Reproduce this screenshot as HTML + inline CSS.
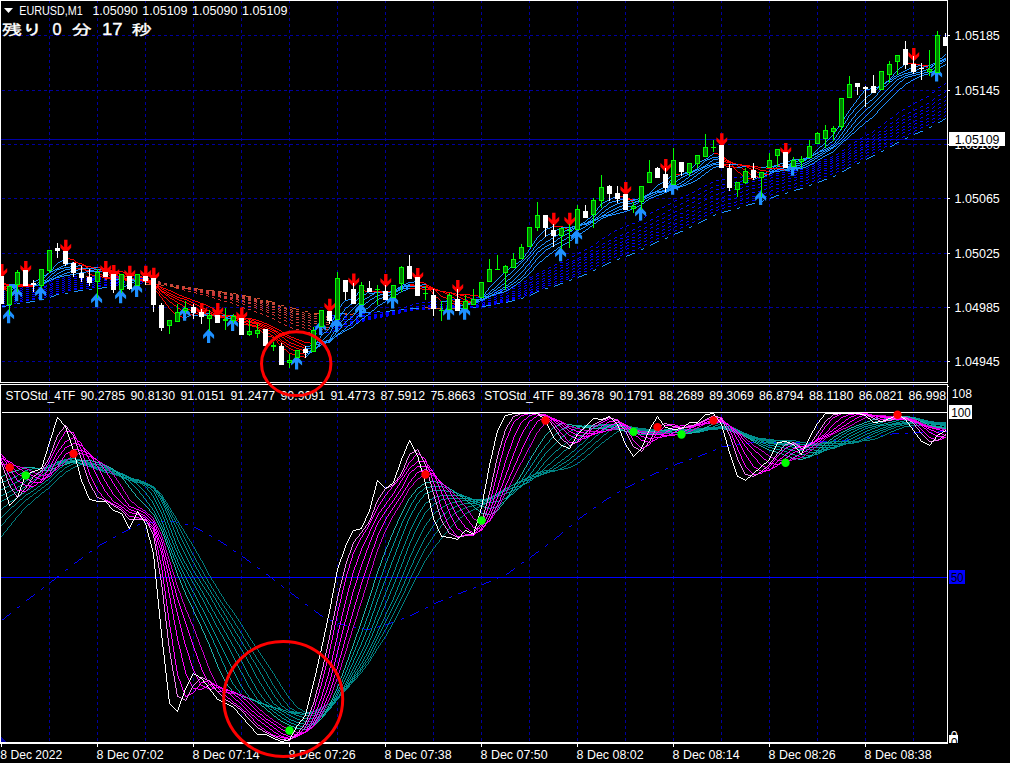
<!DOCTYPE html>
<html lang="ja"><head><meta charset="utf-8"><title>EURUSD,M1</title>
<style>html,body{margin:0;padding:0;background:#000;overflow:hidden}svg{display:block}</style>
</head><body>
<svg width="1012" height="763" viewBox="0 0 1012 763" shape-rendering="crispEdges">
<defs>
<clipPath id="cpMain"><rect x="1" y="1" width="946" height="381"/></clipPath>
<clipPath id="cpInd"><rect x="1" y="385" width="946" height="357"/></clipPath>
<clipPath id="cpHdr"><rect x="1" y="385" width="946" height="27"/></clipPath>
<clipPath id="cpStripes"><rect x="2" y="1" width="3" height="381"/><rect x="8" y="1" width="3" height="381"/><rect x="14" y="1" width="3" height="381"/><rect x="20" y="1" width="3" height="381"/><rect x="26" y="1" width="3" height="381"/><rect x="32" y="1" width="3" height="381"/><rect x="38" y="1" width="3" height="381"/><rect x="44" y="1" width="3" height="381"/><rect x="50" y="1" width="3" height="381"/><rect x="56" y="1" width="3" height="381"/><rect x="62" y="1" width="3" height="381"/><rect x="68" y="1" width="3" height="381"/><rect x="74" y="1" width="3" height="381"/><rect x="80" y="1" width="3" height="381"/><rect x="86" y="1" width="3" height="381"/><rect x="92" y="1" width="3" height="381"/><rect x="98" y="1" width="3" height="381"/><rect x="104" y="1" width="3" height="381"/><rect x="110" y="1" width="3" height="381"/><rect x="116" y="1" width="3" height="381"/><rect x="122" y="1" width="3" height="381"/><rect x="128" y="1" width="3" height="381"/><rect x="134" y="1" width="3" height="381"/><rect x="140" y="1" width="3" height="381"/><rect x="146" y="1" width="3" height="381"/><rect x="152" y="1" width="3" height="381"/><rect x="158" y="1" width="3" height="381"/><rect x="164" y="1" width="3" height="381"/><rect x="170" y="1" width="3" height="381"/><rect x="176" y="1" width="3" height="381"/><rect x="182" y="1" width="3" height="381"/><rect x="188" y="1" width="3" height="381"/><rect x="194" y="1" width="3" height="381"/><rect x="200" y="1" width="3" height="381"/><rect x="206" y="1" width="3" height="381"/><rect x="212" y="1" width="3" height="381"/><rect x="218" y="1" width="3" height="381"/><rect x="224" y="1" width="3" height="381"/><rect x="230" y="1" width="3" height="381"/><rect x="236" y="1" width="3" height="381"/><rect x="242" y="1" width="3" height="381"/><rect x="248" y="1" width="3" height="381"/><rect x="254" y="1" width="3" height="381"/><rect x="260" y="1" width="3" height="381"/><rect x="266" y="1" width="3" height="381"/><rect x="272" y="1" width="3" height="381"/><rect x="278" y="1" width="3" height="381"/><rect x="284" y="1" width="3" height="381"/><rect x="290" y="1" width="3" height="381"/><rect x="296" y="1" width="3" height="381"/><rect x="302" y="1" width="3" height="381"/><rect x="308" y="1" width="3" height="381"/><rect x="314" y="1" width="3" height="381"/><rect x="320" y="1" width="3" height="381"/><rect x="326" y="1" width="3" height="381"/><rect x="332" y="1" width="3" height="381"/><rect x="338" y="1" width="3" height="381"/><rect x="344" y="1" width="3" height="381"/><rect x="350" y="1" width="3" height="381"/><rect x="356" y="1" width="3" height="381"/><rect x="362" y="1" width="3" height="381"/><rect x="368" y="1" width="3" height="381"/><rect x="374" y="1" width="3" height="381"/><rect x="380" y="1" width="3" height="381"/><rect x="386" y="1" width="3" height="381"/><rect x="392" y="1" width="3" height="381"/><rect x="398" y="1" width="3" height="381"/><rect x="404" y="1" width="3" height="381"/><rect x="410" y="1" width="3" height="381"/><rect x="416" y="1" width="3" height="381"/><rect x="422" y="1" width="3" height="381"/><rect x="428" y="1" width="3" height="381"/><rect x="434" y="1" width="3" height="381"/><rect x="440" y="1" width="3" height="381"/><rect x="446" y="1" width="3" height="381"/><rect x="452" y="1" width="3" height="381"/><rect x="458" y="1" width="3" height="381"/><rect x="464" y="1" width="3" height="381"/><rect x="470" y="1" width="3" height="381"/><rect x="476" y="1" width="3" height="381"/><rect x="482" y="1" width="3" height="381"/><rect x="488" y="1" width="3" height="381"/><rect x="494" y="1" width="3" height="381"/><rect x="500" y="1" width="3" height="381"/><rect x="506" y="1" width="3" height="381"/><rect x="512" y="1" width="3" height="381"/><rect x="518" y="1" width="3" height="381"/><rect x="524" y="1" width="3" height="381"/><rect x="530" y="1" width="3" height="381"/><rect x="536" y="1" width="3" height="381"/><rect x="542" y="1" width="3" height="381"/><rect x="548" y="1" width="3" height="381"/><rect x="554" y="1" width="3" height="381"/><rect x="560" y="1" width="3" height="381"/><rect x="566" y="1" width="3" height="381"/><rect x="572" y="1" width="3" height="381"/><rect x="578" y="1" width="3" height="381"/><rect x="584" y="1" width="3" height="381"/><rect x="590" y="1" width="3" height="381"/><rect x="596" y="1" width="3" height="381"/><rect x="602" y="1" width="3" height="381"/><rect x="608" y="1" width="3" height="381"/><rect x="614" y="1" width="3" height="381"/><rect x="620" y="1" width="3" height="381"/><rect x="626" y="1" width="3" height="381"/><rect x="632" y="1" width="3" height="381"/><rect x="638" y="1" width="3" height="381"/><rect x="644" y="1" width="3" height="381"/><rect x="650" y="1" width="3" height="381"/><rect x="656" y="1" width="3" height="381"/><rect x="662" y="1" width="3" height="381"/><rect x="668" y="1" width="3" height="381"/><rect x="674" y="1" width="3" height="381"/><rect x="680" y="1" width="3" height="381"/><rect x="686" y="1" width="3" height="381"/><rect x="692" y="1" width="3" height="381"/><rect x="698" y="1" width="3" height="381"/><rect x="704" y="1" width="3" height="381"/><rect x="710" y="1" width="3" height="381"/><rect x="716" y="1" width="3" height="381"/><rect x="722" y="1" width="3" height="381"/><rect x="728" y="1" width="3" height="381"/><rect x="734" y="1" width="3" height="381"/><rect x="740" y="1" width="3" height="381"/><rect x="746" y="1" width="3" height="381"/><rect x="752" y="1" width="3" height="381"/><rect x="758" y="1" width="3" height="381"/><rect x="764" y="1" width="3" height="381"/><rect x="770" y="1" width="3" height="381"/><rect x="776" y="1" width="3" height="381"/><rect x="782" y="1" width="3" height="381"/><rect x="788" y="1" width="3" height="381"/><rect x="794" y="1" width="3" height="381"/><rect x="800" y="1" width="3" height="381"/><rect x="806" y="1" width="3" height="381"/><rect x="812" y="1" width="3" height="381"/><rect x="818" y="1" width="3" height="381"/><rect x="824" y="1" width="3" height="381"/><rect x="830" y="1" width="3" height="381"/><rect x="836" y="1" width="3" height="381"/><rect x="842" y="1" width="3" height="381"/><rect x="848" y="1" width="3" height="381"/><rect x="854" y="1" width="3" height="381"/><rect x="860" y="1" width="3" height="381"/><rect x="866" y="1" width="3" height="381"/><rect x="872" y="1" width="3" height="381"/><rect x="878" y="1" width="3" height="381"/><rect x="884" y="1" width="3" height="381"/><rect x="890" y="1" width="3" height="381"/><rect x="896" y="1" width="3" height="381"/><rect x="902" y="1" width="3" height="381"/><rect x="908" y="1" width="3" height="381"/><rect x="914" y="1" width="3" height="381"/><rect x="920" y="1" width="3" height="381"/><rect x="926" y="1" width="3" height="381"/><rect x="932" y="1" width="3" height="381"/><rect x="938" y="1" width="3" height="381"/><rect x="944" y="1" width="3" height="381"/></clipPath>
<clipPath id="cpDashDot"><rect x="2" y="1" width="9" height="381"/><rect x="17" y="1" width="3" height="381"/><rect x="26" y="1" width="9" height="381"/><rect x="41" y="1" width="3" height="381"/><rect x="50" y="1" width="9" height="381"/><rect x="65" y="1" width="3" height="381"/><rect x="74" y="1" width="9" height="381"/><rect x="89" y="1" width="3" height="381"/><rect x="98" y="1" width="9" height="381"/><rect x="113" y="1" width="3" height="381"/><rect x="122" y="1" width="9" height="381"/><rect x="137" y="1" width="3" height="381"/><rect x="146" y="1" width="9" height="381"/><rect x="161" y="1" width="3" height="381"/><rect x="170" y="1" width="9" height="381"/><rect x="185" y="1" width="3" height="381"/><rect x="194" y="1" width="9" height="381"/><rect x="209" y="1" width="3" height="381"/><rect x="218" y="1" width="9" height="381"/><rect x="233" y="1" width="3" height="381"/><rect x="242" y="1" width="9" height="381"/><rect x="257" y="1" width="3" height="381"/><rect x="266" y="1" width="9" height="381"/><rect x="281" y="1" width="3" height="381"/><rect x="290" y="1" width="9" height="381"/><rect x="305" y="1" width="3" height="381"/><rect x="314" y="1" width="9" height="381"/><rect x="329" y="1" width="3" height="381"/><rect x="338" y="1" width="9" height="381"/><rect x="353" y="1" width="3" height="381"/><rect x="362" y="1" width="9" height="381"/><rect x="377" y="1" width="3" height="381"/><rect x="386" y="1" width="9" height="381"/><rect x="401" y="1" width="3" height="381"/><rect x="410" y="1" width="9" height="381"/><rect x="425" y="1" width="3" height="381"/><rect x="434" y="1" width="9" height="381"/><rect x="449" y="1" width="3" height="381"/><rect x="458" y="1" width="9" height="381"/><rect x="473" y="1" width="3" height="381"/><rect x="482" y="1" width="9" height="381"/><rect x="497" y="1" width="3" height="381"/><rect x="506" y="1" width="9" height="381"/><rect x="521" y="1" width="3" height="381"/><rect x="530" y="1" width="9" height="381"/><rect x="545" y="1" width="3" height="381"/><rect x="554" y="1" width="9" height="381"/><rect x="569" y="1" width="3" height="381"/><rect x="578" y="1" width="9" height="381"/><rect x="593" y="1" width="3" height="381"/><rect x="602" y="1" width="9" height="381"/><rect x="617" y="1" width="3" height="381"/><rect x="626" y="1" width="9" height="381"/><rect x="641" y="1" width="3" height="381"/><rect x="650" y="1" width="9" height="381"/><rect x="665" y="1" width="3" height="381"/><rect x="674" y="1" width="9" height="381"/><rect x="689" y="1" width="3" height="381"/><rect x="698" y="1" width="9" height="381"/><rect x="713" y="1" width="3" height="381"/><rect x="722" y="1" width="9" height="381"/><rect x="737" y="1" width="3" height="381"/><rect x="746" y="1" width="9" height="381"/><rect x="761" y="1" width="3" height="381"/><rect x="770" y="1" width="9" height="381"/><rect x="785" y="1" width="3" height="381"/><rect x="794" y="1" width="9" height="381"/><rect x="809" y="1" width="3" height="381"/><rect x="818" y="1" width="9" height="381"/><rect x="833" y="1" width="3" height="381"/><rect x="842" y="1" width="9" height="381"/><rect x="857" y="1" width="3" height="381"/><rect x="866" y="1" width="9" height="381"/><rect x="881" y="1" width="3" height="381"/><rect x="890" y="1" width="9" height="381"/><rect x="905" y="1" width="3" height="381"/><rect x="914" y="1" width="9" height="381"/><rect x="929" y="1" width="3" height="381"/><rect x="938" y="1" width="9" height="381"/><rect x="953" y="1" width="3" height="381"/></clipPath>
<clipPath id="cpDashDot2"><rect x="2" y="385" width="9" height="357"/><rect x="17" y="385" width="3" height="357"/><rect x="26" y="385" width="9" height="357"/><rect x="41" y="385" width="3" height="357"/><rect x="50" y="385" width="9" height="357"/><rect x="65" y="385" width="3" height="357"/><rect x="74" y="385" width="9" height="357"/><rect x="89" y="385" width="3" height="357"/><rect x="98" y="385" width="9" height="357"/><rect x="113" y="385" width="3" height="357"/><rect x="122" y="385" width="9" height="357"/><rect x="137" y="385" width="3" height="357"/><rect x="146" y="385" width="9" height="357"/><rect x="161" y="385" width="3" height="357"/><rect x="170" y="385" width="9" height="357"/><rect x="185" y="385" width="3" height="357"/><rect x="194" y="385" width="9" height="357"/><rect x="209" y="385" width="3" height="357"/><rect x="218" y="385" width="9" height="357"/><rect x="233" y="385" width="3" height="357"/><rect x="242" y="385" width="9" height="357"/><rect x="257" y="385" width="3" height="357"/><rect x="266" y="385" width="9" height="357"/><rect x="281" y="385" width="3" height="357"/><rect x="290" y="385" width="9" height="357"/><rect x="305" y="385" width="3" height="357"/><rect x="314" y="385" width="9" height="357"/><rect x="329" y="385" width="3" height="357"/><rect x="338" y="385" width="9" height="357"/><rect x="353" y="385" width="3" height="357"/><rect x="362" y="385" width="9" height="357"/><rect x="377" y="385" width="3" height="357"/><rect x="386" y="385" width="9" height="357"/><rect x="401" y="385" width="3" height="357"/><rect x="410" y="385" width="9" height="357"/><rect x="425" y="385" width="3" height="357"/><rect x="434" y="385" width="9" height="357"/><rect x="449" y="385" width="3" height="357"/><rect x="458" y="385" width="9" height="357"/><rect x="473" y="385" width="3" height="357"/><rect x="482" y="385" width="9" height="357"/><rect x="497" y="385" width="3" height="357"/><rect x="506" y="385" width="9" height="357"/><rect x="521" y="385" width="3" height="357"/><rect x="530" y="385" width="9" height="357"/><rect x="545" y="385" width="3" height="357"/><rect x="554" y="385" width="9" height="357"/><rect x="569" y="385" width="3" height="357"/><rect x="578" y="385" width="9" height="357"/><rect x="593" y="385" width="3" height="357"/><rect x="602" y="385" width="9" height="357"/><rect x="617" y="385" width="3" height="357"/><rect x="626" y="385" width="9" height="357"/><rect x="641" y="385" width="3" height="357"/><rect x="650" y="385" width="9" height="357"/><rect x="665" y="385" width="3" height="357"/><rect x="674" y="385" width="9" height="357"/><rect x="689" y="385" width="3" height="357"/><rect x="698" y="385" width="9" height="357"/><rect x="713" y="385" width="3" height="357"/><rect x="722" y="385" width="9" height="357"/><rect x="737" y="385" width="3" height="357"/><rect x="746" y="385" width="9" height="357"/><rect x="761" y="385" width="3" height="357"/><rect x="770" y="385" width="9" height="357"/><rect x="785" y="385" width="3" height="357"/><rect x="794" y="385" width="9" height="357"/><rect x="809" y="385" width="3" height="357"/><rect x="818" y="385" width="9" height="357"/><rect x="833" y="385" width="3" height="357"/><rect x="842" y="385" width="9" height="357"/><rect x="857" y="385" width="3" height="357"/><rect x="866" y="385" width="9" height="357"/><rect x="881" y="385" width="3" height="357"/><rect x="890" y="385" width="9" height="357"/><rect x="905" y="385" width="3" height="357"/><rect x="914" y="385" width="9" height="357"/><rect x="929" y="385" width="3" height="357"/><rect x="938" y="385" width="9" height="357"/><rect x="953" y="385" width="3" height="357"/></clipPath>
<clipPath id="cpZero"><rect x="949" y="735" width="9" height="8"/></clipPath>
</defs>
<rect width="1012" height="763" fill="#000"/>
<g stroke="#0000a0" stroke-width="1" stroke-dasharray="3 3" fill="none"><line x1="2" y1="35.5" x2="947" y2="35.5"/><line x1="2" y1="90.5" x2="947" y2="90.5"/><line x1="2" y1="144.5" x2="947" y2="144.5"/><line x1="2" y1="198.5" x2="947" y2="198.5"/><line x1="2" y1="253.5" x2="947" y2="253.5"/><line x1="2" y1="307.5" x2="947" y2="307.5"/><line x1="2" y1="361.5" x2="947" y2="361.5"/><line x1="49.5" y1="0" x2="49.5" y2="382"/><line x1="49.5" y1="384" x2="49.5" y2="742"/><line x1="97.5" y1="0" x2="97.5" y2="382"/><line x1="97.5" y1="384" x2="97.5" y2="742"/><line x1="145.5" y1="0" x2="145.5" y2="382"/><line x1="145.5" y1="384" x2="145.5" y2="742"/><line x1="193.5" y1="0" x2="193.5" y2="382"/><line x1="193.5" y1="384" x2="193.5" y2="742"/><line x1="241.5" y1="0" x2="241.5" y2="382"/><line x1="241.5" y1="384" x2="241.5" y2="742"/><line x1="289.5" y1="0" x2="289.5" y2="382"/><line x1="289.5" y1="384" x2="289.5" y2="742"/><line x1="337.5" y1="0" x2="337.5" y2="382"/><line x1="337.5" y1="384" x2="337.5" y2="742"/><line x1="385.5" y1="0" x2="385.5" y2="382"/><line x1="385.5" y1="384" x2="385.5" y2="742"/><line x1="433.5" y1="0" x2="433.5" y2="382"/><line x1="433.5" y1="384" x2="433.5" y2="742"/><line x1="481.5" y1="0" x2="481.5" y2="382"/><line x1="481.5" y1="384" x2="481.5" y2="742"/><line x1="529.5" y1="0" x2="529.5" y2="382"/><line x1="529.5" y1="384" x2="529.5" y2="742"/><line x1="577.5" y1="0" x2="577.5" y2="382"/><line x1="577.5" y1="384" x2="577.5" y2="742"/><line x1="625.5" y1="0" x2="625.5" y2="382"/><line x1="625.5" y1="384" x2="625.5" y2="742"/><line x1="673.5" y1="0" x2="673.5" y2="382"/><line x1="673.5" y1="384" x2="673.5" y2="742"/><line x1="721.5" y1="0" x2="721.5" y2="382"/><line x1="721.5" y1="384" x2="721.5" y2="742"/><line x1="769.5" y1="0" x2="769.5" y2="382"/><line x1="769.5" y1="384" x2="769.5" y2="742"/><line x1="817.5" y1="0" x2="817.5" y2="382"/><line x1="817.5" y1="384" x2="817.5" y2="742"/><line x1="865.5" y1="0" x2="865.5" y2="382"/><line x1="865.5" y1="384" x2="865.5" y2="742"/><line x1="913.5" y1="0" x2="913.5" y2="382"/><line x1="913.5" y1="384" x2="913.5" y2="742"/></g>
<rect x="1" y="139" width="946" height="1" fill="#0000a8"/>
<g fill="none" stroke-width="1" clip-path="url(#cpStripes)"><path d="M1 291.5h5M6 290.5h3M9 290.5h3M12 289.5h4M16 288.5h1M17 288.5h5M22 287.5h3M25 287.5h5M30 286.5h3M33 286.5h3M36 285.5h4M40 284.5h1M41 284.5h2M43 283.5h3M46 282.5h2M48 281.5h1M49 281.5h3M52 280.5h4M56 279.5h1M57 279.5h3M60 278.5h4M64 277.5h1M65 277.5h5M70 276.5h3M73 276.5h9M89 276.5h8M97 276.5h5M102 275.5h4M113 276.5h9M129 277.5h5M134 276.5h4M313 333.5h5M318 332.5h3M321 332.5h8M329 332.5h2M331 331.5h2M333 330.5h2M335 329.5h2M337 328.5h3M340 327.5h4M344 326.5h1M345 326.5h3M348 325.5h4M352 324.5h1M353 324.5h2M355 323.5h3M358 322.5h2M360 321.5h1M361 321.5h3M364 320.5h4M368 319.5h1M369 319.5h2M371 318.5h3M374 317.5h2M376 316.5h1M377 316.5h5M382 315.5h3M385 315.5h2M387 314.5h3M390 313.5h2M392 312.5h1M393 312.5h2M395 311.5h2M397 310.5h2M399 309.5h2M401 308.5h2M403 307.5h3M406 306.5h2M408 305.5h1M409 305.5h3M412 304.5h4M416 303.5h1M417 303.5h5M422 302.5h3M425 302.5h5M430 301.5h3M433 301.5h8M441 301.5h3M444 300.5h4M448 299.5h1M449 299.5h8M457 299.5h8M465 299.5h5M470 298.5h3M473 298.5h3M476 297.5h4M480 296.5h1M481 296.5h2M483 295.5h3M486 294.5h2M488 293.5h1M489 293.5h3M492 292.5h4M496 291.5h1M497 291.5h3M500 290.5h4M504 289.5h1M505 289.5h2M507 288.5h3M510 287.5h2M512 286.5h1M513 286.5h2M515 285.5h3M518 284.5h2M520 283.5h1M521 283.5h1M522 282.5h2M524 281.5h2M526 280.5h1M527 279.5h2M529 278.5h1M530 277.5h2M532 276.5h2M534 275.5h1M535 274.5h2M537 273.5h2M539 272.5h2M541 271.5h2M543 270.5h2M545 269.5h2M547 268.5h2M549 267.5h2M551 266.5h2M553 265.5h2M555 264.5h3M558 263.5h2M560 262.5h1M561 262.5h2M563 261.5h2M565 260.5h2M567 259.5h2M569 258.5h1M570 257.5h2M572 256.5h2M574 255.5h1M575 254.5h2M577 253.5h2M579 252.5h2M581 251.5h2M583 250.5h2M585 249.5h2M587 248.5h2M589 247.5h2M591 246.5h2M593 245.5h1M594 244.5h2M596 243.5h1M597 242.5h1M598 241.5h2M600 240.5h1M601 239.5h1M602 238.5h2M604 237.5h2M606 236.5h1M607 235.5h2M609 234.5h1M610 233.5h2M612 232.5h2M614 231.5h1M615 230.5h2M617 229.5h2M619 228.5h3M622 227.5h2M624 226.5h1M625 226.5h2M627 225.5h3M630 224.5h2M632 223.5h1M633 223.5h2M635 222.5h2M637 221.5h2M639 220.5h2M641 219.5h1M642 218.5h2M644 217.5h1M645 216.5h1M646 215.5h2M648 214.5h1M649 213.5h2M651 212.5h2M653 211.5h2M655 210.5h2M657 209.5h2M659 208.5h3M662 207.5h2M664 206.5h1M665 206.5h1M666 205.5h2M668 204.5h2M670 203.5h1M671 202.5h2M673 201.5h2M675 200.5h2M677 199.5h2M679 198.5h2M681 197.5h2M683 196.5h3M686 195.5h2M688 194.5h1M689 194.5h1M690 193.5h2M692 192.5h2M694 191.5h1M695 190.5h2M697 189.5h2M699 188.5h2M701 187.5h2M703 186.5h2M705 185.5h2M707 184.5h2M709 183.5h2M711 182.5h2M713 181.5h3M716 180.5h4M720 179.5h1M721 179.5h5M726 178.5h3M729 178.5h5M734 177.5h3M737 177.5h5M742 176.5h3M745 176.5h5M750 175.5h3M753 175.5h5M758 174.5h3M761 174.5h3M764 173.5h4M768 172.5h1M769 172.5h3M772 171.5h4M776 170.5h1M777 170.5h5M782 169.5h3M785 169.5h5M790 168.5h3M793 168.5h5M798 167.5h3M801 167.5h3M804 166.5h4M808 165.5h1M809 165.5h2M811 164.5h3M814 163.5h2M816 162.5h1M817 162.5h2M819 161.5h3M822 160.5h2M824 159.5h1M825 159.5h2M827 158.5h3M830 157.5h2M832 156.5h1M833 156.5h1M834 155.5h2M836 154.5h2M838 153.5h1M839 152.5h2M841 151.5h1M842 150.5h2M844 149.5h1M845 148.5h1M846 147.5h2M848 146.5h1M849 145.5h1M850 144.5h2M852 143.5h2M854 142.5h1M855 141.5h2M857 140.5h1M858 139.5h2M860 138.5h2M862 137.5h1M863 136.5h2M865 135.5h2M867 134.5h2M869 133.5h2M871 132.5h2M873 131.5h1M874 130.5h2M876 129.5h1M877 128.5h1M878 127.5h2M880 126.5h1M881 125.5h1M882 124.5h2M884 123.5h1M885 122.5h1M886 121.5h2M888 120.5h1M889 119.5h1M890 118.5h2M892 117.5h1M893 116.5h1M894 115.5h2M896 114.5h1M897 113.5h1M898 112.5h2M900 111.5h2M902 110.5h1M903 109.5h2M905 108.5h1M906 107.5h2M908 106.5h2M910 105.5h1M911 104.5h2M913 103.5h2M915 102.5h2M917 101.5h2M919 100.5h2M921 99.5h2M923 98.5h2M925 97.5h2M927 96.5h2M929 95.5h1M930 94.5h1M931 93.5h1M932 92.5h2M934 91.5h1M935 90.5h1M936 89.5h1M937 88.5h1M938 87.5h2M940 86.5h2M942 85.5h1M943 84.5h2M945 83.5h1" stroke="#0000ff"/><path d="M81 276.5h9M105 275.5h5M110 276.5h4M121 276.5h5M126 277.5h4M137 276.5h5M142 277.5h3M145 277.5h3M148 278.5h4M152 279.5h1M153 279.5h2M155 280.5h3M158 281.5h2M160 282.5h1M161 282.5h2M163 283.5h3M166 284.5h2M168 285.5h1M169 285.5h2M171 286.5h3M174 287.5h2M176 288.5h1M177 288.5h3M180 289.5h4M184 290.5h1M185 290.5h3M188 291.5h4M192 292.5h1M193 292.5h3M196 293.5h4M200 294.5h1M201 294.5h3M204 295.5h4M208 296.5h1M209 296.5h2M211 297.5h3M214 298.5h2M216 299.5h1M217 299.5h3M220 300.5h4M224 301.5h1M225 301.5h3M228 302.5h4M232 303.5h1M233 303.5h2M235 304.5h2M237 305.5h2M239 306.5h2M241 307.5h3M244 308.5h4M248 309.5h1M249 309.5h2M251 310.5h3M254 311.5h2M256 312.5h1M257 312.5h2M259 313.5h3M262 314.5h2M264 315.5h1M265 315.5h2M267 316.5h3M270 317.5h2M272 318.5h1M273 318.5h1M274 319.5h2M276 320.5h2M278 321.5h1M279 322.5h2M281 323.5h2M283 324.5h2M285 325.5h2M287 326.5h2M289 327.5h3M292 328.5h4M296 329.5h1M297 329.5h2M299 330.5h3M302 331.5h2M304 332.5h1M305 332.5h5M310 333.5h4" stroke="#d83030"/><path d="M1 294.5h3M4 293.5h4M8 292.5h1M9 292.5h3M12 291.5h4M16 290.5h1M17 290.5h5M22 289.5h3M25 289.5h5M30 288.5h3M33 288.5h5M38 287.5h3M41 287.5h2M43 286.5h3M46 285.5h2M48 284.5h1M49 284.5h2M51 283.5h3M54 282.5h2M56 281.5h1M57 281.5h3M60 280.5h4M64 279.5h1M65 279.5h5M70 278.5h3M73 278.5h8M81 278.5h8M89 278.5h5M94 277.5h3M97 277.5h9M113 277.5h9M129 277.5h9M313 329.5h9M329 329.5h2M331 328.5h3M334 327.5h2M336 326.5h1M337 326.5h3M340 325.5h4M344 324.5h1M345 324.5h5M350 323.5h3M353 323.5h3M356 322.5h4M360 321.5h1M361 321.5h3M364 320.5h4M368 319.5h1M369 319.5h3M372 318.5h4M376 317.5h1M377 317.5h5M382 316.5h3M385 316.5h3M388 315.5h4M392 314.5h1M393 314.5h2M395 313.5h2M397 312.5h2M399 311.5h2M401 310.5h3M404 309.5h4M408 308.5h1M409 308.5h3M412 307.5h4M416 306.5h1M417 306.5h5M422 305.5h3M425 305.5h5M430 304.5h3M433 304.5h8M441 304.5h5M446 303.5h3M449 303.5h8M457 303.5h5M462 302.5h3M465 302.5h5M470 301.5h3M473 301.5h3M476 300.5h4M480 299.5h1M481 299.5h2M483 298.5h3M486 297.5h2M488 296.5h1M489 296.5h3M492 295.5h4M496 294.5h1M497 294.5h2M499 293.5h3M502 292.5h2M504 291.5h1M505 291.5h2M507 290.5h3M510 289.5h2M512 288.5h1M513 288.5h2M515 287.5h3M518 286.5h2M520 285.5h1M521 285.5h1M522 284.5h2M524 283.5h2M526 282.5h1M527 281.5h2M529 280.5h1M530 279.5h2M532 278.5h2M534 277.5h1M535 276.5h2M537 275.5h2M539 274.5h3M542 273.5h2M544 272.5h1M545 272.5h2M547 271.5h2M549 270.5h2M551 269.5h2M553 268.5h2M555 267.5h3M558 266.5h2M560 265.5h1M561 265.5h2M563 264.5h3M566 263.5h2M568 262.5h1M569 262.5h2M571 261.5h2M573 260.5h2M575 259.5h2M577 258.5h2M579 257.5h2M581 256.5h2M583 255.5h2M585 254.5h1M586 253.5h2M588 252.5h2M590 251.5h1M591 250.5h2M593 249.5h1M594 248.5h2M596 247.5h2M598 246.5h1M599 245.5h2M601 244.5h2M603 243.5h2M605 242.5h2M607 241.5h2M609 240.5h2M611 239.5h2M613 238.5h2M615 237.5h2M617 236.5h2M619 235.5h3M622 234.5h2M624 233.5h1M625 233.5h2M627 232.5h2M629 231.5h2M631 230.5h2M633 229.5h2M635 228.5h2M637 227.5h2M639 226.5h2M641 225.5h1M642 224.5h2M644 223.5h2M646 222.5h1M647 221.5h2M649 220.5h2M651 219.5h2M653 218.5h2M655 217.5h2M657 216.5h2M659 215.5h2M661 214.5h2M663 213.5h2M665 212.5h1M666 211.5h2M668 210.5h2M670 209.5h1M671 208.5h2M673 207.5h2M675 206.5h2M677 205.5h2M679 204.5h2M681 203.5h2M683 202.5h2M685 201.5h2M687 200.5h2M689 199.5h2M691 198.5h2M693 197.5h2M695 196.5h2M697 195.5h1M698 194.5h2M700 193.5h2M702 192.5h1M703 191.5h2M705 190.5h2M707 189.5h2M709 188.5h2M711 187.5h2M713 186.5h3M716 185.5h4M720 184.5h1M721 184.5h5M726 183.5h3M729 183.5h3M732 182.5h4M736 181.5h1M737 181.5h5M742 180.5h3M745 180.5h5M750 179.5h3M753 179.5h3M756 178.5h4M760 177.5h1M761 177.5h3M764 176.5h4M768 175.5h1M769 175.5h3M772 174.5h4M776 173.5h1M777 173.5h5M782 172.5h3M785 172.5h3M788 171.5h4M792 170.5h1M793 170.5h5M798 169.5h3M801 169.5h3M804 168.5h4M808 167.5h1M809 167.5h2M811 166.5h3M814 165.5h2M816 164.5h1M817 164.5h2M819 163.5h3M822 162.5h2M824 161.5h1M825 161.5h2M827 160.5h3M830 159.5h2M832 158.5h1M833 158.5h2M835 157.5h2M837 156.5h2M839 155.5h2M841 154.5h1M842 153.5h2M844 152.5h1M845 151.5h1M846 150.5h2M848 149.5h1M849 148.5h1M850 147.5h2M852 146.5h2M854 145.5h1M855 144.5h2M857 143.5h2M859 142.5h2M861 141.5h2M863 140.5h2M865 139.5h2M867 138.5h2M869 137.5h2M871 136.5h2M873 135.5h1M874 134.5h2M876 133.5h2M878 132.5h1M879 131.5h2M881 130.5h1M882 129.5h2M884 128.5h1M885 127.5h1M886 126.5h2M888 125.5h1M889 124.5h1M890 123.5h2M892 122.5h2M894 121.5h1M895 120.5h2M897 119.5h1M898 118.5h2M900 117.5h2M902 116.5h1M903 115.5h2M905 114.5h2M907 113.5h2M909 112.5h2M911 111.5h2M913 110.5h2M915 109.5h2M917 108.5h2M919 107.5h2M921 106.5h2M923 105.5h2M925 104.5h2M927 103.5h2M929 102.5h1M930 101.5h2M932 100.5h1M933 99.5h1M934 98.5h2M936 97.5h1M937 96.5h1M938 95.5h2M940 94.5h2M942 93.5h1M943 92.5h2M945 91.5h1" stroke="#0000ff"/><path d="M105 277.5h9M121 277.5h9M137 277.5h8M145 277.5h3M148 278.5h4M152 279.5h1M153 279.5h2M155 280.5h3M158 281.5h2M160 282.5h1M161 282.5h2M163 283.5h3M166 284.5h2M168 285.5h1M169 285.5h3M172 286.5h4M176 287.5h1M177 287.5h5M182 288.5h3M185 288.5h3M188 289.5h4M192 290.5h1M193 290.5h3M196 291.5h4M200 292.5h1M201 292.5h3M204 293.5h4M208 294.5h1M209 294.5h3M212 295.5h4M216 296.5h1M217 296.5h3M220 297.5h4M224 298.5h1M225 298.5h3M228 299.5h4M232 300.5h1M233 300.5h2M235 301.5h3M238 302.5h2M240 303.5h1M241 303.5h2M243 304.5h3M246 305.5h2M248 306.5h1M249 306.5h3M252 307.5h4M256 308.5h1M257 308.5h2M259 309.5h3M262 310.5h2M264 311.5h1M265 311.5h2M267 312.5h3M270 313.5h2M272 314.5h1M273 314.5h1M274 315.5h2M276 316.5h2M278 317.5h1M279 318.5h2M281 319.5h2M283 320.5h3M286 321.5h2M288 322.5h1M289 322.5h2M291 323.5h3M294 324.5h2M296 325.5h1M297 325.5h2M299 326.5h3M302 327.5h2M304 328.5h1M305 328.5h5M310 329.5h4M321 329.5h9" stroke="#d43434"/><path d="M1 296.5h3M4 295.5h4M8 294.5h1M9 294.5h3M12 293.5h4M16 292.5h1M17 292.5h5M22 291.5h3M25 291.5h5M30 290.5h3M33 290.5h3M36 289.5h4M40 288.5h1M41 288.5h2M43 287.5h3M46 286.5h2M48 285.5h1M49 285.5h3M52 284.5h4M56 283.5h1M57 283.5h3M60 282.5h4M64 281.5h1M65 281.5h5M70 280.5h3M73 280.5h5M78 279.5h3M81 279.5h8M89 279.5h5M94 278.5h3M97 278.5h9M113 278.5h5M118 277.5h4M129 278.5h5M134 277.5h4M313 326.5h9M329 327.5h2M331 326.5h3M334 325.5h2M336 324.5h1M337 324.5h5M342 323.5h3M345 323.5h5M350 322.5h3M353 322.5h3M356 321.5h4M360 320.5h1M361 320.5h5M366 319.5h3M369 319.5h3M372 318.5h4M376 317.5h1M377 317.5h5M382 316.5h3M385 316.5h3M388 315.5h4M392 314.5h1M393 314.5h2M395 313.5h3M398 312.5h2M400 311.5h1M401 311.5h3M404 310.5h4M408 309.5h1M409 309.5h5M414 308.5h3M417 308.5h3M420 307.5h4M424 306.5h1M425 306.5h8M433 306.5h8M441 306.5h5M446 305.5h3M449 305.5h5M454 304.5h3M457 304.5h8M465 304.5h5M470 303.5h3M473 303.5h3M476 302.5h4M480 301.5h1M481 301.5h2M483 300.5h3M486 299.5h2M488 298.5h1M489 298.5h3M492 297.5h4M496 296.5h1M497 296.5h2M499 295.5h3M502 294.5h2M504 293.5h1M505 293.5h3M508 292.5h4M512 291.5h1M513 291.5h2M515 290.5h2M517 289.5h2M519 288.5h2M521 287.5h2M523 286.5h2M525 285.5h2M527 284.5h2M529 283.5h1M530 282.5h2M532 281.5h2M534 280.5h1M535 279.5h2M537 278.5h2M539 277.5h2M541 276.5h2M543 275.5h2M545 274.5h2M547 273.5h3M550 272.5h2M552 271.5h1M553 271.5h2M555 270.5h2M557 269.5h2M559 268.5h2M561 267.5h2M563 266.5h3M566 265.5h2M568 264.5h1M569 264.5h2M571 263.5h2M573 262.5h2M575 261.5h2M577 260.5h2M579 259.5h3M582 258.5h2M584 257.5h1M585 257.5h2M587 256.5h2M589 255.5h2M591 254.5h2M593 253.5h1M594 252.5h2M596 251.5h2M598 250.5h1M599 249.5h2M601 248.5h1M602 247.5h2M604 246.5h2M606 245.5h1M607 244.5h2M609 243.5h2M611 242.5h2M613 241.5h2M615 240.5h2M617 239.5h3M620 238.5h4M624 237.5h1M625 237.5h2M627 236.5h2M629 235.5h2M631 234.5h2M633 233.5h2M635 232.5h2M637 231.5h2M639 230.5h2M641 229.5h2M643 228.5h2M645 227.5h2M647 226.5h2M649 225.5h1M650 224.5h2M652 223.5h2M654 222.5h1M655 221.5h2M657 220.5h2M659 219.5h3M662 218.5h2M664 217.5h1M665 217.5h1M666 216.5h2M668 215.5h2M670 214.5h1M671 213.5h2M673 212.5h2M675 211.5h2M677 210.5h2M679 209.5h2M681 208.5h2M683 207.5h2M685 206.5h2M687 205.5h2M689 204.5h1M690 203.5h2M692 202.5h2M694 201.5h1M695 200.5h2M697 199.5h2M699 198.5h2M701 197.5h2M703 196.5h2M705 195.5h1M706 194.5h2M708 193.5h2M710 192.5h1M711 191.5h2M713 190.5h3M716 189.5h4M720 188.5h1M721 188.5h3M724 187.5h4M728 186.5h1M729 186.5h5M734 185.5h3M737 185.5h3M740 184.5h4M744 183.5h1M745 183.5h3M748 182.5h4M752 181.5h1M753 181.5h5M758 180.5h3M761 180.5h3M764 179.5h4M768 178.5h1M769 178.5h2M771 177.5h3M774 176.5h2M776 175.5h1M777 175.5h5M782 174.5h3M785 174.5h3M788 173.5h4M792 172.5h1M793 172.5h5M798 171.5h3M801 171.5h3M804 170.5h4M808 169.5h1M809 169.5h2M811 168.5h3M814 167.5h2M816 166.5h1M817 166.5h2M819 165.5h3M822 164.5h2M824 163.5h1M825 163.5h2M827 162.5h3M830 161.5h2M832 160.5h1M833 160.5h2M835 159.5h2M837 158.5h2M839 157.5h2M841 156.5h1M842 155.5h2M844 154.5h2M846 153.5h1M847 152.5h2M849 151.5h1M850 150.5h2M852 149.5h2M854 148.5h1M855 147.5h2M857 146.5h2M859 145.5h2M861 144.5h2M863 143.5h2M865 142.5h2M867 141.5h2M869 140.5h2M871 139.5h2M873 138.5h1M874 137.5h2M876 136.5h2M878 135.5h1M879 134.5h2M881 133.5h1M882 132.5h2M884 131.5h2M886 130.5h1M887 129.5h2M889 128.5h1M890 127.5h2M892 126.5h1M893 125.5h1M894 124.5h2M896 123.5h1M897 122.5h2M899 121.5h2M901 120.5h2M903 119.5h2M905 118.5h2M907 117.5h2M909 116.5h2M911 115.5h2M913 114.5h2M915 113.5h2M917 112.5h2M919 111.5h2M921 110.5h2M923 109.5h2M925 108.5h2M927 107.5h2M929 106.5h1M930 105.5h2M932 104.5h1M933 103.5h1M934 102.5h2M936 101.5h1M937 100.5h2M939 99.5h2M941 98.5h2M943 97.5h2M945 96.5h1" stroke="#0000ff"/><path d="M105 278.5h9M121 277.5h5M126 278.5h4M137 277.5h8M145 277.5h3M148 278.5h4M152 279.5h1M153 279.5h2M155 280.5h3M158 281.5h2M160 282.5h1M161 282.5h3M164 283.5h4M168 284.5h1M169 284.5h3M172 285.5h4M176 286.5h1M177 286.5h5M182 287.5h3M185 287.5h3M188 288.5h4M192 289.5h1M193 289.5h3M196 290.5h4M200 291.5h1M201 291.5h3M204 292.5h4M208 293.5h1M209 293.5h3M212 294.5h4M216 295.5h1M217 295.5h3M220 296.5h4M224 297.5h1M225 297.5h5M230 298.5h3M233 298.5h2M235 299.5h3M238 300.5h2M240 301.5h1M241 301.5h3M244 302.5h4M248 303.5h1M249 303.5h2M251 304.5h3M254 305.5h2M256 306.5h1M257 306.5h2M259 307.5h3M262 308.5h2M264 309.5h1M265 309.5h2M267 310.5h3M270 311.5h2M272 312.5h1M273 312.5h2M275 313.5h2M277 314.5h2M279 315.5h2M281 316.5h2M283 317.5h3M286 318.5h2M288 319.5h1M289 319.5h2M291 320.5h3M294 321.5h2M296 322.5h1M297 322.5h2M299 323.5h3M302 324.5h2M304 325.5h1M305 325.5h5M310 326.5h4M321 326.5h5M326 327.5h4" stroke="#d03838"/><path d="M1 298.5h3M4 297.5h4M8 296.5h1M9 296.5h3M12 295.5h4M16 294.5h1M17 294.5h5M22 293.5h3M25 293.5h5M30 292.5h3M33 292.5h3M36 291.5h4M40 290.5h1M41 290.5h2M43 289.5h3M46 288.5h2M48 287.5h1M49 287.5h3M52 286.5h4M56 285.5h1M57 285.5h3M60 284.5h4M64 283.5h1M65 283.5h5M70 282.5h3M73 282.5h5M78 281.5h3M81 281.5h5M86 280.5h3M89 280.5h5M94 279.5h3M97 279.5h9M113 279.5h5M118 278.5h4M129 279.5h5M134 278.5h3M137 278.5h9M329 324.5h3M332 323.5h4M336 322.5h1M337 322.5h5M342 321.5h3M345 321.5h8M353 321.5h3M356 320.5h4M360 319.5h1M361 319.5h5M366 318.5h3M369 318.5h5M374 317.5h3M377 317.5h5M382 316.5h3M385 316.5h3M388 315.5h4M392 314.5h1M393 314.5h3M396 313.5h4M400 312.5h1M401 312.5h3M404 311.5h4M408 310.5h1M409 310.5h5M414 309.5h3M417 309.5h5M422 308.5h3M425 308.5h5M430 307.5h3M433 307.5h8M441 307.5h5M446 306.5h3M449 306.5h8M457 306.5h5M462 305.5h3M465 305.5h5M470 304.5h3M473 304.5h5M478 303.5h3M481 303.5h2M483 302.5h3M486 301.5h2M488 300.5h1M489 300.5h3M492 299.5h4M496 298.5h1M497 298.5h3M500 297.5h4M504 296.5h1M505 296.5h2M507 295.5h3M510 294.5h2M512 293.5h1M513 293.5h2M515 292.5h3M518 291.5h2M520 290.5h1M521 290.5h1M522 289.5h2M524 288.5h2M526 287.5h1M527 286.5h2M529 285.5h2M531 284.5h2M533 283.5h2M535 282.5h2M537 281.5h2M539 280.5h2M541 279.5h2M543 278.5h2M545 277.5h2M547 276.5h3M550 275.5h2M552 274.5h1M553 274.5h2M555 273.5h2M557 272.5h2M559 271.5h2M561 270.5h2M563 269.5h3M566 268.5h2M568 267.5h1M569 267.5h2M571 266.5h2M573 265.5h2M575 264.5h2M577 263.5h2M579 262.5h2M581 261.5h2M583 260.5h2M585 259.5h2M587 258.5h2M589 257.5h2M591 256.5h2M593 255.5h2M595 254.5h2M597 253.5h2M599 252.5h2M601 251.5h2M603 250.5h2M605 249.5h2M607 248.5h2M609 247.5h2M611 246.5h2M613 245.5h2M615 244.5h2M617 243.5h2M619 242.5h3M622 241.5h2M624 240.5h1M625 240.5h2M627 239.5h3M630 238.5h2M632 237.5h1M633 237.5h2M635 236.5h2M637 235.5h2M639 234.5h2M641 233.5h1M642 232.5h2M644 231.5h2M646 230.5h1M647 229.5h2M649 228.5h2M651 227.5h2M653 226.5h2M655 225.5h2M657 224.5h2M659 223.5h3M662 222.5h2M664 221.5h1M665 221.5h1M666 220.5h2M668 219.5h2M670 218.5h1M671 217.5h2M673 216.5h2M675 215.5h3M678 214.5h2M680 213.5h1M681 213.5h2M683 212.5h2M685 211.5h2M687 210.5h2M689 209.5h1M690 208.5h2M692 207.5h2M694 206.5h1M695 205.5h2M697 204.5h1M698 203.5h2M700 202.5h2M702 201.5h1M703 200.5h2M705 199.5h2M707 198.5h2M709 197.5h2M711 196.5h2M713 195.5h2M715 194.5h3M718 193.5h2M720 192.5h1M721 192.5h3M724 191.5h4M728 190.5h1M729 190.5h5M734 189.5h3M737 189.5h2M739 188.5h3M742 187.5h2M744 186.5h1M745 186.5h5M750 185.5h3M753 185.5h3M756 184.5h4M760 183.5h1M761 183.5h3M764 182.5h4M768 181.5h1M769 181.5h2M771 180.5h3M774 179.5h2M776 178.5h1M777 178.5h3M780 177.5h4M784 176.5h1M785 176.5h5M790 175.5h3M793 175.5h3M796 174.5h4M800 173.5h1M801 173.5h3M804 172.5h4M808 171.5h1M809 171.5h2M811 170.5h3M814 169.5h2M816 168.5h1M817 168.5h2M819 167.5h3M822 166.5h2M824 165.5h1M825 165.5h2M827 164.5h3M830 163.5h2M832 162.5h1M833 162.5h2M835 161.5h2M837 160.5h2M839 159.5h2M841 158.5h1M842 157.5h2M844 156.5h2M846 155.5h1M847 154.5h2M849 153.5h2M851 152.5h2M853 151.5h2M855 150.5h2M857 149.5h2M859 148.5h2M861 147.5h2M863 146.5h2M865 145.5h2M867 144.5h2M869 143.5h2M871 142.5h2M873 141.5h1M874 140.5h2M876 139.5h2M878 138.5h1M879 137.5h2M881 136.5h1M882 135.5h2M884 134.5h2M886 133.5h1M887 132.5h2M889 131.5h1M890 130.5h2M892 129.5h2M894 128.5h1M895 127.5h2M897 126.5h1M898 125.5h2M900 124.5h2M902 123.5h1M903 122.5h2M905 121.5h2M907 120.5h2M909 119.5h2M911 118.5h2M913 117.5h2M915 116.5h2M917 115.5h2M919 114.5h2M921 113.5h2M923 112.5h3M926 111.5h2M928 110.5h1M929 110.5h1M930 109.5h2M932 108.5h1M933 107.5h1M934 106.5h2M936 105.5h1M937 104.5h2M939 103.5h2M941 102.5h2M943 101.5h2M945 100.5h1" stroke="#0000ff"/><path d="M105 279.5h9M121 278.5h5M126 279.5h4M145 278.5h5M150 279.5h3M153 279.5h2M155 280.5h3M158 281.5h2M160 282.5h1M161 282.5h3M164 283.5h4M168 284.5h1M169 284.5h5M174 285.5h3M177 285.5h3M180 286.5h4M184 287.5h1M185 287.5h5M190 288.5h3M193 288.5h3M196 289.5h4M200 290.5h1M201 290.5h3M204 291.5h4M208 292.5h1M209 292.5h3M212 293.5h4M216 294.5h1M217 294.5h3M220 295.5h4M224 296.5h1M225 296.5h5M230 297.5h3M233 297.5h2M235 298.5h3M238 299.5h2M240 300.5h1M241 300.5h3M244 301.5h4M248 302.5h1M249 302.5h3M252 303.5h4M256 304.5h1M257 304.5h2M259 305.5h3M262 306.5h2M264 307.5h1M265 307.5h3M268 308.5h4M272 309.5h1M273 309.5h2M275 310.5h2M277 311.5h2M279 312.5h2M281 313.5h2M283 314.5h3M286 315.5h2M288 316.5h1M289 316.5h2M291 317.5h3M294 318.5h2M296 319.5h1M297 319.5h2M299 320.5h3M302 321.5h2M304 322.5h1M305 322.5h5M310 323.5h3M313 323.5h8M321 323.5h5M326 324.5h4" stroke="#cc3c3c"/><path d="M1 300.5h3M4 299.5h4M8 298.5h1M9 298.5h3M12 297.5h4M16 296.5h1M17 296.5h5M22 295.5h3M25 295.5h5M30 294.5h3M33 294.5h3M36 293.5h4M40 292.5h1M41 292.5h2M43 291.5h3M46 290.5h2M48 289.5h1M49 289.5h3M52 288.5h4M56 287.5h1M57 287.5h3M60 286.5h4M64 285.5h1M65 285.5h5M70 284.5h3M73 284.5h5M78 283.5h3M81 283.5h5M86 282.5h3M89 282.5h5M94 281.5h3M97 281.5h5M102 280.5h3M105 280.5h8M113 280.5h5M118 279.5h4M129 280.5h5M134 279.5h3M137 279.5h9M329 322.5h3M332 321.5h4M336 320.5h1M337 320.5h5M342 319.5h3M345 319.5h8M353 319.5h5M358 318.5h3M361 318.5h5M366 317.5h3M369 317.5h5M374 316.5h3M377 316.5h5M382 315.5h3M385 315.5h5M390 314.5h3M393 314.5h3M396 313.5h4M400 312.5h1M401 312.5h3M404 311.5h4M408 310.5h1M409 310.5h5M414 309.5h3M417 309.5h5M422 308.5h3M425 308.5h8M433 308.5h8M441 308.5h5M446 307.5h3M449 307.5h8M457 307.5h5M462 306.5h3M465 306.5h8M473 306.5h3M476 305.5h4M480 304.5h1M481 304.5h3M484 303.5h4M488 302.5h1M489 302.5h3M492 301.5h4M496 300.5h1M497 300.5h2M499 299.5h3M502 298.5h2M504 297.5h1M505 297.5h3M508 296.5h4M512 295.5h1M513 295.5h2M515 294.5h3M518 293.5h2M520 292.5h1M521 292.5h2M523 291.5h2M525 290.5h2M527 289.5h2M529 288.5h1M530 287.5h2M532 286.5h2M534 285.5h1M535 284.5h2M537 283.5h2M539 282.5h3M542 281.5h2M544 280.5h1M545 280.5h2M547 279.5h3M550 278.5h2M552 277.5h1M553 277.5h2M555 276.5h2M557 275.5h2M559 274.5h2M561 273.5h2M563 272.5h3M566 271.5h2M568 270.5h1M569 270.5h2M571 269.5h2M573 268.5h2M575 267.5h2M577 266.5h2M579 265.5h2M581 264.5h2M583 263.5h2M585 262.5h2M587 261.5h2M589 260.5h2M591 259.5h2M593 258.5h2M595 257.5h2M597 256.5h2M599 255.5h2M601 254.5h2M603 253.5h2M605 252.5h2M607 251.5h2M609 250.5h2M611 249.5h2M613 248.5h2M615 247.5h2M617 246.5h2M619 245.5h3M622 244.5h2M624 243.5h1M625 243.5h2M627 242.5h3M630 241.5h2M632 240.5h1M633 240.5h2M635 239.5h2M637 238.5h2M639 237.5h2M641 236.5h2M643 235.5h2M645 234.5h2M647 233.5h2M649 232.5h2M651 231.5h2M653 230.5h2M655 229.5h2M657 228.5h2M659 227.5h3M662 226.5h2M664 225.5h1M665 225.5h1M666 224.5h2M668 223.5h2M670 222.5h1M671 221.5h2M673 220.5h2M675 219.5h3M678 218.5h2M680 217.5h1M681 217.5h2M683 216.5h2M685 215.5h2M687 214.5h2M689 213.5h1M690 212.5h2M692 211.5h2M694 210.5h1M695 209.5h2M697 208.5h2M699 207.5h2M701 206.5h2M703 205.5h2M705 204.5h2M707 203.5h2M709 202.5h2M711 201.5h2M713 200.5h2M715 199.5h3M718 198.5h2M720 197.5h1M721 197.5h3M724 196.5h4M728 195.5h1M729 195.5h3M732 194.5h4M736 193.5h1M737 193.5h2M739 192.5h3M742 191.5h2M744 190.5h1M745 190.5h3M748 189.5h4M752 188.5h1M753 188.5h3M756 187.5h4M760 186.5h1M761 186.5h3M764 185.5h4M768 184.5h1M769 184.5h2M771 183.5h3M774 182.5h2M776 181.5h1M777 181.5h3M780 180.5h4M784 179.5h1M785 179.5h3M788 178.5h4M792 177.5h1M793 177.5h5M798 176.5h3M801 176.5h2M803 175.5h3M806 174.5h2M808 173.5h1M809 173.5h2M811 172.5h3M814 171.5h2M816 170.5h1M817 170.5h3M820 169.5h4M824 168.5h1M825 168.5h2M827 167.5h3M830 166.5h2M832 165.5h1M833 165.5h2M835 164.5h2M837 163.5h2M839 162.5h2M841 161.5h1M842 160.5h2M844 159.5h2M846 158.5h1M847 157.5h2M849 156.5h1M850 155.5h2M852 154.5h2M854 153.5h1M855 152.5h2M857 151.5h2M859 150.5h2M861 149.5h2M863 148.5h2M865 147.5h2M867 146.5h3M870 145.5h2M872 144.5h1M873 144.5h1M874 143.5h2M876 142.5h2M878 141.5h1M879 140.5h2M881 139.5h1M882 138.5h2M884 137.5h2M886 136.5h1M887 135.5h2M889 134.5h1M890 133.5h2M892 132.5h2M894 131.5h1M895 130.5h2M897 129.5h2M899 128.5h2M901 127.5h2M903 126.5h2M905 125.5h2M907 124.5h2M909 123.5h2M911 122.5h2M913 121.5h2M915 120.5h2M917 119.5h2M919 118.5h2M921 117.5h2M923 116.5h2M925 115.5h2M927 114.5h2M929 113.5h1M930 112.5h2M932 111.5h2M934 110.5h1M935 109.5h2M937 108.5h2M939 107.5h2M941 106.5h2M943 105.5h2M945 104.5h1" stroke="#0000ff"/><path d="M121 279.5h5M126 280.5h4M145 279.5h5M150 280.5h3M153 280.5h3M156 281.5h4M160 282.5h1M161 282.5h3M164 283.5h4M168 284.5h1M169 284.5h5M174 285.5h3M177 285.5h5M182 286.5h3M185 286.5h3M188 287.5h4M192 288.5h1M193 288.5h5M198 289.5h3M201 289.5h3M204 290.5h4M208 291.5h1M209 291.5h3M212 292.5h4M216 293.5h1M217 293.5h5M222 294.5h3M225 294.5h3M228 295.5h4M232 296.5h1M233 296.5h3M236 297.5h4M240 298.5h1M241 298.5h3M244 299.5h4M248 300.5h1M249 300.5h3M252 301.5h4M256 302.5h1M257 302.5h2M259 303.5h3M262 304.5h2M264 305.5h1M265 305.5h3M268 306.5h4M272 307.5h1M273 307.5h2M275 308.5h2M277 309.5h2M279 310.5h2M281 311.5h2M283 312.5h3M286 313.5h2M288 314.5h1M289 314.5h2M291 315.5h3M294 316.5h2M296 317.5h1M297 317.5h3M300 318.5h4M304 319.5h1M305 319.5h3M308 320.5h4M312 321.5h1M313 321.5h8M321 321.5h5M326 322.5h4" stroke="#c84040"/><path d="M1 302.5h3M4 301.5h4M8 300.5h1M9 300.5h3M12 299.5h4M16 298.5h1M17 298.5h5M22 297.5h3M25 297.5h5M30 296.5h3M33 296.5h3M36 295.5h4M40 294.5h1M41 294.5h2M43 293.5h3M46 292.5h2M48 291.5h1M49 291.5h3M52 290.5h4M56 289.5h1M57 289.5h3M60 288.5h4M64 287.5h1M65 287.5h5M70 286.5h3M73 286.5h5M78 285.5h3M81 285.5h5M86 284.5h3M89 284.5h5M94 283.5h3M97 283.5h5M102 282.5h3M105 282.5h8M113 282.5h5M118 281.5h3M121 281.5h8M129 281.5h5M134 280.5h3M137 280.5h9M329 319.5h5M334 318.5h3M337 318.5h5M342 317.5h3M345 317.5h8M353 317.5h5M358 316.5h3M361 316.5h8M369 316.5h5M374 315.5h3M377 315.5h5M382 314.5h3M385 314.5h5M390 313.5h3M393 313.5h3M396 312.5h4M400 311.5h1M401 311.5h5M406 310.5h3M409 310.5h5M414 309.5h3M417 309.5h8M425 309.5h5M430 308.5h3M433 308.5h8M441 308.5h8M449 308.5h8M457 308.5h5M462 307.5h3M465 307.5h8M473 307.5h3M476 306.5h4M480 305.5h1M481 305.5h3M484 304.5h4M488 303.5h1M489 303.5h3M492 302.5h4M496 301.5h1M497 301.5h3M500 300.5h4M504 299.5h1M505 299.5h3M508 298.5h4M512 297.5h1M513 297.5h2M515 296.5h3M518 295.5h2M520 294.5h1M521 294.5h2M523 293.5h2M525 292.5h2M527 291.5h2M529 290.5h2M531 289.5h2M533 288.5h2M535 287.5h2M537 286.5h2M539 285.5h2M541 284.5h2M543 283.5h2M545 282.5h2M547 281.5h3M550 280.5h2M552 279.5h1M553 279.5h2M555 278.5h3M558 277.5h2M560 276.5h1M561 276.5h2M563 275.5h3M566 274.5h2M568 273.5h1M569 273.5h2M571 272.5h2M573 271.5h2M575 270.5h2M577 269.5h2M579 268.5h2M581 267.5h2M583 266.5h2M585 265.5h2M587 264.5h2M589 263.5h2M591 262.5h2M593 261.5h2M595 260.5h2M597 259.5h2M599 258.5h2M601 257.5h2M603 256.5h2M605 255.5h2M607 254.5h2M609 253.5h2M611 252.5h2M613 251.5h2M615 250.5h2M617 249.5h2M619 248.5h3M622 247.5h2M624 246.5h1M625 246.5h2M627 245.5h3M630 244.5h2M632 243.5h1M633 243.5h2M635 242.5h3M638 241.5h2M640 240.5h1M641 240.5h1M642 239.5h2M644 238.5h2M646 237.5h1M647 236.5h2M649 235.5h2M651 234.5h3M654 233.5h2M656 232.5h1M657 232.5h2M659 231.5h2M661 230.5h2M663 229.5h2M665 228.5h2M667 227.5h2M669 226.5h2M671 225.5h2M673 224.5h2M675 223.5h2M677 222.5h2M679 221.5h2M681 220.5h2M683 219.5h3M686 218.5h2M688 217.5h1M689 217.5h1M690 216.5h2M692 215.5h2M694 214.5h1M695 213.5h2M697 212.5h2M699 211.5h2M701 210.5h2M703 209.5h2M705 208.5h2M707 207.5h2M709 206.5h2M711 205.5h2M713 204.5h2M715 203.5h3M718 202.5h2M720 201.5h1M721 201.5h3M724 200.5h4M728 199.5h1M729 199.5h3M732 198.5h4M736 197.5h1M737 197.5h2M739 196.5h3M742 195.5h2M744 194.5h1M745 194.5h3M748 193.5h4M752 192.5h1M753 192.5h3M756 191.5h4M760 190.5h1M761 190.5h2M763 189.5h3M766 188.5h2M768 187.5h1M769 187.5h2M771 186.5h3M774 185.5h2M776 184.5h1M777 184.5h3M780 183.5h4M784 182.5h1M785 182.5h3M788 181.5h4M792 180.5h1M793 180.5h3M796 179.5h4M800 178.5h1M801 178.5h3M804 177.5h4M808 176.5h1M809 176.5h2M811 175.5h3M814 174.5h2M816 173.5h1M817 173.5h2M819 172.5h3M822 171.5h2M824 170.5h1M825 170.5h2M827 169.5h3M830 168.5h2M832 167.5h1M833 167.5h2M835 166.5h2M837 165.5h2M839 164.5h2M841 163.5h1M842 162.5h2M844 161.5h2M846 160.5h1M847 159.5h2M849 158.5h2M851 157.5h2M853 156.5h2M855 155.5h2M857 154.5h2M859 153.5h2M861 152.5h2M863 151.5h2M865 150.5h2M867 149.5h3M870 148.5h2M872 147.5h1M873 147.5h1M874 146.5h2M876 145.5h2M878 144.5h1M879 143.5h2M881 142.5h1M882 141.5h2M884 140.5h2M886 139.5h1M887 138.5h2M889 137.5h1M890 136.5h2M892 135.5h2M894 134.5h1M895 133.5h2M897 132.5h2M899 131.5h2M901 130.5h2M903 129.5h2M905 128.5h2M907 127.5h2M909 126.5h2M911 125.5h2M913 124.5h2M915 123.5h3M918 122.5h2M920 121.5h1M921 121.5h2M923 120.5h2M925 119.5h2M927 118.5h2M929 117.5h1M930 116.5h2M932 115.5h2M934 114.5h1M935 113.5h2M937 112.5h2M939 111.5h2M941 110.5h2M943 109.5h2M945 108.5h1" stroke="#0000ff"/><path d="M145 280.5h5M150 281.5h3M153 281.5h5M158 282.5h3M161 282.5h3M164 283.5h4M168 284.5h1M169 284.5h5M174 285.5h3M177 285.5h5M182 286.5h3M185 286.5h3M188 287.5h4M192 288.5h1M193 288.5h5M198 289.5h3M201 289.5h5M206 290.5h3M209 290.5h3M212 291.5h4M216 292.5h1M217 292.5h3M220 293.5h4M224 294.5h1M225 294.5h5M230 295.5h3M233 295.5h3M236 296.5h4M240 297.5h1M241 297.5h3M244 298.5h4M248 299.5h1M249 299.5h3M252 300.5h4M256 301.5h1M257 301.5h3M260 302.5h4M264 303.5h1M265 303.5h2M267 304.5h3M270 305.5h2M272 306.5h1M273 306.5h2M275 307.5h3M278 308.5h2M280 309.5h1M281 309.5h2M283 310.5h3M286 311.5h2M288 312.5h1M289 312.5h3M292 313.5h4M296 314.5h1M297 314.5h2M299 315.5h3M302 316.5h2M304 317.5h1M305 317.5h5M310 318.5h3M313 318.5h8M321 318.5h5M326 319.5h4" stroke="#c44040"/><path d="M1 303.5h5M6 302.5h3M9 302.5h3M12 301.5h4M16 300.5h1M17 300.5h5M22 299.5h3M25 299.5h5M30 298.5h3M33 298.5h3M36 297.5h4M40 296.5h1M41 296.5h2M43 295.5h3M46 294.5h2M48 293.5h1M49 293.5h3M52 292.5h4M56 291.5h1M57 291.5h3M60 290.5h4M64 289.5h1M65 289.5h5M70 288.5h3M73 288.5h5M78 287.5h3M81 287.5h5M86 286.5h3M89 286.5h5M94 285.5h3M97 285.5h5M102 284.5h3M105 284.5h5M110 283.5h3M113 283.5h5M118 282.5h3M121 282.5h8M129 282.5h5M134 281.5h3M137 281.5h9M329 317.5h5M334 316.5h3M337 316.5h8M345 316.5h8M353 316.5h5M358 315.5h3M361 315.5h5M366 314.5h3M369 314.5h8M377 314.5h5M382 313.5h3M385 313.5h5M390 312.5h3M393 312.5h5M398 311.5h3M401 311.5h5M406 310.5h3M409 310.5h5M414 309.5h3M417 309.5h5M422 308.5h4M441 309.5h5M446 308.5h4M457 308.5h8M465 308.5h5M470 307.5h3M473 307.5h5M478 306.5h3M481 306.5h3M484 305.5h4M488 304.5h1M489 304.5h3M492 303.5h4M496 302.5h1M497 302.5h3M500 301.5h4M504 300.5h1M505 300.5h3M508 299.5h4M512 298.5h1M513 298.5h2M515 297.5h3M518 296.5h2M520 295.5h1M521 295.5h2M523 294.5h3M526 293.5h2M528 292.5h1M529 292.5h2M531 291.5h2M533 290.5h2M535 289.5h2M537 288.5h2M539 287.5h2M541 286.5h2M543 285.5h2M545 284.5h3M548 283.5h4M552 282.5h1M553 282.5h2M555 281.5h2M557 280.5h2M559 279.5h2M561 278.5h3M564 277.5h4M568 276.5h1M569 276.5h2M571 275.5h2M573 274.5h2M575 273.5h2M577 272.5h2M579 271.5h2M581 270.5h2M583 269.5h2M585 268.5h2M587 267.5h2M589 266.5h2M591 265.5h2M593 264.5h2M595 263.5h2M597 262.5h2M599 261.5h2M601 260.5h2M603 259.5h2M605 258.5h2M607 257.5h2M609 256.5h2M611 255.5h2M613 254.5h2M615 253.5h2M617 252.5h2M619 251.5h3M622 250.5h2M624 249.5h1M625 249.5h2M627 248.5h3M630 247.5h2M632 246.5h1M633 246.5h2M635 245.5h3M638 244.5h2M640 243.5h1M641 243.5h1M642 242.5h2M644 241.5h2M646 240.5h1M647 239.5h2M649 238.5h2M651 237.5h3M654 236.5h2M656 235.5h1M657 235.5h2M659 234.5h3M662 233.5h2M664 232.5h1M665 232.5h1M666 231.5h2M668 230.5h2M670 229.5h1M671 228.5h2M673 227.5h2M675 226.5h3M678 225.5h2M680 224.5h1M681 224.5h2M683 223.5h2M685 222.5h2M687 221.5h2M689 220.5h2M691 219.5h2M693 218.5h2M695 217.5h2M697 216.5h2M699 215.5h2M701 214.5h2M703 213.5h2M705 212.5h2M707 211.5h2M709 210.5h2M711 209.5h2M713 208.5h2M715 207.5h3M718 206.5h2M720 205.5h1M721 205.5h3M724 204.5h4M728 203.5h1M729 203.5h3M732 202.5h4M736 201.5h1M737 201.5h2M739 200.5h3M742 199.5h2M744 198.5h1M745 198.5h3M748 197.5h4M752 196.5h1M753 196.5h3M756 195.5h4M760 194.5h1M761 194.5h2M763 193.5h3M766 192.5h2M768 191.5h1M769 191.5h2M771 190.5h3M774 189.5h2M776 188.5h1M777 188.5h3M780 187.5h4M784 186.5h1M785 186.5h3M788 185.5h4M792 184.5h1M793 184.5h2M795 183.5h3M798 182.5h2M800 181.5h1M801 181.5h3M804 180.5h4M808 179.5h1M809 179.5h2M811 178.5h3M814 177.5h2M816 176.5h1M817 176.5h2M819 175.5h3M822 174.5h2M824 173.5h1M825 173.5h2M827 172.5h3M830 171.5h2M832 170.5h1M833 170.5h2M835 169.5h2M837 168.5h2M839 167.5h2M841 166.5h1M842 165.5h2M844 164.5h2M846 163.5h1M847 162.5h2M849 161.5h2M851 160.5h2M853 159.5h2M855 158.5h2M857 157.5h2M859 156.5h2M861 155.5h2M863 154.5h2M865 153.5h2M867 152.5h2M869 151.5h2M871 150.5h2M873 149.5h2M875 148.5h2M877 147.5h2M879 146.5h2M881 145.5h1M882 144.5h2M884 143.5h2M886 142.5h1M887 141.5h2M889 140.5h2M891 139.5h2M893 138.5h2M895 137.5h2M897 136.5h1M898 135.5h2M900 134.5h2M902 133.5h1M903 132.5h2M905 131.5h2M907 130.5h3M910 129.5h2M912 128.5h1M913 128.5h2M915 127.5h2M917 126.5h2M919 125.5h2M921 124.5h2M923 123.5h2M925 122.5h2M927 121.5h2M929 120.5h2M931 119.5h2M933 118.5h2M935 117.5h2M937 116.5h1M938 115.5h2M940 114.5h2M942 113.5h1M943 112.5h2M945 111.5h1" stroke="#0000ff"/><path d="M145 281.5h5M150 282.5h3M153 282.5h5M158 283.5h3M161 283.5h3M164 284.5h4M168 285.5h1M169 285.5h5M174 286.5h3M177 286.5h8M185 286.5h3M188 287.5h4M192 288.5h1M193 288.5h5M198 289.5h3M201 289.5h5M206 290.5h3M209 290.5h3M212 291.5h4M216 292.5h1M217 292.5h5M222 293.5h3M225 293.5h5M230 294.5h3M233 294.5h3M236 295.5h4M240 296.5h1M241 296.5h3M244 297.5h4M248 298.5h1M249 298.5h3M252 299.5h4M256 300.5h1M257 300.5h3M260 301.5h4M264 302.5h1M265 302.5h3M268 303.5h4M272 304.5h1M273 304.5h2M275 305.5h3M278 306.5h2M280 307.5h1M281 307.5h2M283 308.5h3M286 309.5h2M288 310.5h1M289 310.5h2M291 311.5h3M294 312.5h2M296 313.5h1M297 313.5h3M300 314.5h4M304 315.5h1M305 315.5h5M310 316.5h3M313 316.5h8M321 316.5h5M326 317.5h4M425 308.5h8M433 308.5h5M438 309.5h4M449 308.5h9" stroke="#c44438"/><path d="M1 305.5h5M6 304.5h3M9 304.5h3M12 303.5h4M16 302.5h1M17 302.5h3M20 301.5h4M24 300.5h1M25 300.5h5M30 299.5h3M33 299.5h5M38 298.5h3M41 298.5h2M43 297.5h3M46 296.5h2M48 295.5h1M49 295.5h3M52 294.5h4M56 293.5h1M57 293.5h3M60 292.5h4M64 291.5h1M65 291.5h3M68 290.5h4M72 289.5h1M73 289.5h5M78 288.5h3M81 288.5h8M89 288.5h3M92 287.5h4M96 286.5h1M97 286.5h5M102 285.5h3M105 285.5h8M113 285.5h5M118 284.5h3M121 284.5h8M129 284.5h5M134 283.5h3M137 283.5h5M142 282.5h4M329 316.5h3M332 315.5h4M336 314.5h1M337 314.5h9M353 314.5h5M358 313.5h3M361 313.5h8M369 313.5h5M374 312.5h3M377 312.5h8M385 312.5h5M390 311.5h3M393 311.5h5M398 310.5h3M401 310.5h5M406 309.5h3M409 309.5h5M414 308.5h3M417 308.5h9M441 308.5h9M457 308.5h8M465 308.5h5M470 307.5h3M473 307.5h5M478 306.5h3M481 306.5h5M486 305.5h3M489 305.5h3M492 304.5h4M496 303.5h1M497 303.5h3M500 302.5h4M504 301.5h1M505 301.5h3M508 300.5h4M512 299.5h1M513 299.5h3M516 298.5h4M520 297.5h1M521 297.5h2M523 296.5h2M525 295.5h2M527 294.5h2M529 293.5h2M531 292.5h3M534 291.5h2M536 290.5h1M537 290.5h2M539 289.5h2M541 288.5h2M543 287.5h2M545 286.5h3M548 285.5h4M552 284.5h1M553 284.5h2M555 283.5h3M558 282.5h2M560 281.5h1M561 281.5h2M563 280.5h3M566 279.5h2M568 278.5h1M569 278.5h2M571 277.5h2M573 276.5h2M575 275.5h2M577 274.5h2M579 273.5h3M582 272.5h2M584 271.5h1M585 271.5h2M587 270.5h2M589 269.5h2M591 268.5h2M593 267.5h2M595 266.5h2M597 265.5h2M599 264.5h2M601 263.5h2M603 262.5h2M605 261.5h2M607 260.5h2M609 259.5h2M611 258.5h3M614 257.5h2M616 256.5h1M617 256.5h2M619 255.5h3M622 254.5h2M624 253.5h1M625 253.5h2M627 252.5h3M630 251.5h2M632 250.5h1M633 250.5h2M635 249.5h2M637 248.5h2M639 247.5h2M641 246.5h2M643 245.5h2M645 244.5h2M647 243.5h2M649 242.5h2M651 241.5h2M653 240.5h2M655 239.5h2M657 238.5h2M659 237.5h3M662 236.5h2M664 235.5h1M665 235.5h2M667 234.5h2M669 233.5h2M671 232.5h2M673 231.5h2M675 230.5h2M677 229.5h2M679 228.5h2M681 227.5h2M683 226.5h2M685 225.5h2M687 224.5h2M689 223.5h2M691 222.5h3M694 221.5h2M696 220.5h1M697 220.5h1M698 219.5h2M700 218.5h2M702 217.5h1M703 216.5h2M705 215.5h2M707 214.5h2M709 213.5h2M711 212.5h2M713 211.5h2M715 210.5h3M718 209.5h2M720 208.5h1M721 208.5h3M724 207.5h4M728 206.5h1M729 206.5h3M732 205.5h4M736 204.5h1M737 204.5h3M740 203.5h4M744 202.5h1M745 202.5h3M748 201.5h4M752 200.5h1M753 200.5h2M755 199.5h3M758 198.5h2M760 197.5h1M761 197.5h3M764 196.5h4M768 195.5h1M769 195.5h2M771 194.5h2M773 193.5h2M775 192.5h2M777 191.5h3M780 190.5h4M784 189.5h1M785 189.5h3M788 188.5h4M792 187.5h1M793 187.5h3M796 186.5h4M800 185.5h1M801 185.5h2M803 184.5h3M806 183.5h2M808 182.5h1M809 182.5h2M811 181.5h3M814 180.5h2M816 179.5h1M817 179.5h2M819 178.5h3M822 177.5h2M824 176.5h1M825 176.5h2M827 175.5h3M830 174.5h2M832 173.5h1M833 173.5h2M835 172.5h2M837 171.5h2M839 170.5h2M841 169.5h1M842 168.5h2M844 167.5h2M846 166.5h1M847 165.5h2M849 164.5h2M851 163.5h2M853 162.5h2M855 161.5h2M857 160.5h2M859 159.5h2M861 158.5h2M863 157.5h2M865 156.5h2M867 155.5h2M869 154.5h2M871 153.5h2M873 152.5h2M875 151.5h2M877 150.5h2M879 149.5h2M881 148.5h2M883 147.5h2M885 146.5h2M887 145.5h2M889 144.5h1M890 143.5h2M892 142.5h2M894 141.5h1M895 140.5h2M897 139.5h2M899 138.5h2M901 137.5h2M903 136.5h2M905 135.5h2M907 134.5h2M909 133.5h2M911 132.5h2M913 131.5h2M915 130.5h2M917 129.5h2M919 128.5h2M921 127.5h2M923 126.5h3M926 125.5h2M928 124.5h1M929 124.5h1M930 123.5h2M932 122.5h2M934 121.5h1M935 120.5h2M937 119.5h2M939 118.5h2M941 117.5h2M943 116.5h2M945 115.5h1" stroke="#0000ff"/><path d="M145 282.5h5M150 283.5h3M153 283.5h5M158 284.5h3M161 284.5h5M166 285.5h3M169 285.5h5M174 286.5h3M177 286.5h5M182 287.5h3M185 287.5h5M190 288.5h3M193 288.5h5M198 289.5h3M201 289.5h5M206 290.5h3M209 290.5h5M214 291.5h3M217 291.5h5M222 292.5h3M225 292.5h3M228 293.5h4M232 294.5h1M233 294.5h5M238 295.5h3M241 295.5h3M244 296.5h4M248 297.5h1M249 297.5h3M252 298.5h4M256 299.5h1M257 299.5h3M260 300.5h4M264 301.5h1M265 301.5h3M268 302.5h4M272 303.5h1M273 303.5h2M275 304.5h3M278 305.5h2M280 306.5h1M281 306.5h2M283 307.5h3M286 308.5h2M288 309.5h1M289 309.5h3M292 310.5h4M296 311.5h1M297 311.5h3M300 312.5h4M304 313.5h1M305 313.5h5M310 314.5h3M313 314.5h5M318 315.5h3M321 315.5h5M326 316.5h4M345 314.5h9M425 308.5h8M433 308.5h9M449 308.5h9" stroke="#c84838"/></g>
<g fill="none" stroke-width="1" clip-path="url(#cpDashDot)"><path d="M1 306.5h5M6 305.5h3M9 305.5h3M12 304.5h4M16 303.5h1M17 303.5h5M22 302.5h3M25 302.5h5M30 301.5h3M33 301.5h3M36 300.5h4M40 299.5h1M41 299.5h3M44 298.5h4M48 297.5h1M49 297.5h2M51 296.5h3M54 295.5h2M56 294.5h1M57 294.5h5M62 293.5h3M65 293.5h3M68 292.5h4M72 291.5h1M73 291.5h5M78 290.5h3M81 290.5h5M86 289.5h3M89 289.5h5M94 288.5h3M97 288.5h5M102 287.5h3M105 287.5h8M113 287.5h5M118 286.5h3M121 286.5h5M126 285.5h3M129 285.5h5M134 284.5h3M137 284.5h9M329 314.5h5M334 313.5h3M337 313.5h9M353 313.5h5M358 312.5h3M361 312.5h8M369 312.5h5M374 311.5h3M377 311.5h8M385 311.5h5M390 310.5h3M393 310.5h5M398 309.5h3M401 309.5h5M406 308.5h3M409 308.5h8M417 308.5h5M422 307.5h4M441 308.5h9M457 308.5h8M465 308.5h5M470 307.5h3M473 307.5h5M478 306.5h3M481 306.5h5M486 305.5h3M489 305.5h3M492 304.5h4M496 303.5h1M497 303.5h5M502 302.5h3M505 302.5h3M508 301.5h4M512 300.5h1M513 300.5h3M516 299.5h4M520 298.5h1M521 298.5h2M523 297.5h3M526 296.5h2M528 295.5h1M529 295.5h2M531 294.5h2M533 293.5h2M535 292.5h2M537 291.5h2M539 290.5h3M542 289.5h2M544 288.5h1M545 288.5h3M548 287.5h4M552 286.5h1M553 286.5h2M555 285.5h3M558 284.5h2M560 283.5h1M561 283.5h2M563 282.5h3M566 281.5h2M568 280.5h1M569 280.5h2M571 279.5h3M574 278.5h2M576 277.5h1M577 277.5h2M579 276.5h3M582 275.5h2M584 274.5h1M585 274.5h2M587 273.5h2M589 272.5h2M591 271.5h2M593 270.5h2M595 269.5h2M597 268.5h2M599 267.5h2M601 266.5h2M603 265.5h2M605 264.5h2M607 263.5h2M609 262.5h2M611 261.5h3M614 260.5h2M616 259.5h1M617 259.5h2M619 258.5h3M622 257.5h2M624 256.5h1M625 256.5h2M627 255.5h3M630 254.5h2M632 253.5h1M633 253.5h2M635 252.5h2M637 251.5h2M639 250.5h2M641 249.5h2M643 248.5h2M645 247.5h2M647 246.5h2M649 245.5h2M651 244.5h2M653 243.5h2M655 242.5h2M657 241.5h2M659 240.5h3M662 239.5h2M664 238.5h1M665 238.5h2M667 237.5h2M669 236.5h2M671 235.5h2M673 234.5h2M675 233.5h3M678 232.5h2M680 231.5h1M681 231.5h2M683 230.5h2M685 229.5h2M687 228.5h2M689 227.5h2M691 226.5h2M693 225.5h2M695 224.5h2M697 223.5h2M699 222.5h2M701 221.5h2M703 220.5h2M705 219.5h2M707 218.5h2M709 217.5h2M711 216.5h2M713 215.5h2M715 214.5h3M718 213.5h2M720 212.5h1M721 212.5h3M724 211.5h4M728 210.5h1M729 210.5h3M732 209.5h4M736 208.5h1M737 208.5h2M739 207.5h3M742 206.5h2M744 205.5h1M745 205.5h3M748 204.5h4M752 203.5h1M753 203.5h3M756 202.5h4M760 201.5h1M761 201.5h2M763 200.5h3M766 199.5h2M768 198.5h1M769 198.5h2M771 197.5h3M774 196.5h2M776 195.5h1M777 195.5h3M780 194.5h4M784 193.5h1M785 193.5h2M787 192.5h3M790 191.5h2M792 190.5h1M793 190.5h3M796 189.5h4M800 188.5h1M801 188.5h2M803 187.5h3M806 186.5h2M808 185.5h1M809 185.5h2M811 184.5h3M814 183.5h2M816 182.5h1M817 182.5h2M819 181.5h3M822 180.5h2M824 179.5h1M825 179.5h2M827 178.5h3M830 177.5h2M832 176.5h1M833 176.5h2M835 175.5h2M837 174.5h2M839 173.5h2M841 172.5h1M842 171.5h2M844 170.5h2M846 169.5h1M847 168.5h2M849 167.5h2M851 166.5h2M853 165.5h2M855 164.5h2M857 163.5h2M859 162.5h2M861 161.5h2M863 160.5h2M865 159.5h2M867 158.5h2M869 157.5h2M871 156.5h2M873 155.5h2M875 154.5h2M877 153.5h2M879 152.5h2M881 151.5h2M883 150.5h2M885 149.5h2M887 148.5h2M889 147.5h1M890 146.5h2M892 145.5h2M894 144.5h1M895 143.5h2M897 142.5h2M899 141.5h2M901 140.5h2M903 139.5h2M905 138.5h2M907 137.5h2M909 136.5h2M911 135.5h2M913 134.5h2M915 133.5h3M918 132.5h2M920 131.5h1M921 131.5h2M923 130.5h2M925 129.5h2M927 128.5h2M929 127.5h2M931 126.5h2M933 125.5h2M935 124.5h2M937 123.5h1M938 122.5h2M940 121.5h2M942 120.5h1M943 119.5h2M945 118.5h1" stroke="#1e90ff"/><path d="M145 284.5h8M153 284.5h5M158 285.5h3M161 285.5h5M166 286.5h3M169 286.5h5M174 287.5h3M177 287.5h5M182 288.5h3M185 288.5h8M193 288.5h5M198 289.5h3M201 289.5h5M206 290.5h3M209 290.5h5M214 291.5h3M217 291.5h5M222 292.5h3M225 292.5h5M230 293.5h3M233 293.5h3M236 294.5h4M240 295.5h1M241 295.5h5M246 296.5h3M249 296.5h3M252 297.5h4M256 298.5h1M257 298.5h3M260 299.5h4M264 300.5h1M265 300.5h3M268 301.5h4M272 302.5h1M273 302.5h2M275 303.5h3M278 304.5h2M280 305.5h1M281 305.5h3M284 306.5h4M288 307.5h1M289 307.5h3M292 308.5h4M296 309.5h1M297 309.5h3M300 310.5h4M304 311.5h1M305 311.5h3M308 312.5h4M312 313.5h1M313 313.5h8M321 313.5h5M326 314.5h4M345 313.5h9M425 307.5h5M430 308.5h3M433 308.5h9M449 308.5h9" stroke="#d2502e"/></g>
<g fill="none" stroke-width="1" clip-path="url(#cpMain)"><path d="M1 289.5h5M6 290.5h4M17 286.5h9M65 258.5h5M70 259.5h3M73 259.5h1M74 260.5h1M75 261.5h1M76 262.5h2M78 263.5h1M79 264.5h1M80 265.5h1M81 266.5h1M82 267.5h1M83 268.5h1M84 269.5h1M85 270.5h1M86 271.5h1M87 272.5h1M88 273.5h1M89 274.5h3M92 275.5h4M96 276.5h1M97 276.5h5M102 277.5h3M105 277.5h2M107 278.5h3M110 279.5h2M112 280.5h2M121 278.5h2M123 279.5h2M125 280.5h2M127 281.5h2M129 282.5h1M145 279.5h1M146 280.5h1M147 281.5h1M148 282.5h1M149 283.5h1M150 284.5h1M151 285.5h1M152 286.5h1M153.5 287v1M154.5 288v1M155.5 289v2M156.5 291v1M157.5 292v1M158.5 293v1M159.5 294v2M160.5 296v1M161.5 297v1M162.5 298v2M163.5 300v1M164.5 301v1M165.5 302v2M166.5 304v1M167.5 305v1M168.5 306v2M169 308.5h1M170 309.5h1M171 310.5h1M172 311.5h1M173 312.5h1M174 313.5h1M175 314.5h1M176 315.5h1M177 316.5h5M182 317.5h4M201 312.5h5M206 313.5h3M209 313.5h2M211 314.5h3M214 315.5h2M216 316.5h1M217 316.5h3M220 317.5h4M224 318.5h2M233 318.5h1M234 319.5h2M236 320.5h2M238 321.5h1M239 322.5h2M241 323.5h3M244 324.5h4M248 325.5h1M249 325.5h3M252 326.5h4M256 327.5h1M257 327.5h1M258 328.5h1M259 329.5h1M260 330.5h1M261 331.5h1M262 332.5h1M263 333.5h1M264 334.5h1M265 335.5h3M268 336.5h4M272 337.5h1M273.5 337v1M274.5 338v1M275.5 339v1M276.5 340v1M277.5 341v2M278.5 343v1M279.5 344v1M280.5 345v1M281 346.5h1M282 347.5h1M283 348.5h1M284 349.5h2M286 350.5h1M287 351.5h1M288 352.5h1M289 353.5h3M292 354.5h4M296 355.5h1M297 355.5h3M300 356.5h4M304 357.5h2M361 289.5h2M363 290.5h2M365 291.5h2M367 292.5h2M369 293.5h1M385 291.5h9M417 281.5h3M420 282.5h4M424 283.5h1M425.5 283v1M426.5 284v2M427.5 286v1M428.5 287v1M429.5 288v2M430.5 290v1M431.5 291v1M432.5 292v2M433 294.5h1M434 295.5h1M435 296.5h1M436 297.5h2M438 298.5h1M439 299.5h1M440 300.5h1M441 301.5h1M449 301.5h1M450 302.5h2M452 303.5h2M454 304.5h1M455 305.5h2M457 306.5h1M553 226.5h8M561 226.5h2M563 227.5h2M565 228.5h2M567 229.5h2M569 230.5h1M617 195.5h3M620 196.5h4M624 197.5h1M625 197.5h1M626 198.5h2M628 199.5h2M630 200.5h1M631 201.5h2M633 202.5h1M673 174.5h9M713 153.5h5M718 154.5h3M721 154.5h1M722 155.5h1M723 156.5h1M724 157.5h1M725 158.5h1M726 159.5h1M727 160.5h1M728 161.5h1M729.5 162v1M730.5 163v1M731.5 164v1M732.5 165v1M733.5 166v2M734.5 168v1M735.5 169v1M736.5 170v1M737 171.5h1M738 172.5h2M740 173.5h1M741 174.5h1M742 175.5h2M744 176.5h1M745 177.5h3M748 178.5h4M752 179.5h2M905 63.5h8M913 63.5h3M916 64.5h4M920 65.5h1M921 65.5h2M923 66.5h3M926 67.5h2M928 68.5h2" stroke="#ff0000"/><path d="M9 290.5h2M11 289.5h2M13 288.5h2M15 287.5h2M17 286.5h1M25 286.5h2M27 285.5h2M29 284.5h2M31 283.5h2M33 282.5h1M34 281.5h2M36 280.5h2M38 279.5h1M39 278.5h2M41 277.5h1M42 276.5h2M44 275.5h2M46 274.5h1M47 273.5h2M49.5 272v1M50.5 271v1M51.5 270v1M52.5 269v1M53.5 267v2M54.5 266v1M55.5 265v1M56.5 264v1M57 263.5h1M58 262.5h2M60 261.5h2M62 260.5h1M63 259.5h2M65 258.5h1M113 280.5h3M116 279.5h4M120 278.5h2M129 282.5h5M134 281.5h3M137 281.5h3M140 280.5h4M144 279.5h2M185 317.5h2M187 316.5h2M189 315.5h2M191 314.5h2M193 313.5h5M198 312.5h4M225 318.5h9M305.5 357v1M306.5 356v1M307.5 355v1M308.5 354v1M309.5 352v2M310.5 351v1M311.5 350v1M312.5 349v1M313.5 348v1M314.5 346v2M315.5 344v2M316.5 343v1M317.5 341v2M318.5 340v1M319.5 338v2M320.5 336v2M321 335.5h1M322 334.5h1M323 333.5h1M324 332.5h2M326 331.5h1M327 330.5h1M328 329.5h1M329.5 327v2M330.5 325v2M331.5 323v2M332.5 320v3M333.5 318v2M334.5 315v3M335.5 313v2M336.5 311v2M337.5 310v1M337.5 309v1M338.5 308v1M339.5 307v1M340.5 306v1M341.5 304v2M342.5 303v1M343.5 302v1M344.5 301v1M345 300.5h3M348 299.5h4M352 298.5h1M353.5 298v1M354.5 297v1M355.5 296v1M356.5 295v1M357.5 293v2M358.5 292v1M359.5 291v1M360.5 290v1M361.5 289v1M369 293.5h5M374 292.5h3M377 292.5h5M382 291.5h4M393 291.5h1M394 290.5h2M396 289.5h1M397 288.5h1M398 287.5h2M400 286.5h1M401 285.5h2M403 284.5h3M406 283.5h2M408 282.5h1M409 282.5h5M414 281.5h4M441 301.5h9M457 306.5h3M460 305.5h4M464 304.5h1M465 304.5h2M467 303.5h3M470 302.5h2M472 301.5h1M473 301.5h2M475 300.5h3M478 299.5h2M480 298.5h1M481.5 298v1M482.5 296v2M483.5 295v1M484.5 294v1M485.5 292v2M486.5 291v1M487.5 290v1M488.5 288v2M489 287.5h1M490 286.5h1M491 285.5h1M492 284.5h1M493 283.5h1M494 282.5h1M495 281.5h1M496 280.5h1M497 279.5h1M498 278.5h1M499 277.5h1M500 276.5h1M501 275.5h1M502 274.5h1M503 273.5h1M504 272.5h1M505 271.5h1M506 270.5h2M508 269.5h1M509 268.5h1M510 267.5h2M512 266.5h1M513 265.5h1M514 264.5h2M516 263.5h2M518 262.5h1M519 261.5h2M521.5 260v1M522.5 258v2M523.5 257v1M524.5 256v1M525.5 254v2M526.5 253v1M527.5 252v1M528.5 250v2M529.5 249v1M530.5 247v2M531.5 246v1M532.5 244v2M533.5 243v1M534.5 241v2M535.5 240v1M536.5 238v2M537 237.5h1M538 236.5h1M539 235.5h1M540 234.5h1M541 233.5h1M542 232.5h1M543 231.5h1M544 230.5h1M545 229.5h2M547 228.5h3M550 227.5h2M552 226.5h2M569 230.5h1M570 229.5h2M572 228.5h2M574 227.5h1M575 226.5h2M577 225.5h2M579 224.5h2M581 223.5h2M583 222.5h2M585 221.5h1M586 220.5h1M587 219.5h1M588 218.5h2M590 217.5h1M591 216.5h1M592 215.5h1M593.5 214v1M594.5 212v2M595.5 211v1M596.5 210v1M597.5 208v2M598.5 207v1M599.5 206v1M600.5 204v2M601 203.5h2M603 202.5h2M605 201.5h2M607 200.5h2M609 199.5h2M611 198.5h2M613 197.5h2M615 196.5h2M617 195.5h1M633 202.5h3M636 201.5h4M640 200.5h1M641 200.5h1M642 199.5h1M643 198.5h1M644 197.5h2M646 196.5h1M647 195.5h1M648 194.5h1M649 193.5h1M650 192.5h1M651 191.5h1M652 190.5h1M653 189.5h1M654 188.5h1M655 187.5h1M656 186.5h1M657 185.5h1M658 184.5h2M660 183.5h2M662 182.5h1M663 181.5h2M665 180.5h1M666 179.5h2M668 178.5h1M669 177.5h1M670 176.5h2M672 175.5h1M673 174.5h1M681 174.5h2M683 173.5h2M685 172.5h2M687 171.5h2M689 170.5h1M690 169.5h1M691 168.5h1M692 167.5h1M693 166.5h1M694 165.5h1M695 164.5h1M696 163.5h1M697 162.5h2M699 161.5h3M702 160.5h2M704 159.5h1M705 159.5h1M706 158.5h2M708 157.5h1M709 156.5h1M710 155.5h2M712 154.5h1M713 153.5h1M753 179.5h2M755 178.5h2M757 177.5h2M759 176.5h2M761 175.5h1M762 174.5h2M764 173.5h2M766 172.5h1M767 171.5h2M769 170.5h1M770 169.5h2M772 168.5h1M773 167.5h1M774 166.5h2M776 165.5h1M777 164.5h3M780 163.5h4M784 162.5h1M785 162.5h2M787 161.5h3M790 160.5h2M792 159.5h1M793 159.5h8M801 159.5h5M806 158.5h3M809.5 158v1M810.5 157v1M811.5 156v1M812.5 155v1M813.5 153v2M814.5 152v1M815.5 151v1M816.5 150v1M817 149.5h1M818 148.5h1M819 147.5h1M820 146.5h2M822 145.5h1M823 144.5h1M824 143.5h1M825 142.5h1M826 141.5h1M827 140.5h1M828 139.5h1M829 138.5h1M830 137.5h1M831 136.5h1M832 135.5h1M833.5 134v1M834.5 132v2M835.5 131v1M836.5 129v2M837.5 128v1M838.5 126v2M839.5 125v1M840.5 123v2M841.5 122v1M842.5 120v2M843.5 119v1M844.5 117v2M845.5 116v1M846.5 114v2M847.5 113v1M848.5 111v2M849.5 110v1M850.5 108v2M851.5 107v1M852.5 106v1M853.5 104v2M854.5 103v1M855.5 102v1M856.5 100v2M857.5 99v1M858.5 98v1M859.5 96v2M860.5 95v1M861.5 94v1M862.5 93v1M863.5 91v2M864.5 90v1M865 89.5h5M870 88.5h3M873 88.5h2M875 87.5h3M878 86.5h2M880 85.5h1M881 85.5h1M882 84.5h2M884 83.5h1M885 82.5h1M886 81.5h2M888 80.5h1M889.5 79v1M890.5 78v1M891.5 77v1M892.5 76v1M893.5 74v2M894.5 73v1M895.5 72v1M896.5 71v1M897 70.5h1M898 69.5h1M899 68.5h1M900 67.5h2M902 66.5h1M903 65.5h1M904 64.5h1M905 63.5h1M929 68.5h1M930 67.5h1M931 66.5h1M932 65.5h2M934 64.5h1M935 63.5h1M936 62.5h1M937 61.5h1M938 60.5h1M939 59.5h1M940 58.5h2M942 57.5h1M943 56.5h1M944 55.5h1M945 54.5h1" stroke="#1e90ff"/><path d="M1 288.5h9M17 286.5h8M25 286.5h9M73 262.5h5M78 263.5h3M81 263.5h1M82 264.5h2M84 265.5h1M85 266.5h1M86 267.5h2M88 268.5h1M89 269.5h2M91 270.5h2M93 271.5h2M95 272.5h2M97 273.5h2M99 274.5h3M102 275.5h2M104 276.5h1M105 276.5h2M107 277.5h3M110 278.5h2M112 279.5h2M121 279.5h5M126 280.5h4M137 280.5h5M142 281.5h3M145 281.5h2M147 282.5h3M150 283.5h2M152 284.5h1M153.5 284v1M154.5 285v1M155.5 286v2M156.5 288v1M157.5 289v1M158.5 290v1M159.5 291v2M160.5 293v1M161 294.5h1M162 295.5h1M163 296.5h1M164 297.5h2M166 298.5h1M167 299.5h1M168 300.5h1M169 301.5h1M170 302.5h2M172 303.5h1M173 304.5h1M174 305.5h2M176 306.5h1M177 307.5h1M178 308.5h2M180 309.5h1M181 310.5h1M182 311.5h2M184 312.5h1M185 313.5h3M188 314.5h4M192 315.5h2M209 313.5h3M212 314.5h4M216 315.5h1M217 315.5h5M222 316.5h3M225 316.5h5M230 317.5h3M233 317.5h2M235 318.5h2M237 319.5h2M239 320.5h2M241 321.5h2M243 322.5h3M246 323.5h2M248 324.5h1M249 324.5h3M252 325.5h4M256 326.5h1M257 326.5h1M258 327.5h2M260 328.5h2M262 329.5h1M263 330.5h2M265 331.5h1M266 332.5h2M268 333.5h2M270 334.5h1M271 335.5h2M273 336.5h1M274 337.5h2M276 338.5h1M277 339.5h1M278 340.5h2M280 341.5h1M281 342.5h1M282 343.5h2M284 344.5h1M285 345.5h1M286 346.5h2M288 347.5h1M289 348.5h2M291 349.5h2M293 350.5h2M295 351.5h2M297 352.5h3M300 353.5h4M304 354.5h2M369 291.5h8M377 291.5h3M380 292.5h4M384 293.5h2M409 284.5h5M414 285.5h4M425 284.5h2M427 285.5h2M429 286.5h2M431 287.5h2M433 288.5h1M434 289.5h1M435 290.5h1M436 291.5h1M437 292.5h1M438 293.5h1M439 294.5h1M440 295.5h1M441 296.5h2M443 297.5h3M446 298.5h2M448 299.5h1M449 299.5h2M451 300.5h2M453 301.5h2M455 302.5h2M457 303.5h5M462 304.5h4M625 198.5h5M630 199.5h4M721 156.5h1M722 157.5h2M724 158.5h2M726 159.5h1M727 160.5h2M729 161.5h2M731 162.5h2M733 163.5h2M735 164.5h2M737 165.5h1M738 166.5h2M740 167.5h2M742 168.5h1M743 169.5h2M745 170.5h1M746 171.5h2M748 172.5h1M749 173.5h1M750 174.5h2M752 175.5h1M753 176.5h5M758 177.5h4M921 65.5h9" stroke="#ff0000"/><path d="M9 288.5h3M12 287.5h4M16 286.5h2M33 286.5h1M34 285.5h2M36 284.5h1M37 283.5h1M38 282.5h2M40 281.5h1M41 280.5h1M42 279.5h1M43 278.5h1M44 277.5h1M45 276.5h1M46 275.5h1M47 274.5h1M48 273.5h1M49 272.5h2M51 271.5h2M53 270.5h2M55 269.5h2M57 268.5h2M59 267.5h2M61 266.5h2M63 265.5h2M65 264.5h3M68 263.5h4M72 262.5h2M113 279.5h9M129 280.5h9M193 315.5h5M198 314.5h3M201 314.5h5M206 313.5h4M305 354.5h2M307 353.5h3M310 352.5h2M312 351.5h1M313.5 351v1M314.5 350v1M315.5 348v2M316.5 347v1M317.5 346v1M318.5 345v1M319.5 343v2M320.5 342v1M321 341.5h1M322 340.5h1M323 339.5h1M324 338.5h1M325 337.5h1M326 336.5h1M327 335.5h1M328 334.5h1M329.5 333v1M330.5 331v2M331.5 329v2M332.5 327v2M333.5 326v1M334.5 324v2M335.5 322v2M336.5 320v2M337.5 319v1M338.5 317v2M339.5 316v1M340.5 315v1M341.5 313v2M342.5 312v1M343.5 311v1M344.5 309v2M345 308.5h1M346 307.5h2M348 306.5h1M349 305.5h1M350 304.5h2M352 303.5h1M353 302.5h1M354 301.5h2M356 300.5h1M357 299.5h1M358 298.5h2M360 297.5h1M361 296.5h1M362 295.5h2M364 294.5h2M366 293.5h1M367 292.5h2M369 291.5h1M385 293.5h2M387 292.5h3M390 291.5h2M392 290.5h1M393 290.5h2M395 289.5h2M397 288.5h2M399 287.5h2M401 286.5h3M404 285.5h4M408 284.5h2M417 285.5h5M422 284.5h4M465 304.5h5M470 303.5h3M473 303.5h1M474 302.5h2M476 301.5h2M478 300.5h1M479 299.5h2M481 298.5h1M482 297.5h2M484 296.5h1M485 295.5h1M486 294.5h2M488 293.5h1M489 292.5h1M490 291.5h1M491 290.5h1M492 289.5h2M494 288.5h1M495 287.5h1M496 286.5h1M497 285.5h1M498 284.5h1M499 283.5h1M500 282.5h1M501 281.5h1M502 280.5h1M503 279.5h1M504 278.5h1M505 277.5h1M506 276.5h1M507 275.5h1M508 274.5h2M510 273.5h1M511 272.5h1M512 271.5h1M513 270.5h1M514 269.5h1M515 268.5h1M516 267.5h1M517 266.5h1M518 265.5h1M519 264.5h1M520 263.5h1M521 262.5h1M522 261.5h1M523 260.5h1M524 259.5h1M525 258.5h1M526 257.5h1M527 256.5h1M528 255.5h1M529.5 254v1M530.5 252v2M531.5 251v1M532.5 250v1M533.5 248v2M534.5 247v1M535.5 246v1M536.5 244v2M537 243.5h1M538 242.5h1M539 241.5h1M540 240.5h2M542 239.5h1M543 238.5h1M544 237.5h1M545 236.5h1M546 235.5h2M548 234.5h2M550 233.5h1M551 232.5h2M553 231.5h2M555 230.5h2M557 229.5h2M559 228.5h2M561 227.5h8M569 227.5h3M572 226.5h4M576 225.5h1M577 225.5h5M582 224.5h3M585 224.5h1M586 223.5h1M587 222.5h1M588 221.5h2M590 220.5h1M591 219.5h1M592 218.5h1M593 217.5h1M594 216.5h1M595 215.5h1M596 214.5h1M597 213.5h1M598 212.5h1M599 211.5h1M600 210.5h1M601 209.5h1M602 208.5h1M603 207.5h1M604 206.5h2M606 205.5h1M607 204.5h1M608 203.5h1M609 202.5h3M612 201.5h4M616 200.5h1M617 200.5h3M620 199.5h4M624 198.5h2M633 199.5h5M638 198.5h3M641 198.5h2M643 197.5h2M645 196.5h2M647 195.5h2M649 194.5h2M651 193.5h2M653 192.5h2M655 191.5h2M657 190.5h2M659 189.5h2M661 188.5h2M663 187.5h2M665.5 186v1M666.5 185v1M667.5 184v1M668.5 183v1M669.5 181v2M670.5 180v1M671.5 179v1M672.5 178v1M673 177.5h2M675 176.5h3M678 175.5h2M680 174.5h1M681 174.5h3M684 173.5h4M688 172.5h1M689 172.5h2M691 171.5h2M693 170.5h2M695 169.5h2M697 168.5h1M698 167.5h1M699 166.5h1M700 165.5h1M701 164.5h1M702 163.5h1M703 162.5h1M704 161.5h1M705 160.5h2M707 159.5h3M710 158.5h2M712 157.5h1M713 157.5h5M718 156.5h4M761 177.5h2M763 176.5h2M765 175.5h2M767 174.5h2M769 173.5h1M770 172.5h1M771 171.5h1M772 170.5h2M774 169.5h1M775 168.5h1M776 167.5h1M777 166.5h5M782 165.5h3M785 165.5h2M787 164.5h3M790 163.5h2M792 162.5h1M793 162.5h2M795 161.5h3M798 160.5h2M800 159.5h1M801 159.5h2M803 158.5h3M806 157.5h2M808 156.5h1M809 156.5h2M811 155.5h3M814 154.5h2M816 153.5h1M817 153.5h1M818 152.5h1M819 151.5h1M820 150.5h2M822 149.5h1M823 148.5h1M824 147.5h1M825 146.5h1M826 145.5h2M828 144.5h1M829 143.5h1M830 142.5h2M832 141.5h1M833.5 140v1M834.5 138v2M835.5 137v1M836.5 135v2M837.5 134v1M838.5 132v2M839.5 131v1M840.5 129v2M841.5 128v1M842.5 126v2M843.5 124v2M844.5 123v1M845.5 121v2M846.5 120v1M847.5 118v2M848.5 116v2M849.5 115v1M850.5 114v1M851.5 113v1M852.5 112v1M853.5 110v2M854.5 109v1M855.5 108v1M856.5 107v1M857 106.5h1M858 105.5h1M859 104.5h1M860 103.5h1M861 102.5h1M862 101.5h1M863 100.5h1M864 99.5h1M865 98.5h1M866 97.5h1M867 96.5h1M868 95.5h2M870 94.5h1M871 93.5h1M872 92.5h1M873 91.5h1M874 90.5h2M876 89.5h1M877 88.5h1M878 87.5h2M880 86.5h1M881 85.5h1M882 84.5h2M884 83.5h2M886 82.5h1M887 81.5h2M889 80.5h1M890 79.5h2M892 78.5h1M893 77.5h1M894 76.5h2M896 75.5h1M897 74.5h2M899 73.5h2M901 72.5h2M903 71.5h2M905 70.5h2M907 69.5h2M909 68.5h2M911 67.5h2M913 66.5h5M918 65.5h4M929 65.5h2M931 64.5h2M933 63.5h2M935 62.5h2M937 61.5h2M939 60.5h3M942 59.5h2M944 58.5h2" stroke="#1e90ff"/><path d="M1 287.5h5M6 288.5h4M17 286.5h8M25 286.5h9M81 265.5h5M86 266.5h3M89 266.5h2M91 267.5h3M94 268.5h2M96 269.5h1M97 269.5h2M99 270.5h2M101 271.5h2M103 272.5h2M105 273.5h2M107 274.5h2M109 275.5h2M111 276.5h2M113 277.5h5M118 278.5h3M121 278.5h3M124 279.5h4M128 280.5h2M137 279.5h5M142 280.5h3M145 280.5h2M147 281.5h2M149 282.5h2M151 283.5h2M153 284.5h1M154 285.5h1M155 286.5h1M156 287.5h2M158 288.5h1M159 289.5h1M160 290.5h1M161 291.5h1M162 292.5h2M164 293.5h1M165 294.5h1M166 295.5h2M168 296.5h1M169 297.5h1M170 298.5h2M172 299.5h2M174 300.5h1M175 301.5h2M177 302.5h1M178 303.5h2M180 304.5h2M182 305.5h1M183 306.5h2M185 307.5h1M186 308.5h2M188 309.5h2M190 310.5h1M191 311.5h2M193 312.5h2M195 313.5h3M198 314.5h2M200 315.5h2M217 315.5h8M225 315.5h5M230 316.5h3M233 316.5h2M235 317.5h2M237 318.5h2M239 319.5h2M241 320.5h3M244 321.5h4M248 322.5h1M249 322.5h3M252 323.5h4M256 324.5h1M257 324.5h1M258 325.5h2M260 326.5h2M262 327.5h1M263 328.5h2M265 329.5h2M267 330.5h3M270 331.5h2M272 332.5h1M273 332.5h1M274 333.5h1M275 334.5h1M276 335.5h1M277 336.5h1M278 337.5h1M279 338.5h1M280 339.5h1M281 340.5h1M282 341.5h2M284 342.5h2M286 343.5h1M287 344.5h2M289 345.5h2M291 346.5h3M294 347.5h2M296 348.5h1M297 348.5h2M299 349.5h3M302 350.5h2M304 351.5h2M377 291.5h5M382 292.5h4M409 285.5h5M414 286.5h3M417 286.5h8M425 286.5h3M428 287.5h4M432 288.5h1M433 288.5h2M435 289.5h3M438 290.5h2M440 291.5h1M441 291.5h2M443 292.5h2M445 293.5h2M447 294.5h2M449 295.5h1M450 296.5h2M452 297.5h2M454 298.5h1M455 299.5h2M457 300.5h3M460 301.5h4M464 302.5h1M465 302.5h5M470 303.5h4M721 158.5h2M723 159.5h2M725 160.5h2M727 161.5h2M729 162.5h3M732 163.5h4M736 164.5h1M737 164.5h3M740 165.5h4M744 166.5h1M745 166.5h2M747 167.5h2M749 168.5h2M751 169.5h2M753 170.5h2M755 171.5h2M757 172.5h2M759 173.5h2M761 174.5h9" stroke="#ff0000"/><path d="M9 288.5h3M12 287.5h4M16 286.5h2M33 286.5h2M35 285.5h3M38 284.5h2M40 283.5h1M41 283.5h1M42 282.5h1M43 281.5h1M44 280.5h2M46 279.5h1M47 278.5h1M48 277.5h1M49 276.5h1M50 275.5h1M51 274.5h1M52 273.5h2M54 272.5h1M55 271.5h1M56 270.5h1M57 269.5h3M60 268.5h4M64 267.5h1M65 267.5h5M70 266.5h3M73 266.5h5M78 265.5h4M129 280.5h5M134 279.5h4M201 315.5h8M209 315.5h9M305 351.5h5M310 350.5h3M313 350.5h1M314 349.5h2M316 348.5h1M317 347.5h1M318 346.5h2M320 345.5h1M321 344.5h1M322 343.5h2M324 342.5h2M326 341.5h1M327 340.5h2M329.5 339v1M330.5 337v2M331.5 335v2M332.5 334v1M333.5 332v2M334.5 331v1M335.5 329v2M336.5 327v2M337.5 326v1M338.5 325v1M339.5 323v2M340.5 322v1M341.5 321v1M342.5 320v1M343.5 318v2M344.5 317v1M345 316.5h1M346 315.5h1M347 314.5h1M348 313.5h1M349 312.5h1M350 311.5h1M351 310.5h1M352 309.5h1M353 308.5h1M354 307.5h1M355 306.5h1M356 305.5h1M357 304.5h1M358 303.5h1M359 302.5h1M360 301.5h1M361 300.5h2M363 299.5h2M365 298.5h2M367 297.5h2M369 296.5h1M370 295.5h2M372 294.5h2M374 293.5h1M375 292.5h2M377 291.5h1M385 292.5h8M393 292.5h1M394 291.5h2M396 290.5h2M398 289.5h1M399 288.5h2M401 287.5h3M404 286.5h4M408 285.5h2M473 303.5h2M475 302.5h3M478 301.5h2M480 300.5h1M481 300.5h1M482 299.5h2M484 298.5h1M485 297.5h1M486 296.5h2M488 295.5h1M489 294.5h1M490 293.5h2M492 292.5h1M493 291.5h1M494 290.5h2M496 289.5h1M497 288.5h1M498 287.5h2M500 286.5h1M501 285.5h1M502 284.5h2M504 283.5h1M505 282.5h1M506 281.5h1M507 280.5h1M508 279.5h2M510 278.5h1M511 277.5h1M512 276.5h1M513 275.5h1M514 274.5h1M515 273.5h1M516 272.5h1M517 271.5h1M518 270.5h1M519 269.5h1M520 268.5h1M521.5 267v1M522.5 266v1M523.5 264v2M524.5 263v1M525.5 262v1M526.5 261v1M527.5 259v2M528.5 258v1M529.5 257v1M530.5 256v1M531.5 255v1M532.5 254v1M533.5 252v2M534.5 251v1M535.5 250v1M536.5 249v1M537 248.5h1M538 247.5h2M540 246.5h1M541 245.5h1M542 244.5h2M544 243.5h1M545 242.5h1M546 241.5h2M548 240.5h2M550 239.5h1M551 238.5h2M553 237.5h1M554 236.5h2M556 235.5h2M558 234.5h1M559 233.5h2M561 232.5h2M563 231.5h2M565 230.5h2M567 229.5h2M569 228.5h2M571 227.5h2M573 226.5h2M575 225.5h2M577 224.5h8M585 224.5h2M587 223.5h2M589 222.5h2M591 221.5h2M593 220.5h1M594 219.5h1M595 218.5h1M596 217.5h2M598 216.5h1M599 215.5h1M600 214.5h1M601 213.5h1M602 212.5h2M604 211.5h1M605 210.5h1M606 209.5h2M608 208.5h1M609 207.5h2M611 206.5h2M613 205.5h2M615 204.5h2M617 203.5h3M620 202.5h4M624 201.5h1M625 201.5h5M630 200.5h3M633 200.5h2M635 199.5h3M638 198.5h2M640 197.5h1M641 197.5h2M643 196.5h2M645 195.5h2M647 194.5h2M649 193.5h3M652 192.5h4M656 191.5h1M657 191.5h5M662 190.5h3M665 190.5h1M666 189.5h1M667 188.5h1M668 187.5h2M670 186.5h1M671 185.5h1M672 184.5h1M673 183.5h1M674 182.5h2M676 181.5h1M677 180.5h1M678 179.5h2M680 178.5h1M681 177.5h2M683 176.5h2M685 175.5h2M687 174.5h2M689 173.5h2M691 172.5h2M693 171.5h2M695 170.5h2M697 169.5h2M699 168.5h2M701 167.5h2M703 166.5h2M705 165.5h1M706 164.5h2M708 163.5h1M709 162.5h1M710 161.5h2M712 160.5h1M713 159.5h5M718 158.5h4M769 174.5h1M770 173.5h2M772 172.5h2M774 171.5h1M775 170.5h2M777 169.5h3M780 168.5h4M784 167.5h1M785 167.5h2M787 166.5h3M790 165.5h2M792 164.5h1M793 164.5h3M796 163.5h4M800 162.5h1M801 162.5h1M802 161.5h2M804 160.5h2M806 159.5h1M807 158.5h2M809 157.5h1M810 156.5h2M812 155.5h2M814 154.5h1M815 153.5h2M817 152.5h2M819 151.5h3M822 150.5h2M824 149.5h1M825 149.5h1M826 148.5h2M828 147.5h2M830 146.5h1M831 145.5h2M833.5 144v1M834.5 143v1M835.5 141v2M836.5 140v1M837.5 139v1M838.5 138v1M839.5 136v2M840.5 135v1M841.5 134v1M842.5 132v2M843.5 131v1M844.5 129v2M845.5 128v1M846.5 126v2M847.5 125v1M848.5 123v2M849.5 122v1M850.5 121v1M851.5 119v2M852.5 118v1M853.5 117v1M854.5 116v1M855.5 114v2M856.5 113v1M857 112.5h1M858 111.5h1M859 110.5h1M860 109.5h1M861 108.5h1M862 107.5h1M863 106.5h1M864 105.5h1M865 104.5h1M866 103.5h2M868 102.5h1M869 101.5h1M870 100.5h2M872 99.5h1M873.5 98v1M874.5 97v1M875.5 96v1M876.5 95v1M877.5 93v2M878.5 92v1M879.5 91v1M880.5 90v1M881 89.5h1M882 88.5h1M883 87.5h1M884 86.5h2M886 85.5h1M887 84.5h1M888 83.5h1M889 82.5h1M890 81.5h2M892 80.5h1M893 79.5h1M894 78.5h2M896 77.5h1M897 76.5h2M899 75.5h3M902 74.5h2M904 73.5h1M905 73.5h3M908 72.5h4M912 71.5h1M913 71.5h2M915 70.5h2M917 69.5h2M919 68.5h2M921 67.5h3M924 66.5h4M928 65.5h1M929 65.5h2M931 64.5h2M933 63.5h2M935 62.5h2M937 61.5h3M940 60.5h4M944 59.5h2" stroke="#1e90ff"/><path d="M1 285.5h3M4 286.5h4M8 287.5h2M17 285.5h5M22 286.5h3M25 286.5h9M73 268.5h9M97 267.5h3M100 268.5h4M104 269.5h1M105 269.5h1M106 270.5h2M108 271.5h2M110 272.5h1M111 273.5h2M113 274.5h2M115 275.5h3M118 276.5h2M120 277.5h1M121 277.5h3M124 278.5h4M128 279.5h2M137 279.5h8M145 279.5h2M147 280.5h2M149 281.5h2M151 282.5h2M153 283.5h1M154 284.5h1M155 285.5h1M156 286.5h2M158 287.5h1M159 288.5h1M160 289.5h1M161 290.5h1M162 291.5h2M164 292.5h2M166 293.5h1M167 294.5h2M169 295.5h2M171 296.5h2M173 297.5h2M175 298.5h2M177 299.5h2M179 300.5h3M182 301.5h2M184 302.5h1M185 302.5h2M187 303.5h2M189 304.5h2M191 305.5h2M193 306.5h1M194 307.5h2M196 308.5h1M197 309.5h1M198 310.5h2M200 311.5h1M201 312.5h2M203 313.5h3M206 314.5h2M208 315.5h1M209 315.5h5M214 316.5h4M233 315.5h2M235 316.5h3M238 317.5h2M240 318.5h1M241 318.5h2M243 319.5h3M246 320.5h2M248 321.5h1M249 321.5h3M252 322.5h4M256 323.5h1M257 323.5h2M259 324.5h2M261 325.5h2M263 326.5h2M265 327.5h2M267 328.5h3M270 329.5h2M272 330.5h1M273 330.5h1M274 331.5h2M276 332.5h1M277 333.5h1M278 334.5h2M280 335.5h1M281 336.5h1M282 337.5h2M284 338.5h1M285 339.5h1M286 340.5h2M288 341.5h1M289 342.5h2M291 343.5h3M294 344.5h2M296 345.5h1M297 345.5h2M299 346.5h3M302 347.5h2M304 348.5h2M417 286.5h5M422 287.5h3M425 287.5h3M428 288.5h4M432 289.5h1M433 289.5h3M436 290.5h4M440 291.5h1M441 291.5h5M446 292.5h3M449 292.5h2M451 293.5h2M453 294.5h2M455 295.5h2M457 296.5h2M459 297.5h2M461 298.5h2M463 299.5h2M465 300.5h3M468 301.5h4M472 302.5h2M721 161.5h5M726 162.5h3M729 162.5h3M732 163.5h4M736 164.5h1M737 164.5h5M742 165.5h3M745 165.5h3M748 166.5h4M752 167.5h1M753 167.5h2M755 168.5h3M758 169.5h2M760 170.5h1M761 170.5h5M766 171.5h4" stroke="#ff0000"/><path d="M9 287.5h3M12 286.5h4M16 285.5h2M33 286.5h2M35 285.5h3M38 284.5h2M40 283.5h1M41 283.5h2M43 282.5h2M45 281.5h2M47 280.5h2M49 279.5h1M50 278.5h2M52 277.5h1M53 276.5h1M54 275.5h2M56 274.5h1M57 273.5h2M59 272.5h2M61 271.5h2M63 270.5h2M65 269.5h5M70 268.5h4M81 268.5h8M89 268.5h5M94 267.5h4M129 279.5h9M217 316.5h5M222 315.5h3M225 315.5h9M305 348.5h8M313 348.5h2M315 347.5h2M317 346.5h2M319 345.5h2M321 344.5h2M323 343.5h3M326 342.5h2M328 341.5h1M329.5 341v1M330.5 340v1M331.5 338v2M332.5 337v1M333.5 336v1M334.5 335v1M335.5 333v2M336.5 332v1M337.5 331v1M338.5 330v1M339.5 329v1M340.5 328v1M341.5 326v2M342.5 325v1M343.5 324v1M344.5 323v1M345 322.5h1M346 321.5h1M347 320.5h1M348 319.5h2M350 318.5h1M351 317.5h1M352 316.5h1M353.5 315v1M354.5 314v1M355.5 313v1M356.5 312v1M357.5 310v2M358.5 309v1M359.5 308v1M360.5 307v1M361 306.5h1M362 305.5h2M364 304.5h1M365 303.5h1M366 302.5h2M368 301.5h1M369 300.5h1M370 299.5h2M372 298.5h2M374 297.5h1M375 296.5h2M377 295.5h3M380 294.5h4M384 293.5h1M385 293.5h3M388 292.5h4M392 291.5h1M393 291.5h3M396 290.5h4M400 289.5h1M401 289.5h2M403 288.5h3M406 287.5h2M408 286.5h1M409 286.5h9M473 302.5h3M476 301.5h4M480 300.5h1M481 300.5h2M483 299.5h2M485 298.5h2M487 297.5h2M489 296.5h1M490 295.5h2M492 294.5h2M494 293.5h1M495 292.5h2M497 291.5h1M498 290.5h2M500 289.5h2M502 288.5h1M503 287.5h2M505 286.5h1M506 285.5h2M508 284.5h1M509 283.5h1M510 282.5h2M512 281.5h1M513 280.5h1M514 279.5h1M515 278.5h1M516 277.5h1M517 276.5h1M518 275.5h1M519 274.5h1M520 273.5h1M521.5 272v1M522.5 271v1M523.5 270v1M524.5 269v1M525.5 267v2M526.5 266v1M527.5 265v1M528.5 264v1M529.5 263v1M530.5 261v2M531.5 260v1M532.5 259v1M533.5 257v2M534.5 256v1M535.5 255v1M536.5 253v2M537 252.5h1M538 251.5h2M540 250.5h1M541 249.5h1M542 248.5h2M544 247.5h1M545 246.5h2M547 245.5h2M549 244.5h2M551 243.5h2M553 242.5h1M554 241.5h2M556 240.5h1M557 239.5h1M558 238.5h2M560 237.5h1M561 236.5h2M563 235.5h2M565 234.5h2M567 233.5h2M569 232.5h1M570 231.5h2M572 230.5h1M573 229.5h1M574 228.5h2M576 227.5h1M577 226.5h2M579 225.5h3M582 224.5h2M584 223.5h1M585 223.5h2M587 222.5h3M590 221.5h2M592 220.5h1M593 220.5h2M595 219.5h2M597 218.5h2M599 217.5h2M601 216.5h1M602 215.5h2M604 214.5h2M606 213.5h1M607 212.5h2M609 211.5h2M611 210.5h2M613 209.5h2M615 208.5h2M617 207.5h2M619 206.5h3M622 205.5h2M624 204.5h1M625 204.5h3M628 203.5h4M632 202.5h1M633 202.5h2M635 201.5h3M638 200.5h2M640 199.5h1M641 199.5h1M642 198.5h2M644 197.5h1M645 196.5h1M646 195.5h2M648 194.5h1M649 193.5h3M652 192.5h4M656 191.5h1M657 191.5h8M665 191.5h1M666 190.5h2M668 189.5h2M670 188.5h1M671 187.5h2M673 186.5h2M675 185.5h2M677 184.5h2M679 183.5h2M681 182.5h1M682 181.5h2M684 180.5h1M685 179.5h1M686 178.5h2M688 177.5h1M689 176.5h1M690 175.5h2M692 174.5h2M694 173.5h1M695 172.5h2M697 171.5h1M698 170.5h2M700 169.5h2M702 168.5h1M703 167.5h2M705 166.5h2M707 165.5h3M710 164.5h2M712 163.5h1M713 163.5h3M716 162.5h4M720 161.5h2M769 171.5h8M777 171.5h3M780 170.5h4M784 169.5h1M785 169.5h2M787 168.5h3M790 167.5h2M792 166.5h1M793 166.5h3M796 165.5h4M800 164.5h1M801 164.5h2M803 163.5h2M805 162.5h2M807 161.5h2M809 160.5h1M810 159.5h2M812 158.5h2M814 157.5h1M815 156.5h2M817 155.5h1M818 154.5h2M820 153.5h2M822 152.5h1M823 151.5h2M825 150.5h2M827 149.5h2M829 148.5h2M831 147.5h2M833 146.5h1M834 145.5h1M835 144.5h1M836 143.5h1M837 142.5h1M838 141.5h1M839 140.5h1M840 139.5h1M841.5 138v1M842.5 137v1M843.5 135v2M844.5 134v1M845.5 133v1M846.5 132v1M847.5 130v2M848.5 129v1M849.5 128v1M850.5 127v1M851.5 125v2M852.5 124v1M853.5 123v1M854.5 122v1M855.5 120v2M856.5 119v1M857 118.5h1M858 117.5h1M859 116.5h1M860 115.5h1M861 114.5h1M862 113.5h1M863 112.5h1M864 111.5h1M865 110.5h1M866 109.5h1M867 108.5h1M868 107.5h2M870 106.5h1M871 105.5h1M872 104.5h1M873 103.5h1M874 102.5h1M875 101.5h1M876 100.5h1M877 99.5h1M878 98.5h1M879 97.5h1M880 96.5h1M881 95.5h1M882 94.5h1M883 93.5h1M884 92.5h1M885 91.5h1M886 90.5h1M887 89.5h1M888 88.5h1M889 87.5h1M890 86.5h1M891 85.5h1M892 84.5h1M893 83.5h1M894 82.5h1M895 81.5h1M896 80.5h1M897 79.5h2M899 78.5h2M901 77.5h2M903 76.5h2M905 75.5h3M908 74.5h4M912 73.5h1M913 73.5h3M916 72.5h4M920 71.5h1M921 71.5h2M923 70.5h3M926 69.5h2M928 68.5h1M929 68.5h1M930 67.5h2M932 66.5h1M933 65.5h1M934 64.5h2M936 63.5h1M937 62.5h2M939 61.5h3M942 60.5h2M944 59.5h2" stroke="#1e90ff"/><path d="M1 284.5h5M6 285.5h4M17 285.5h8M25 285.5h9M81 269.5h5M86 270.5h4M105 268.5h2M107 269.5h3M110 270.5h2M112 271.5h1M113 271.5h2M115 272.5h3M118 273.5h2M120 274.5h1M121 274.5h2M123 275.5h2M125 276.5h2M127 277.5h2M129 278.5h5M134 279.5h3M137 279.5h8M145 279.5h2M147 280.5h3M150 281.5h2M152 282.5h1M153 282.5h1M154 283.5h2M156 284.5h1M157 285.5h1M158 286.5h2M160 287.5h1M161 288.5h1M162 289.5h2M164 290.5h2M166 291.5h1M167 292.5h2M169 293.5h2M171 294.5h2M173 295.5h2M175 296.5h2M177 297.5h3M180 298.5h4M184 299.5h1M185 299.5h2M187 300.5h2M189 301.5h2M191 302.5h2M193 303.5h2M195 304.5h2M197 305.5h2M199 306.5h2M201 307.5h2M203 308.5h2M205 309.5h2M207 310.5h2M209 311.5h2M211 312.5h2M213 313.5h2M215 314.5h2M217 315.5h3M220 316.5h4M224 317.5h2M233 315.5h3M236 316.5h4M240 317.5h1M241 317.5h3M244 318.5h4M248 319.5h1M249 319.5h2M251 320.5h3M254 321.5h2M256 322.5h1M257 322.5h2M259 323.5h3M262 324.5h2M264 325.5h1M265 325.5h2M267 326.5h2M269 327.5h2M271 328.5h2M273 329.5h1M274 330.5h2M276 331.5h2M278 332.5h1M279 333.5h2M281 334.5h2M283 335.5h2M285 336.5h2M287 337.5h2M289 338.5h2M291 339.5h2M293 340.5h2M295 341.5h2M297 342.5h2M299 343.5h2M301 344.5h2M303 345.5h2M305 346.5h1M409 288.5h9M425 287.5h3M428 288.5h4M432 289.5h1M433 289.5h3M436 290.5h4M440 291.5h1M441 291.5h5M446 292.5h3M449 292.5h3M452 293.5h4M456 294.5h1M457 294.5h3M460 295.5h4M464 296.5h1M465 296.5h2M467 297.5h3M470 298.5h2M472 299.5h2M721 164.5h9M737 164.5h5M742 165.5h3M745 165.5h5M750 166.5h3M753 166.5h5M758 167.5h3M761 167.5h5M766 168.5h3M769 168.5h8M777 168.5h3M780 169.5h4M784 170.5h2" stroke="#ff0000"/><path d="M9 285.5h9M33 285.5h5M38 284.5h3M41 284.5h2M43 283.5h2M45 282.5h2M47 281.5h2M49 280.5h2M51 279.5h2M53 278.5h2M55 277.5h2M57 276.5h2M59 275.5h3M62 274.5h2M64 273.5h1M65 273.5h2M67 272.5h3M70 271.5h2M72 270.5h1M73 270.5h5M78 269.5h4M89 270.5h5M94 269.5h3M97 269.5h5M102 268.5h4M225 317.5h3M228 316.5h4M232 315.5h2M305 346.5h5M310 345.5h3M313 345.5h3M316 344.5h4M320 343.5h1M321 343.5h5M326 342.5h3M329 342.5h1M330 341.5h1M331 340.5h1M332 339.5h1M333 338.5h1M334 337.5h1M335 336.5h1M336 335.5h1M337 334.5h1M338 333.5h2M340 332.5h1M341 331.5h1M342 330.5h2M344 329.5h1M345 328.5h1M346 327.5h1M347 326.5h1M348 325.5h2M350 324.5h1M351 323.5h1M352 322.5h1M353.5 321v1M354.5 320v1M355.5 319v1M356.5 318v1M357.5 316v2M358.5 315v1M359.5 314v1M360.5 313v1M361 312.5h1M362 311.5h2M364 310.5h1M365 309.5h1M366 308.5h2M368 307.5h1M369 306.5h1M370 305.5h1M371 304.5h1M372 303.5h2M374 302.5h1M375 301.5h1M376 300.5h1M377 299.5h2M379 298.5h3M382 297.5h2M384 296.5h1M385 296.5h2M387 295.5h3M390 294.5h2M392 293.5h1M393 293.5h1M394 292.5h2M396 291.5h2M398 290.5h1M399 289.5h2M401 288.5h9M417 288.5h5M422 287.5h4M473 299.5h8M481 299.5h2M483 298.5h3M486 297.5h2M488 296.5h1M489 296.5h2M491 295.5h3M494 294.5h2M496 293.5h1M497 293.5h1M498 292.5h2M500 291.5h2M502 290.5h1M503 289.5h2M505 288.5h1M506 287.5h2M508 286.5h2M510 285.5h1M511 284.5h2M513 283.5h1M514 282.5h2M516 281.5h1M517 280.5h1M518 279.5h2M520 278.5h1M521.5 277v1M522.5 276v1M523.5 275v1M524.5 274v1M525.5 272v2M526.5 271v1M527.5 270v1M528.5 269v1M529.5 268v1M530.5 267v1M531.5 265v2M532.5 264v1M533.5 263v1M534.5 262v1M535.5 260v2M536.5 259v1M537 258.5h1M538 257.5h1M539 256.5h1M540 255.5h1M541 254.5h1M542 253.5h1M543 252.5h1M544 251.5h1M545 250.5h1M546 249.5h2M548 248.5h2M550 247.5h1M551 246.5h2M553 245.5h2M555 244.5h2M557 243.5h2M559 242.5h2M561 241.5h1M562 240.5h2M564 239.5h2M566 238.5h1M567 237.5h2M569 236.5h1M570 235.5h2M572 234.5h1M573 233.5h1M574 232.5h2M576 231.5h1M577 230.5h2M579 229.5h2M581 228.5h2M583 227.5h2M585 226.5h1M586 225.5h2M588 224.5h2M590 223.5h1M591 222.5h2M593 221.5h1M594 220.5h2M596 219.5h2M598 218.5h1M599 217.5h2M601 216.5h3M604 215.5h4M608 214.5h1M609 214.5h2M611 213.5h2M613 212.5h2M615 211.5h2M617 210.5h2M619 209.5h3M622 208.5h2M624 207.5h1M625 207.5h3M628 206.5h4M632 205.5h1M633 205.5h1M634 204.5h2M636 203.5h2M638 202.5h1M639 201.5h2M641 200.5h2M643 199.5h2M645 198.5h2M647 197.5h2M649 196.5h2M651 195.5h2M653 194.5h2M655 193.5h2M657 192.5h5M662 191.5h3M665 191.5h2M667 190.5h2M669 189.5h2M671 188.5h2M673 187.5h3M676 186.5h4M680 185.5h1M681 185.5h1M682 184.5h2M684 183.5h2M686 182.5h1M687 181.5h2M689 180.5h1M690 179.5h2M692 178.5h1M693 177.5h1M694 176.5h2M696 175.5h1M697 174.5h1M698 173.5h2M700 172.5h1M701 171.5h1M702 170.5h2M704 169.5h1M705 168.5h2M707 167.5h2M709 166.5h2M711 165.5h2M713 164.5h9M729 164.5h9M785 170.5h5M790 169.5h3M793 169.5h2M795 168.5h3M798 167.5h2M800 166.5h1M801 166.5h2M803 165.5h2M805 164.5h2M807 163.5h2M809 162.5h1M810 161.5h2M812 160.5h2M814 159.5h1M815 158.5h2M817 157.5h1M818 156.5h2M820 155.5h2M822 154.5h1M823 153.5h2M825 152.5h1M826 151.5h2M828 150.5h2M830 149.5h1M831 148.5h2M833 147.5h1M834 146.5h2M836 145.5h1M837 144.5h1M838 143.5h2M840 142.5h1M841 141.5h1M842 140.5h1M843 139.5h1M844 138.5h1M845 137.5h1M846 136.5h1M847 135.5h1M848 134.5h1M849.5 133v1M850.5 132v1M851.5 131v1M852.5 130v1M853.5 128v2M854.5 127v1M855.5 126v1M856.5 125v1M857 124.5h1M858 123.5h1M859 122.5h1M860 121.5h1M861 120.5h1M862 119.5h1M863 118.5h1M864 117.5h1M865 116.5h1M866 115.5h1M867 114.5h1M868 113.5h1M869 112.5h1M870 111.5h1M871 110.5h1M872 109.5h1M873 108.5h1M874 107.5h1M875 106.5h1M876 105.5h1M877 104.5h1M878 103.5h1M879 102.5h1M880 101.5h1M881 100.5h1M882 99.5h1M883 98.5h1M884 97.5h1M885 96.5h1M886 95.5h1M887 94.5h1M888 93.5h1M889 92.5h1M890 91.5h1M891 90.5h1M892 89.5h1M893 88.5h1M894 87.5h1M895 86.5h1M896 85.5h1M897 84.5h1M898 83.5h1M899 82.5h1M900 81.5h2M902 80.5h1M903 79.5h1M904 78.5h1M905 77.5h3M908 76.5h4M912 75.5h1M913 75.5h3M916 74.5h4M920 73.5h1M921 73.5h3M924 72.5h4M928 71.5h1M929 71.5h1M930 70.5h2M932 69.5h1M933 68.5h1M934 67.5h2M936 66.5h1M937 65.5h1M938 64.5h2M940 63.5h2M942 62.5h1M943 61.5h2M945 60.5h1" stroke="#1e90ff"/><path d="M1 283.5h5M6 284.5h4M17 284.5h8M25 284.5h5M30 285.5h4M105 270.5h5M110 271.5h3M113 271.5h8M121 271.5h2M123 272.5h3M126 273.5h2M128 274.5h1M129 274.5h3M132 275.5h4M136 276.5h1M137 276.5h3M140 277.5h4M144 278.5h1M145 278.5h2M147 279.5h2M149 280.5h2M151 281.5h2M153 282.5h1M154 283.5h2M156 284.5h2M158 285.5h1M159 286.5h2M161 287.5h2M163 288.5h3M166 289.5h2M168 290.5h1M169 290.5h2M171 291.5h2M173 292.5h2M175 293.5h2M177 294.5h2M179 295.5h3M182 296.5h2M184 297.5h1M185 297.5h2M187 298.5h3M190 299.5h2M192 300.5h1M193 300.5h2M195 301.5h3M198 302.5h2M200 303.5h1M201 303.5h2M203 304.5h3M206 305.5h2M208 306.5h1M209 306.5h1M210 307.5h2M212 308.5h2M214 309.5h1M215 310.5h2M217 311.5h2M219 312.5h2M221 313.5h2M223 314.5h2M225 315.5h5M230 316.5h3M233 316.5h3M236 317.5h4M240 318.5h1M241 318.5h8M249 318.5h3M252 319.5h4M256 320.5h1M257 320.5h2M259 321.5h3M262 322.5h2M264 323.5h1M265 323.5h2M267 324.5h2M269 325.5h2M271 326.5h2M273 327.5h2M275 328.5h2M277 329.5h2M279 330.5h2M281 331.5h1M282 332.5h2M284 333.5h2M286 334.5h1M287 335.5h2M289 336.5h2M291 337.5h3M294 338.5h2M296 339.5h1M297 339.5h2M299 340.5h3M302 341.5h2M304 342.5h1M305 342.5h5M310 343.5h4M409 288.5h8M417 288.5h5M422 289.5h3M425 289.5h8M433 289.5h3M436 290.5h4M440 291.5h1M441 291.5h5M446 292.5h3M449 292.5h3M452 293.5h4M456 294.5h1M457 294.5h8M465 294.5h5M470 295.5h3M473 295.5h5M478 296.5h4M721 165.5h5M726 166.5h3M729 166.5h5M734 167.5h4M745 166.5h8M753 166.5h5M758 167.5h4M777 165.5h3M780 166.5h4M784 167.5h1M785 167.5h5M790 168.5h4" stroke="#ff0000"/><path d="M9 284.5h9M33 285.5h5M38 284.5h3M41 284.5h2M43 283.5h2M45 282.5h2M47 281.5h2M49 280.5h2M51 279.5h3M54 278.5h2M56 277.5h1M57 277.5h3M60 276.5h4M64 275.5h1M65 275.5h5M70 274.5h3M73 274.5h3M76 273.5h4M80 272.5h1M81 272.5h5M86 271.5h3M89 271.5h8M97 271.5h5M102 270.5h4M313 343.5h3M316 342.5h4M320 341.5h1M321 341.5h5M326 340.5h3M329 340.5h1M330 339.5h2M332 338.5h2M334 337.5h1M335 336.5h2M337 335.5h1M338 334.5h2M340 333.5h2M342 332.5h1M343 331.5h2M345 330.5h2M347 329.5h2M349 328.5h2M351 327.5h2M353 326.5h1M354 325.5h1M355 324.5h1M356 323.5h2M358 322.5h1M359 321.5h1M360 320.5h1M361 319.5h1M362 318.5h2M364 317.5h1M365 316.5h1M366 315.5h2M368 314.5h1M369 313.5h1M370 312.5h1M371 311.5h1M372 310.5h2M374 309.5h1M375 308.5h1M376 307.5h1M377 306.5h1M378 305.5h2M380 304.5h2M382 303.5h1M383 302.5h2M385 301.5h1M386 300.5h2M388 299.5h2M390 298.5h1M391 297.5h2M393 296.5h1M394 295.5h2M396 294.5h2M398 293.5h1M399 292.5h2M401 291.5h2M403 290.5h3M406 289.5h2M408 288.5h2M481 296.5h8M489 296.5h2M491 295.5h3M494 294.5h2M496 293.5h1M497 293.5h3M500 292.5h4M504 291.5h1M505 291.5h1M506 290.5h2M508 289.5h2M510 288.5h1M511 287.5h2M513 286.5h1M514 285.5h2M516 284.5h1M517 283.5h1M518 282.5h2M520 281.5h1M521 280.5h1M522 279.5h1M523 278.5h1M524 277.5h2M526 276.5h1M527 275.5h1M528 274.5h1M529.5 273v1M530.5 272v1M531.5 271v1M532.5 270v1M533.5 268v2M534.5 267v1M535.5 266v1M536.5 265v1M537 264.5h1M538 263.5h1M539 262.5h1M540 261.5h2M542 260.5h1M543 259.5h1M544 258.5h1M545 257.5h1M546 256.5h2M548 255.5h1M549 254.5h1M550 253.5h2M552 252.5h1M553 251.5h1M554 250.5h2M556 249.5h1M557 248.5h1M558 247.5h2M560 246.5h1M561 245.5h2M563 244.5h2M565 243.5h2M567 242.5h2M569 241.5h1M570 240.5h2M572 239.5h1M573 238.5h1M574 237.5h2M576 236.5h1M577 235.5h1M578 234.5h2M580 233.5h2M582 232.5h1M583 231.5h2M585 230.5h1M586 229.5h2M588 228.5h1M589 227.5h1M590 226.5h2M592 225.5h1M593 224.5h1M594 223.5h2M596 222.5h1M597 221.5h1M598 220.5h2M600 219.5h1M601 218.5h2M603 217.5h3M606 216.5h2M608 215.5h1M609 215.5h3M612 214.5h4M616 213.5h1M617 213.5h3M620 212.5h4M624 211.5h1M625 211.5h2M627 210.5h3M630 209.5h2M632 208.5h1M633 208.5h2M635 207.5h2M637 206.5h2M639 205.5h2M641 204.5h1M642 203.5h2M644 202.5h1M645 201.5h1M646 200.5h2M648 199.5h1M649 198.5h2M651 197.5h3M654 196.5h2M656 195.5h1M657 195.5h2M659 194.5h3M662 193.5h2M664 192.5h1M665 192.5h2M667 191.5h2M669 190.5h2M671 189.5h2M673 188.5h3M676 187.5h4M680 186.5h1M681 186.5h2M683 185.5h3M686 184.5h2M688 183.5h1M689 183.5h2M691 182.5h2M693 181.5h2M695 180.5h2M697 179.5h1M698 178.5h2M700 177.5h1M701 176.5h1M702 175.5h2M704 174.5h1M705 173.5h1M706 172.5h2M708 171.5h1M709 170.5h1M710 169.5h2M712 168.5h1M713 167.5h3M716 166.5h4M720 165.5h2M737 167.5h5M742 166.5h4M761 167.5h5M766 166.5h3M769 166.5h5M774 165.5h4M793 168.5h8M801 168.5h2M803 167.5h3M806 166.5h2M808 165.5h1M809 165.5h1M810 164.5h2M812 163.5h2M814 162.5h1M815 161.5h2M817 160.5h1M818 159.5h2M820 158.5h2M822 157.5h1M823 156.5h2M825 155.5h2M827 154.5h2M829 153.5h2M831 152.5h2M833 151.5h1M834 150.5h1M835 149.5h1M836 148.5h1M837 147.5h1M838 146.5h1M839 145.5h1M840 144.5h1M841 143.5h1M842 142.5h1M843 141.5h1M844 140.5h2M846 139.5h1M847 138.5h1M848 137.5h1M849 136.5h1M850 135.5h1M851 134.5h1M852 133.5h2M854 132.5h1M855 131.5h1M856 130.5h1M857 129.5h1M858 128.5h1M859 127.5h1M860 126.5h2M862 125.5h1M863 124.5h1M864 123.5h1M865 122.5h1M866 121.5h2M868 120.5h1M869 119.5h1M870 118.5h2M872 117.5h1M873.5 116v1M874.5 115v1M875.5 114v1M876.5 113v1M877.5 111v2M878.5 110v1M879.5 109v1M880.5 108v1M881 107.5h1M882 106.5h1M883 105.5h1M884 104.5h1M885 103.5h1M886 102.5h1M887 101.5h1M888 100.5h1M889 99.5h1M890 98.5h1M891 97.5h1M892 96.5h1M893 95.5h1M894 94.5h1M895 93.5h1M896 92.5h1M897 91.5h1M898 90.5h1M899 89.5h1M900 88.5h2M902 87.5h1M903 86.5h1M904 85.5h1M905 84.5h1M906 83.5h2M908 82.5h2M910 81.5h1M911 80.5h2M913 79.5h2M915 78.5h2M917 77.5h2M919 76.5h2M921 75.5h3M924 74.5h4M928 73.5h1M929 73.5h1M930 72.5h2M932 71.5h2M934 70.5h1M935 69.5h2M937 68.5h2M939 67.5h2M941 66.5h2M943 65.5h2M945 64.5h1" stroke="#1e90ff"/></g>
<g clip-path="url(#cpMain)" shape-rendering="auto"><polygon points="0.1,264.0 3.5,264.0 3.5,271.4 7.2,268.0 7.2,271.9 1.8,277.6 -3.6,271.9 -3.6,268.0 0.1,271.4" fill="#ff0000"/><polygon points="8.6,309.3 14.1,315.4 14.1,319.3 10.2,315.9 10.2,323.3 7.0,323.3 7.0,315.9 3.1,319.3 3.1,315.4" fill="#1e90ff"/><polygon points="16.6,287.3 22.1,293.4 22.1,297.3 18.2,293.9 18.2,301.3 15.0,301.3 15.0,293.9 11.1,297.3 11.1,293.4" fill="#1e90ff"/><polygon points="24.1,261.0 27.5,261.0 27.5,268.4 31.2,265.0 31.2,268.9 25.8,274.6 20.4,268.9 20.4,265.0 24.1,268.4" fill="#ff0000"/><polygon points="40.6,286.3 46.1,292.4 46.1,296.3 42.2,292.9 42.2,300.3 39.0,300.3 39.0,292.9 35.1,296.3 35.1,292.4" fill="#1e90ff"/><polygon points="64.1,239.8 67.5,239.8 67.5,247.2 71.2,243.8 71.2,247.7 65.8,253.4 60.4,247.7 60.4,243.8 64.1,247.2" fill="#ff0000"/><polygon points="96.6,293.3 102.1,299.4 102.1,303.3 98.2,299.9 98.2,307.3 95.0,307.3 95.0,299.9 91.1,303.3 91.1,299.4" fill="#1e90ff"/><polygon points="104.1,261.0 107.5,261.0 107.5,268.4 111.2,265.0 111.2,268.9 105.8,274.6 100.4,268.9 100.4,265.0 104.1,268.4" fill="#ff0000"/><polygon points="112.1,265.0 115.5,265.0 115.5,272.4 119.2,269.0 119.2,272.9 113.8,278.6 108.4,272.9 108.4,269.0 112.1,272.4" fill="#ff0000"/><polygon points="120.6,289.3 126.1,295.4 126.1,299.3 122.2,295.9 122.2,303.3 119.0,303.3 119.0,295.9 115.1,299.3 115.1,295.4" fill="#1e90ff"/><polygon points="128.1,265.8 131.5,265.8 131.5,273.2 135.2,269.8 135.2,273.7 129.8,279.4 124.4,273.7 124.4,269.8 128.1,273.2" fill="#ff0000"/><polygon points="136.6,283.0 142.1,289.1 142.1,293.0 138.2,289.6 138.2,297.0 135.0,297.0 135.0,289.6 131.1,293.0 131.1,289.1" fill="#1e90ff"/><polygon points="144.1,265.8 147.5,265.8 147.5,273.2 151.2,269.8 151.2,273.7 145.8,279.4 140.4,273.7 140.4,269.8 144.1,273.2" fill="#ff0000"/><polygon points="152.1,267.8 155.5,267.8 155.5,275.2 159.2,271.8 159.2,275.7 153.8,281.4 148.4,275.7 148.4,271.8 152.1,275.2" fill="#ff0000"/><polygon points="184.6,306.7 190.1,312.8 190.1,316.7 186.2,313.3 186.2,320.7 183.0,320.7 183.0,313.3 179.1,316.7 179.1,312.8" fill="#1e90ff"/><polygon points="200.1,303.0 203.5,303.0 203.5,310.4 207.2,307.0 207.2,310.9 201.8,316.6 196.4,310.9 196.4,307.0 200.1,310.4" fill="#ff0000"/><polygon points="208.6,328.9 214.1,335.0 214.1,338.9 210.2,335.5 210.2,342.9 207.0,342.9 207.0,335.5 203.1,338.9 203.1,335.0" fill="#1e90ff"/><polygon points="216.1,303.0 219.5,303.0 219.5,310.4 223.2,307.0 223.2,310.9 217.8,316.6 212.4,310.9 212.4,307.0 216.1,310.4" fill="#ff0000"/><polygon points="232.6,317.1 238.1,323.2 238.1,327.1 234.2,323.7 234.2,331.1 231.0,331.1 231.0,323.7 227.1,327.1 227.1,323.2" fill="#1e90ff"/><polygon points="240.1,307.5 243.5,307.5 243.5,314.9 247.2,311.5 247.2,315.4 241.8,321.1 236.4,315.4 236.4,311.5 240.1,314.9" fill="#ff0000"/><polygon points="296.6,355.6 302.1,361.7 302.1,365.6 298.2,362.2 298.2,369.6 295.0,369.6 295.0,362.2 291.1,365.6 291.1,361.7" fill="#1e90ff"/><polygon points="320.6,321.0 326.1,327.1 326.1,331.0 322.2,327.6 322.2,335.0 319.0,335.0 319.0,327.6 315.1,331.0 315.1,327.1" fill="#1e90ff"/><polygon points="328.1,298.8 331.5,298.8 331.5,306.2 335.2,302.8 335.2,306.7 329.8,312.4 324.4,306.7 324.4,302.8 328.1,306.2" fill="#ff0000"/><polygon points="336.6,318.1 342.1,324.2 342.1,328.1 338.2,324.7 338.2,332.1 335.0,332.1 335.0,324.7 331.1,328.1 331.1,324.2" fill="#1e90ff"/><polygon points="352.1,273.5 355.5,273.5 355.5,280.9 359.2,277.5 359.2,281.4 353.8,287.1 348.4,281.4 348.4,277.5 352.1,280.9" fill="#ff0000"/><polygon points="360.6,303.3 366.1,309.4 366.1,313.3 362.2,309.9 362.2,317.3 359.0,317.3 359.0,309.9 355.1,313.3 355.1,309.4" fill="#1e90ff"/><polygon points="384.1,274.0 387.5,274.0 387.5,281.4 391.2,278.0 391.2,281.9 385.8,287.6 380.4,281.9 380.4,278.0 384.1,281.4" fill="#ff0000"/><polygon points="392.6,294.5 398.1,300.6 398.1,304.5 394.2,301.1 394.2,308.5 391.0,308.5 391.0,301.1 387.1,304.5 387.1,300.6" fill="#1e90ff"/><polygon points="416.1,268.0 419.5,268.0 419.5,275.4 423.2,272.0 423.2,275.9 417.8,281.6 412.4,275.9 412.4,272.0 416.1,275.4" fill="#ff0000"/><polygon points="448.6,305.7 454.1,311.8 454.1,315.7 450.2,312.3 450.2,319.7 447.0,319.7 447.0,312.3 443.1,315.7 443.1,311.8" fill="#1e90ff"/><polygon points="456.1,280.0 459.5,280.0 459.5,287.4 463.2,284.0 463.2,287.9 457.8,293.6 452.4,287.9 452.4,284.0 456.1,287.4" fill="#ff0000"/><polygon points="464.6,305.7 470.1,311.8 470.1,315.7 466.2,312.3 466.2,319.7 463.0,319.7 463.0,312.3 459.1,315.7 459.1,311.8" fill="#1e90ff"/><polygon points="552.1,212.7 555.5,212.7 555.5,220.1 559.2,216.7 559.2,220.6 553.8,226.3 548.4,220.6 548.4,216.7 552.1,220.1" fill="#ff0000"/><polygon points="560.6,247.3 566.1,253.4 566.1,257.3 562.2,253.9 562.2,261.3 559.0,261.3 559.0,253.9 555.1,257.3 555.1,253.4" fill="#1e90ff"/><polygon points="568.1,212.7 571.5,212.7 571.5,220.1 575.2,216.7 575.2,220.6 569.8,226.3 564.4,220.6 564.4,216.7 568.1,220.1" fill="#ff0000"/><polygon points="576.6,229.8 582.1,235.9 582.1,239.8 578.2,236.4 578.2,243.8 575.0,243.8 575.0,236.4 571.1,239.8 571.1,235.9" fill="#1e90ff"/><polygon points="624.1,182.0 627.5,182.0 627.5,189.4 631.2,186.0 631.2,189.9 625.8,195.6 620.4,189.9 620.4,186.0 624.1,189.4" fill="#ff0000"/><polygon points="640.6,206.5 646.1,212.6 646.1,216.5 642.2,213.1 642.2,220.5 639.0,220.5 639.0,213.1 635.1,216.5 635.1,212.6" fill="#1e90ff"/><polygon points="664.1,158.9 667.5,158.9 667.5,166.3 671.2,162.9 671.2,166.8 665.8,172.5 660.4,166.8 660.4,162.9 664.1,166.3" fill="#ff0000"/><polygon points="672.6,180.8 678.1,186.9 678.1,190.8 674.2,187.4 674.2,194.8 671.0,194.8 671.0,187.4 667.1,190.8 667.1,186.9" fill="#1e90ff"/><polygon points="720.1,133.2 723.5,133.2 723.5,140.6 727.2,137.2 727.2,141.1 721.8,146.8 716.4,141.1 716.4,137.2 720.1,140.6" fill="#ff0000"/><polygon points="760.6,191.0 766.1,197.1 766.1,201.0 762.2,197.6 762.2,205.0 759.0,205.0 759.0,197.6 755.1,201.0 755.1,197.1" fill="#1e90ff"/><polygon points="784.1,143.0 787.5,143.0 787.5,150.4 791.2,147.0 791.2,150.9 785.8,156.6 780.4,150.9 780.4,147.0 784.1,150.4" fill="#ff0000"/><polygon points="792.6,161.7 798.1,167.8 798.1,171.7 794.2,168.3 794.2,175.7 791.0,175.7 791.0,168.3 787.1,171.7 787.1,167.8" fill="#1e90ff"/><polygon points="912.1,48.0 915.5,48.0 915.5,55.4 919.2,52.0 919.2,55.9 913.8,61.6 908.4,55.9 908.4,52.0 912.1,55.4" fill="#ff0000"/><polygon points="936.6,67.6 942.1,73.7 942.1,77.6 938.2,74.2 938.2,81.6 935.0,81.6 935.0,74.2 931.1,77.6 931.1,73.7" fill="#1e90ff"/></g>
<g clip-path="url(#cpMain)"><rect x="1" y="276" width="1" height="28" fill="#ffffff"/><rect x="-1" y="276" width="5" height="28" fill="#ffffff"/><rect x="9" y="286" width="1" height="29" fill="#00ff00"/><rect x="7" y="286" width="5" height="19" fill="#00ff00"/><rect x="8" y="287" width="3" height="17" fill="#008000"/><rect x="17" y="270" width="1" height="22" fill="#00ff00"/><rect x="15" y="272" width="5" height="13" fill="#00ff00"/><rect x="16" y="273" width="3" height="11" fill="#008000"/><rect x="25" y="270" width="1" height="16" fill="#ffffff"/><rect x="23" y="270" width="5" height="16" fill="#ffffff"/><rect x="33" y="280" width="1" height="12" fill="#ffffff"/><rect x="31" y="283" width="5" height="2" fill="#ffffff"/><rect x="41" y="269" width="1" height="19" fill="#00ff00"/><rect x="39" y="269" width="5" height="17" fill="#00ff00"/><rect x="40" y="270" width="3" height="15" fill="#008000"/><rect x="49" y="250" width="1" height="23" fill="#00ff00"/><rect x="47" y="250" width="5" height="21" fill="#00ff00"/><rect x="48" y="251" width="3" height="19" fill="#008000"/><rect x="57" y="243" width="1" height="15" fill="#ffffff"/><rect x="55" y="248" width="5" height="3" fill="#ffffff"/><rect x="65" y="251" width="1" height="15" fill="#ffffff"/><rect x="63" y="251" width="5" height="13" fill="#ffffff"/><rect x="73" y="262" width="1" height="15" fill="#ffffff"/><rect x="71" y="263" width="5" height="10" fill="#ffffff"/><rect x="81" y="266" width="1" height="16" fill="#ffffff"/><rect x="79" y="273" width="5" height="5" fill="#ffffff"/><rect x="89" y="269" width="1" height="17" fill="#ffffff"/><rect x="87" y="277" width="5" height="6" fill="#ffffff"/><rect x="97" y="269" width="1" height="29" fill="#00ff00"/><rect x="95" y="272" width="5" height="10" fill="#00ff00"/><rect x="96" y="273" width="3" height="8" fill="#008000"/><rect x="105" y="272" width="1" height="5" fill="#ffffff"/><rect x="103" y="272" width="5" height="5" fill="#ffffff"/><rect x="113" y="274" width="1" height="19" fill="#ffffff"/><rect x="111" y="274" width="5" height="16" fill="#ffffff"/><rect x="121" y="274" width="1" height="19" fill="#00ff00"/><rect x="119" y="274" width="5" height="16" fill="#00ff00"/><rect x="120" y="275" width="3" height="14" fill="#008000"/><rect x="129" y="276" width="1" height="14" fill="#ffffff"/><rect x="127" y="276" width="5" height="13" fill="#ffffff"/><rect x="137" y="274" width="1" height="12" fill="#00ff00"/><rect x="135" y="274" width="5" height="12" fill="#00ff00"/><rect x="136" y="275" width="3" height="10" fill="#008000"/><rect x="145" y="276" width="1" height="9" fill="#ffffff"/><rect x="143" y="276" width="5" height="5" fill="#ffffff"/><rect x="153" y="278" width="1" height="34" fill="#ffffff"/><rect x="151" y="278" width="5" height="27" fill="#ffffff"/><rect x="161" y="303" width="1" height="28" fill="#ffffff"/><rect x="159" y="305" width="5" height="23" fill="#ffffff"/><rect x="169" y="320" width="1" height="14" fill="#00ff00"/><rect x="167" y="320" width="5" height="6" fill="#00ff00"/><rect x="168" y="321" width="3" height="4" fill="#008000"/><rect x="177" y="304" width="1" height="18" fill="#00ff00"/><rect x="175" y="312" width="5" height="10" fill="#00ff00"/><rect x="176" y="313" width="3" height="8" fill="#008000"/><rect x="185" y="301" width="1" height="12" fill="#00ff00"/><rect x="183" y="308" width="5" height="3" fill="#00ff00"/><rect x="184" y="309" width="3" height="1" fill="#008000"/><rect x="193" y="304" width="1" height="15" fill="#ffffff"/><rect x="191" y="307" width="5" height="6" fill="#ffffff"/><rect x="201" y="309" width="1" height="15" fill="#ffffff"/><rect x="199" y="312" width="5" height="5" fill="#ffffff"/><rect x="209" y="310" width="1" height="21" fill="#00ff00"/><rect x="207" y="315" width="5" height="4" fill="#00ff00"/><rect x="208" y="316" width="3" height="2" fill="#008000"/><rect x="217" y="315" width="1" height="8" fill="#ffffff"/><rect x="215" y="315" width="5" height="8" fill="#ffffff"/><rect x="225" y="308" width="1" height="22" fill="#00ff00"/><rect x="223" y="319" width="5" height="2" fill="#00ff00"/><rect x="233" y="314" width="1" height="9" fill="#00ff00"/><rect x="231" y="316" width="5" height="5" fill="#00ff00"/><rect x="232" y="317" width="3" height="3" fill="#008000"/><rect x="241" y="318" width="1" height="17" fill="#ffffff"/><rect x="239" y="318" width="5" height="17" fill="#ffffff"/><rect x="249" y="320" width="1" height="16" fill="#00ff00"/><rect x="247" y="331" width="5" height="4" fill="#00ff00"/><rect x="248" y="332" width="3" height="2" fill="#008000"/><rect x="257" y="324" width="1" height="14" fill="#00ff00"/><rect x="255" y="330" width="5" height="4" fill="#00ff00"/><rect x="256" y="331" width="3" height="2" fill="#008000"/><rect x="265" y="329" width="1" height="17" fill="#ffffff"/><rect x="263" y="329" width="5" height="17" fill="#ffffff"/><rect x="273" y="342" width="1" height="9" fill="#00ff00"/><rect x="271" y="345" width="5" height="2" fill="#00ff00"/><rect x="281" y="343" width="1" height="22" fill="#ffffff"/><rect x="279" y="346" width="5" height="19" fill="#ffffff"/><rect x="289" y="354" width="1" height="14" fill="#00ff00"/><rect x="287" y="360" width="5" height="3" fill="#00ff00"/><rect x="288" y="361" width="3" height="1" fill="#008000"/><rect x="297" y="350" width="1" height="8" fill="#00ff00"/><rect x="295" y="350" width="5" height="8" fill="#00ff00"/><rect x="296" y="351" width="3" height="6" fill="#008000"/><rect x="305" y="346" width="1" height="12" fill="#ffffff"/><rect x="303" y="349" width="5" height="4" fill="#ffffff"/><rect x="313" y="327" width="1" height="25" fill="#00ff00"/><rect x="311" y="330" width="5" height="22" fill="#00ff00"/><rect x="312" y="331" width="3" height="20" fill="#008000"/><rect x="321" y="310" width="1" height="17" fill="#00ff00"/><rect x="319" y="310" width="5" height="17" fill="#00ff00"/><rect x="320" y="311" width="3" height="15" fill="#008000"/><rect x="329" y="311" width="1" height="13" fill="#ffffff"/><rect x="327" y="311" width="5" height="10" fill="#ffffff"/><rect x="337" y="272" width="1" height="48" fill="#00ff00"/><rect x="335" y="278" width="5" height="42" fill="#00ff00"/><rect x="336" y="279" width="3" height="40" fill="#008000"/><rect x="345" y="280" width="1" height="20" fill="#ffffff"/><rect x="343" y="280" width="5" height="12" fill="#ffffff"/><rect x="353" y="283" width="1" height="21" fill="#ffffff"/><rect x="351" y="289" width="5" height="15" fill="#ffffff"/><rect x="361" y="282" width="1" height="23" fill="#00ff00"/><rect x="359" y="285" width="5" height="20" fill="#00ff00"/><rect x="360" y="286" width="3" height="18" fill="#008000"/><rect x="369" y="281" width="1" height="11" fill="#ffffff"/><rect x="367" y="288" width="5" height="4" fill="#ffffff"/><rect x="377" y="285" width="1" height="20" fill="#00ff00"/><rect x="375" y="289" width="5" height="1" fill="#00ff00"/><rect x="385" y="285" width="1" height="15" fill="#ffffff"/><rect x="383" y="291" width="5" height="9" fill="#ffffff"/><rect x="393" y="285" width="1" height="13" fill="#00ff00"/><rect x="391" y="285" width="5" height="13" fill="#00ff00"/><rect x="392" y="286" width="3" height="11" fill="#008000"/><rect x="401" y="266" width="1" height="26" fill="#00ff00"/><rect x="399" y="267" width="5" height="17" fill="#00ff00"/><rect x="400" y="268" width="3" height="15" fill="#008000"/><rect x="409" y="255" width="1" height="24" fill="#ffffff"/><rect x="407" y="266" width="5" height="13" fill="#ffffff"/><rect x="417" y="277" width="1" height="19" fill="#ffffff"/><rect x="415" y="277" width="5" height="19" fill="#ffffff"/><rect x="425" y="286" width="1" height="14" fill="#00ff00"/><rect x="423" y="293" width="5" height="1" fill="#00ff00"/><rect x="433" y="289" width="1" height="27" fill="#ffffff"/><rect x="431" y="295" width="5" height="14" fill="#ffffff"/><rect x="441" y="301" width="1" height="20" fill="#00ff00"/><rect x="439" y="310" width="5" height="1" fill="#00ff00"/><rect x="449" y="293" width="1" height="17" fill="#00ff00"/><rect x="447" y="295" width="5" height="15" fill="#00ff00"/><rect x="448" y="296" width="3" height="13" fill="#008000"/><rect x="457" y="289" width="1" height="22" fill="#ffffff"/><rect x="455" y="299" width="5" height="12" fill="#ffffff"/><rect x="465" y="295" width="1" height="14" fill="#00ff00"/><rect x="463" y="301" width="5" height="8" fill="#00ff00"/><rect x="464" y="302" width="3" height="6" fill="#008000"/><rect x="473" y="289" width="1" height="16" fill="#00ff00"/><rect x="471" y="299" width="5" height="6" fill="#00ff00"/><rect x="472" y="300" width="3" height="4" fill="#008000"/><rect x="481" y="282" width="1" height="16" fill="#00ff00"/><rect x="479" y="282" width="5" height="16" fill="#00ff00"/><rect x="480" y="283" width="3" height="14" fill="#008000"/><rect x="489" y="259" width="1" height="23" fill="#00ff00"/><rect x="487" y="269" width="5" height="13" fill="#00ff00"/><rect x="488" y="270" width="3" height="11" fill="#008000"/><rect x="497" y="255" width="1" height="15" fill="#00ff00"/><rect x="495" y="269" width="5" height="1" fill="#00ff00"/><rect x="505" y="265" width="1" height="25" fill="#00ff00"/><rect x="503" y="266" width="5" height="7" fill="#00ff00"/><rect x="504" y="267" width="3" height="5" fill="#008000"/><rect x="513" y="253" width="1" height="15" fill="#00ff00"/><rect x="511" y="259" width="5" height="9" fill="#00ff00"/><rect x="512" y="260" width="3" height="7" fill="#008000"/><rect x="521" y="244" width="1" height="15" fill="#00ff00"/><rect x="519" y="247" width="5" height="12" fill="#00ff00"/><rect x="520" y="248" width="3" height="10" fill="#008000"/><rect x="529" y="227" width="1" height="20" fill="#00ff00"/><rect x="527" y="227" width="5" height="20" fill="#00ff00"/><rect x="528" y="228" width="3" height="18" fill="#008000"/><rect x="537" y="202" width="1" height="29" fill="#00ff00"/><rect x="535" y="215" width="5" height="13" fill="#00ff00"/><rect x="536" y="216" width="3" height="11" fill="#008000"/><rect x="545" y="215" width="1" height="22" fill="#ffffff"/><rect x="543" y="215" width="5" height="13" fill="#ffffff"/><rect x="553" y="224" width="1" height="23" fill="#ffffff"/><rect x="551" y="230" width="5" height="6" fill="#ffffff"/><rect x="561" y="228" width="1" height="21" fill="#00ff00"/><rect x="559" y="228" width="5" height="8" fill="#00ff00"/><rect x="560" y="229" width="3" height="6" fill="#008000"/><rect x="569" y="224" width="1" height="24" fill="#00ff00"/><rect x="567" y="230" width="5" height="1" fill="#00ff00"/><rect x="577" y="205" width="1" height="25" fill="#00ff00"/><rect x="575" y="209" width="5" height="21" fill="#00ff00"/><rect x="576" y="210" width="3" height="19" fill="#008000"/><rect x="585" y="205" width="1" height="13" fill="#ffffff"/><rect x="583" y="211" width="5" height="7" fill="#ffffff"/><rect x="593" y="198" width="1" height="30" fill="#00ff00"/><rect x="591" y="200" width="5" height="15" fill="#00ff00"/><rect x="592" y="201" width="3" height="13" fill="#008000"/><rect x="601" y="175" width="1" height="33" fill="#00ff00"/><rect x="599" y="187" width="5" height="14" fill="#00ff00"/><rect x="600" y="188" width="3" height="12" fill="#008000"/><rect x="609" y="185" width="1" height="16" fill="#ffffff"/><rect x="607" y="186" width="5" height="8" fill="#ffffff"/><rect x="617" y="186" width="1" height="17" fill="#ffffff"/><rect x="615" y="193" width="5" height="6" fill="#ffffff"/><rect x="625" y="194" width="1" height="16" fill="#ffffff"/><rect x="623" y="194" width="5" height="16" fill="#ffffff"/><rect x="633" y="202" width="1" height="11" fill="#00ff00"/><rect x="631" y="206" width="5" height="3" fill="#00ff00"/><rect x="632" y="207" width="3" height="1" fill="#008000"/><rect x="641" y="186" width="1" height="24" fill="#00ff00"/><rect x="639" y="186" width="5" height="16" fill="#00ff00"/><rect x="640" y="187" width="3" height="14" fill="#008000"/><rect x="649" y="160" width="1" height="23" fill="#00ff00"/><rect x="647" y="172" width="5" height="11" fill="#00ff00"/><rect x="648" y="173" width="3" height="9" fill="#008000"/><rect x="657" y="167" width="1" height="11" fill="#ffffff"/><rect x="655" y="168" width="5" height="10" fill="#ffffff"/><rect x="665" y="168" width="1" height="24" fill="#ffffff"/><rect x="663" y="174" width="5" height="14" fill="#ffffff"/><rect x="673" y="148" width="1" height="37" fill="#00ff00"/><rect x="671" y="160" width="5" height="25" fill="#00ff00"/><rect x="672" y="161" width="3" height="23" fill="#008000"/><rect x="681" y="162" width="1" height="14" fill="#ffffff"/><rect x="679" y="162" width="5" height="10" fill="#ffffff"/><rect x="689" y="163" width="1" height="13" fill="#00ff00"/><rect x="687" y="163" width="5" height="10" fill="#00ff00"/><rect x="688" y="164" width="3" height="8" fill="#008000"/><rect x="697" y="155" width="1" height="13" fill="#00ff00"/><rect x="695" y="155" width="5" height="9" fill="#00ff00"/><rect x="696" y="156" width="3" height="7" fill="#008000"/><rect x="705" y="134" width="1" height="23" fill="#00ff00"/><rect x="703" y="147" width="5" height="10" fill="#00ff00"/><rect x="704" y="148" width="3" height="8" fill="#008000"/><rect x="713" y="140" width="1" height="12" fill="#00ff00"/><rect x="711" y="147" width="5" height="1" fill="#00ff00"/><rect x="721" y="145" width="1" height="23" fill="#ffffff"/><rect x="719" y="145" width="5" height="23" fill="#ffffff"/><rect x="729" y="164" width="1" height="27" fill="#ffffff"/><rect x="727" y="168" width="5" height="20" fill="#ffffff"/><rect x="737" y="182" width="1" height="15" fill="#00ff00"/><rect x="735" y="182" width="5" height="8" fill="#00ff00"/><rect x="736" y="183" width="3" height="6" fill="#008000"/><rect x="745" y="168" width="1" height="16" fill="#00ff00"/><rect x="743" y="171" width="5" height="12" fill="#00ff00"/><rect x="744" y="172" width="3" height="10" fill="#008000"/><rect x="753" y="163" width="1" height="17" fill="#ffffff"/><rect x="751" y="170" width="5" height="8" fill="#ffffff"/><rect x="761" y="172" width="1" height="25" fill="#00ff00"/><rect x="759" y="172" width="5" height="6" fill="#00ff00"/><rect x="760" y="173" width="3" height="4" fill="#008000"/><rect x="769" y="153" width="1" height="15" fill="#00ff00"/><rect x="767" y="160" width="5" height="8" fill="#00ff00"/><rect x="768" y="161" width="3" height="6" fill="#008000"/><rect x="777" y="149" width="1" height="18" fill="#00ff00"/><rect x="775" y="149" width="5" height="7" fill="#00ff00"/><rect x="776" y="150" width="3" height="5" fill="#008000"/><rect x="785" y="152" width="1" height="16" fill="#ffffff"/><rect x="783" y="152" width="5" height="16" fill="#ffffff"/><rect x="793" y="157" width="1" height="10" fill="#00ff00"/><rect x="791" y="160" width="5" height="7" fill="#00ff00"/><rect x="792" y="161" width="3" height="5" fill="#008000"/><rect x="801" y="156" width="1" height="12" fill="#00ff00"/><rect x="799" y="159" width="5" height="3" fill="#00ff00"/><rect x="800" y="160" width="3" height="1" fill="#008000"/><rect x="809" y="140" width="1" height="18" fill="#00ff00"/><rect x="807" y="146" width="5" height="12" fill="#00ff00"/><rect x="808" y="147" width="3" height="10" fill="#008000"/><rect x="817" y="132" width="1" height="12" fill="#00ff00"/><rect x="815" y="133" width="5" height="11" fill="#00ff00"/><rect x="816" y="134" width="3" height="9" fill="#008000"/><rect x="825" y="125" width="1" height="23" fill="#00ff00"/><rect x="823" y="130" width="5" height="9" fill="#00ff00"/><rect x="824" y="131" width="3" height="7" fill="#008000"/><rect x="833" y="126" width="1" height="15" fill="#00ff00"/><rect x="831" y="128" width="5" height="4" fill="#00ff00"/><rect x="832" y="129" width="3" height="2" fill="#008000"/><rect x="841" y="98" width="1" height="32" fill="#00ff00"/><rect x="839" y="98" width="5" height="29" fill="#00ff00"/><rect x="840" y="99" width="3" height="27" fill="#008000"/><rect x="849" y="76" width="1" height="22" fill="#00ff00"/><rect x="847" y="84" width="5" height="14" fill="#00ff00"/><rect x="848" y="85" width="3" height="12" fill="#008000"/><rect x="857" y="83" width="1" height="12" fill="#ffffff"/><rect x="855" y="83" width="5" height="4" fill="#ffffff"/><rect x="865" y="86" width="1" height="21" fill="#ffffff"/><rect x="863" y="87" width="5" height="2" fill="#ffffff"/><rect x="873" y="75" width="1" height="18" fill="#ffffff"/><rect x="871" y="86" width="5" height="7" fill="#ffffff"/><rect x="881" y="71" width="1" height="19" fill="#00ff00"/><rect x="879" y="71" width="5" height="19" fill="#00ff00"/><rect x="880" y="72" width="3" height="17" fill="#008000"/><rect x="889" y="61" width="1" height="22" fill="#00ff00"/><rect x="887" y="64" width="5" height="11" fill="#00ff00"/><rect x="888" y="65" width="3" height="9" fill="#008000"/><rect x="897" y="55" width="1" height="20" fill="#00ff00"/><rect x="895" y="55" width="5" height="7" fill="#00ff00"/><rect x="896" y="56" width="3" height="5" fill="#008000"/><rect x="905" y="41" width="1" height="28" fill="#ffffff"/><rect x="903" y="49" width="5" height="16" fill="#ffffff"/><rect x="913" y="56" width="1" height="18" fill="#ffffff"/><rect x="911" y="64" width="5" height="8" fill="#ffffff"/><rect x="921" y="63" width="1" height="17" fill="#ffffff"/><rect x="919" y="68" width="5" height="1" fill="#ffffff"/><rect x="929" y="50" width="1" height="26" fill="#00ff00"/><rect x="927" y="69" width="5" height="3" fill="#00ff00"/><rect x="928" y="70" width="3" height="1" fill="#008000"/><rect x="937" y="31" width="1" height="42" fill="#00ff00"/><rect x="935" y="35" width="5" height="38" fill="#00ff00"/><rect x="936" y="36" width="3" height="36" fill="#008000"/><rect x="945" y="33" width="1" height="13" fill="#ffffff"/><rect x="943" y="37" width="5" height="9" fill="#ffffff"/></g>
<rect x="2" y="412" width="945" height="1" fill="#ffffff"/>
<rect x="1" y="577" width="946" height="1" fill="#0000ff"/>
<path d="M0 621.5h1M1 620.5h1M2 619.5h2M4 618.5h1M5 617.5h1M6 616.5h1M7 615.5h2M9 614.5h1M10 613.5h1M11 612.5h1M12 611.5h2M14 610.5h1M15 609.5h1M16 608.5h1M17 607.5h2M19 606.5h1M20 605.5h1M21 604.5h1M22 603.5h2M24 602.5h1M25 601.5h1M26 600.5h1M27 599.5h2M29 598.5h1M30 597.5h1M31 596.5h2M33 595.5h1M34 594.5h1M35 593.5h2M37 592.5h1M38 591.5h1M39 590.5h2M41 589.5h1M42 588.5h1M43 587.5h2M45 586.5h1M46 585.5h1M47 584.5h2M49 583.5h1M50 582.5h1M51 581.5h1M52 580.5h2M54 579.5h1M55 578.5h1M56 577.5h1M57 576.5h2M59 575.5h1M60 574.5h1M61 573.5h2M63 572.5h1M64 571.5h1M65 570.5h1M66 569.5h2M68 568.5h1M69 567.5h1M70 566.5h1M71 565.5h2M73 564.5h1M74 563.5h1M75 562.5h2M77 561.5h1M78 560.5h1M79 559.5h2M81 558.5h1M82 557.5h2M84 556.5h1M85 555.5h1M86 554.5h2M88 553.5h1M89 552.5h1M90 551.5h2M92 550.5h1M93 549.5h2M95 548.5h1M96 547.5h1M97 546.5h2M99 545.5h1M100 544.5h2M102 543.5h2M104 542.5h2M106 541.5h2M108 540.5h1M109 539.5h2M111 538.5h2M113 537.5h2M115 536.5h1M116 535.5h2M118 534.5h2M120 533.5h2M122 532.5h2M124 531.5h2M126 530.5h2M128 529.5h2M130 528.5h2M132 527.5h2M134 526.5h2M136 525.5h2M138 524.5h4M142 523.5h7M149 522.5h6M155 521.5h3M158 521.5h15M173 521.5h3M176 522.5h4M180 523.5h4M184 524.5h4M188 525.5h4M192 526.5h1M193 526.5h1M194 527.5h2M196 528.5h2M198 529.5h2M200 530.5h2M202 531.5h2M204 532.5h2M206 533.5h1M207 534.5h2M209 535.5h2M211 536.5h2M213 537.5h2M215 538.5h2M217 539.5h1M218 540.5h2M220 541.5h1M221 542.5h2M223 543.5h1M224 544.5h2M226 545.5h1M227 546.5h2M229 547.5h1M230 548.5h1M231 549.5h2M233 550.5h1M234 551.5h2M236 552.5h1M237 553.5h2M239 554.5h1M240 555.5h2M242 556.5h1M243 557.5h2M245 558.5h1M246 559.5h1M247 560.5h2M249 561.5h1M250 562.5h1M251 563.5h2M253 564.5h1M254 565.5h1M255 566.5h2M257 567.5h1M258 568.5h2M260 569.5h1M261 570.5h1M262 571.5h2M264 572.5h1M265 573.5h1M266 574.5h2M268 575.5h1M269 576.5h1M270 577.5h2M272 578.5h1M273 579.5h1M274 580.5h2M276 581.5h1M277 582.5h1M278 583.5h2M280 584.5h1M281 585.5h1M282 586.5h1M283 587.5h2M285 588.5h1M286 589.5h1M287 590.5h2M289 591.5h1M290 592.5h1M291 593.5h1M292 594.5h2M294 595.5h1M295 596.5h1M296 597.5h2M298 598.5h1M299 599.5h1M300 600.5h1M301 601.5h2M303 602.5h1M304 603.5h1M305 604.5h2M307 605.5h1M308 606.5h1M309 607.5h2M311 608.5h1M312 609.5h2M314 610.5h1M315 611.5h1M316 612.5h2M318 613.5h1M319 614.5h1M320 615.5h2M322 616.5h2M324 617.5h2M326 618.5h2M328 619.5h2M330 620.5h2M332 621.5h2M334 622.5h1M335 622.5h2M337 623.5h3M340 624.5h4M344 625.5h3M347 626.5h3M350 627.5h1M351 627.5h5M356 628.5h8M364 629.5h3M367 629.5h3M370 628.5h4M374 627.5h4M378 626.5h4M382 625.5h4M386 624.5h1M387 624.5h2M389 623.5h2M391 622.5h3M394 621.5h2M396 620.5h3M399 619.5h3M402 618.5h2M404 617.5h3M407 616.5h2M409 615.5h1M410 615.5h2M412 614.5h2M414 613.5h2M416 612.5h2M418 611.5h2M420 610.5h2M422 609.5h2M424 608.5h2M426 607.5h2M428 606.5h2M430 605.5h2M432 604.5h2M434 603.5h2M436 602.5h2M438 601.5h3M441 600.5h2M443 599.5h3M446 598.5h2M448 597.5h3M451 596.5h2M453 595.5h3M456 594.5h2M458 593.5h1M459 593.5h2M461 592.5h2M463 591.5h3M466 590.5h2M468 589.5h3M471 588.5h3M474 587.5h2M476 586.5h3M479 585.5h2M481 584.5h1M482 584.5h2M484 583.5h2M486 582.5h3M489 581.5h2M491 580.5h2M493 579.5h3M496 578.5h2M498 577.5h3M501 576.5h2M503 575.5h2M505 574.5h1M506 574.5h1M507 573.5h2M509 572.5h1M510 571.5h1M511 570.5h2M513 569.5h1M514 568.5h2M516 567.5h1M517 566.5h1M518 565.5h2M520 564.5h1M521 563.5h1M522 562.5h2M524 561.5h1M525 560.5h2M527 559.5h1M528 558.5h1M529 557.5h2M531 556.5h1M532 555.5h2M534 554.5h1M535 553.5h1M536 552.5h2M538 551.5h1M539 550.5h1M540 549.5h2M542 548.5h1M543 547.5h1M544 546.5h2M546 545.5h1M547 544.5h1M548 543.5h1M549 542.5h2M551 541.5h1M552 540.5h1M553 539.5h2M555 538.5h1M556 537.5h1M557 536.5h2M559 535.5h1M560 534.5h1M561 533.5h1M562 532.5h1M563 531.5h2M565 530.5h1M566 529.5h1M567 528.5h1M568 527.5h1M569 526.5h2M571 525.5h1M572 524.5h1M573 523.5h1M574 522.5h1M575 521.5h2M577 520.5h1M578 519.5h1M579 518.5h1M580 517.5h2M582 516.5h1M583 515.5h1M584 514.5h2M586 513.5h1M587 512.5h2M589 511.5h1M590 510.5h2M592 509.5h1M593 508.5h1M594 507.5h2M596 506.5h1M597 505.5h2M599 504.5h1M600 503.5h2M602 502.5h1M603 501.5h1M604 500.5h2M606 499.5h1M607 498.5h2M609 497.5h2M611 496.5h1M612 495.5h2M614 494.5h2M616 493.5h1M617 492.5h2M619 491.5h2M621 490.5h1M622 489.5h2M624 488.5h2M626 487.5h2M628 486.5h2M630 485.5h2M632 484.5h2M634 483.5h2M636 482.5h2M638 481.5h2M640 480.5h2M642 479.5h2M644 478.5h2M646 477.5h2M648 476.5h2M650 475.5h2M652 474.5h2M654 473.5h2M656 472.5h3M659 471.5h2M661 470.5h2M663 469.5h3M666 468.5h2M668 467.5h2M670 466.5h3M673 465.5h2M675 464.5h2M677 463.5h1M678 463.5h2M680 462.5h3M683 461.5h3M686 460.5h2M688 459.5h3M691 458.5h3M694 457.5h3M697 456.5h3M700 455.5h2M702 454.5h3M705 453.5h1M706 453.5h2M708 452.5h2M710 451.5h3M713 450.5h2M715 449.5h2M717 448.5h3M720 447.5h2M722 446.5h1M723 446.5h4M727 445.5h8M735 444.5h7M742 443.5h8M750 442.5h3M753 442.5h24M777 442.5h31M808 442.5h9M817 441.5h17M834 440.5h8M842 440.5h5M847 439.5h9M856 438.5h8M864 437.5h4M868 437.5h4M872 436.5h7M879 435.5h6M885 434.5h7M892 433.5h3M895 433.5h13M908 432.5h11M919 432.5h14M933 431.5h14" fill="none" stroke="#0000ff" stroke-width="1" clip-path="url(#cpDashDot2)"/>
<g fill="none" stroke-width="1" clip-path="url(#cpInd)"><path d="M1.5 536v1M2.5 535v1M3.5 533v2M4.5 532v1M5.5 531v1M6.5 530v1M7.5 528v2M8.5 527v1M9.5 526v1M10.5 525v1M11.5 523v2M12.5 522v1M13.5 521v1M14.5 520v1M15.5 518v2M16.5 517v1M17.5 516v1M18.5 515v1M19.5 514v1M20.5 513v1M21.5 511v2M22.5 510v1M23.5 509v1M24.5 508v1M25 507.5h1M26 506.5h1M27 505.5h1M28 504.5h2M30 503.5h1M31 502.5h1M32 501.5h1M33 500.5h1M34 499.5h1M35 498.5h1M36 497.5h2M38 496.5h1M39 495.5h1M40 494.5h1M41 493.5h1M42 492.5h2M44 491.5h1M45 490.5h1M46 489.5h2M48 488.5h1M49 487.5h1M50 486.5h1M51 485.5h1M52 484.5h1M53 483.5h1M54 482.5h1M55 481.5h1M56 480.5h1M57 479.5h1M58 478.5h1M59 477.5h1M60 476.5h2M62 475.5h1M63 474.5h1M64 473.5h1M65 472.5h1M66 471.5h2M68 470.5h2M70 469.5h1M71 468.5h2M73 467.5h2M75 466.5h3M78 465.5h2M80 464.5h1M81 464.5h5M86 463.5h3M89 463.5h5M94 464.5h3M97 464.5h3M100 465.5h4M104 466.5h1M105 466.5h2M107 467.5h2M109 468.5h2M111 469.5h2M113 470.5h2M115 471.5h2M117 472.5h2M119 473.5h2M121 474.5h2M123 475.5h2M125 476.5h2M127 477.5h2M129 478.5h2M131 479.5h2M133 480.5h2M135 481.5h2M137 482.5h3M140 483.5h4M144 484.5h1M145 484.5h2M147 485.5h3M150 486.5h2M152 487.5h1M153 487.5h1M154 488.5h1M155 489.5h1M156 490.5h2M158 491.5h1M159 492.5h1M160 493.5h1M161.5 494v1M162.5 495v2M163.5 497v2M164.5 499v1M165.5 500v2M166.5 502v1M167.5 503v2M168.5 505v2M169.5 507v1M170.5 508v2M171.5 510v2M172.5 512v1M173.5 513v2M174.5 515v1M175.5 516v2M176.5 518v2M177.5 520v1M178.5 521v2M179.5 523v2M180.5 525v1M181.5 526v2M182.5 528v1M183.5 529v2M184.5 531v2M185.5 533v1M186.5 534v2M187.5 536v2M188.5 538v1M189.5 539v2M190.5 541v1M191.5 542v2M192.5 544v2M193.5 546v1M194.5 547v2M195.5 549v2M196.5 551v2M197.5 553v1M198.5 554v2M199.5 556v2M200.5 558v2M201.5 560v1M202.5 561v2M203.5 563v2M204.5 565v2M205.5 567v2M206.5 569v2M207.5 571v2M208.5 573v2M209.5 575v1M210.5 576v2M211.5 578v2M212.5 580v1M213.5 581v2M214.5 583v1M215.5 584v2M216.5 586v2M217.5 588v1M218.5 589v2M219.5 591v2M220.5 593v1M221.5 594v2M222.5 596v1M223.5 597v2M224.5 599v2M225.5 601v1M226.5 602v2M227.5 604v1M228.5 605v1M229.5 606v2M230.5 608v1M231.5 609v1M232.5 610v2M233.5 612v1M234.5 613v2M235.5 615v1M236.5 616v2M237.5 618v1M238.5 619v2M239.5 621v1M240.5 622v2M241.5 624v1M242.5 625v2M243.5 627v2M244.5 629v1M245.5 630v2M246.5 632v1M247.5 633v2M248.5 635v2M249.5 637v1M250.5 638v2M251.5 640v1M252.5 641v2M253.5 643v1M254.5 644v2M255.5 646v1M256.5 647v2M257.5 649v1M258.5 650v2M259.5 652v1M260.5 653v2M261.5 655v1M262.5 656v2M263.5 658v1M264.5 659v2M265.5 661v1M266.5 662v2M267.5 664v1M268.5 665v2M269.5 667v1M270.5 668v2M271.5 670v1M272.5 671v2M273.5 673v1M274.5 674v2M275.5 676v2M276.5 678v1M277.5 679v2M278.5 681v1M279.5 682v2M280.5 684v2M281.5 686v1M282.5 687v2M283.5 689v1M284.5 690v2M285.5 692v1M286.5 693v2M287.5 695v1M288.5 696v2M289.5 698v1M290.5 699v1M291.5 700v1M292.5 701v1M293.5 702v2M294.5 704v1M295.5 705v1M296.5 706v1M297 707.5h1M298 708.5h2M300 709.5h2M302 710.5h1M303 711.5h2M305 712.5h5M310 711.5h3M313 711.5h2M315 710.5h2M317 709.5h2M319 708.5h2M321 707.5h2M323 706.5h2M325 705.5h2M327 704.5h2M329 703.5h1M330 702.5h2M332 701.5h1M333 700.5h1M334 699.5h2M336 698.5h1M337 697.5h1M338 696.5h1M339 695.5h1M340 694.5h2M342 693.5h1M343 692.5h1M344 691.5h1M345.5 690v1M346.5 689v1M347.5 688v1M348.5 687v1M349.5 685v2M350.5 684v1M351.5 683v1M352.5 682v1M353.5 681v1M354.5 680v1M355.5 679v1M356.5 678v1M357.5 676v2M358.5 675v1M359.5 674v1M360.5 673v1M361.5 672v1M362.5 670v2M363.5 669v1M364.5 668v1M365.5 666v2M366.5 665v1M367.5 664v1M368.5 662v2M369.5 661v1M370.5 659v2M371.5 657v2M372.5 656v1M373.5 654v2M374.5 653v1M375.5 651v2M376.5 649v2M377.5 648v1M378.5 646v2M379.5 645v1M380.5 643v2M381.5 642v1M382.5 640v2M383.5 639v1M384.5 637v2M385.5 636v1M386.5 634v2M387.5 632v2M388.5 630v2M389.5 629v1M390.5 627v2M391.5 625v2M392.5 623v2M393.5 622v1M394.5 620v2M395.5 618v2M396.5 616v2M397.5 614v2M398.5 612v2M399.5 610v2M400.5 608v2M401.5 606v2M402.5 604v2M403.5 602v2M404.5 600v2M405.5 598v2M406.5 596v2M407.5 594v2M408.5 592v2M409.5 591v1M409.5 590v1M410.5 588v2M411.5 586v2M412.5 584v2M413.5 582v2M414.5 580v2M415.5 578v2M416.5 576v2M417.5 575v1M418.5 573v2M419.5 571v2M420.5 569v2M421.5 567v2M422.5 565v2M423.5 563v2M424.5 561v2M425.5 560v1M426.5 558v2M427.5 557v1M428.5 555v2M429.5 554v1M430.5 552v2M431.5 551v1M432.5 549v2M433.5 548v1M434.5 547v1M435.5 545v2M436.5 544v1M437.5 543v1M438.5 542v1M439.5 540v2M440.5 539v1M441.5 538v1M442.5 537v1M443.5 535v2M444.5 534v1M445.5 533v1M446.5 532v1M447.5 530v2M448.5 529v1M449 528.5h1M450 527.5h1M451 526.5h1M452 525.5h1M453 524.5h1M454 523.5h1M455 522.5h1M456 521.5h1M457 520.5h1M458 519.5h1M459 518.5h1M460 517.5h2M462 516.5h1M463 515.5h1M464 514.5h1M465 513.5h2M467 512.5h2M469 511.5h2M471 510.5h2M473 509.5h2M475 508.5h2M477 507.5h2M479 506.5h2M481 505.5h2M483 504.5h2M485 503.5h2M487 502.5h2M489 501.5h1M490 500.5h2M492 499.5h1M493 498.5h1M494 497.5h2M496 496.5h1M497 495.5h1M498 494.5h2M500 493.5h1M501 492.5h1M502 491.5h2M504 490.5h1M505 489.5h1M506 488.5h2M508 487.5h2M510 486.5h1M511 485.5h2M513 484.5h2M515 483.5h2M517 482.5h2M519 481.5h2M521 480.5h2M523 479.5h2M525 478.5h2M527 477.5h2M529 476.5h2M531 475.5h2M533 474.5h2M535 473.5h2M537 472.5h3M540 471.5h4M544 470.5h1M545 470.5h8M553 470.5h5M558 469.5h3M561 469.5h3M564 468.5h4M568 467.5h1M569 467.5h2M571 466.5h2M573 465.5h2M575 464.5h2M577 463.5h1M578 462.5h2M580 461.5h1M581 460.5h1M582 459.5h2M584 458.5h1M585 457.5h1M586 456.5h1M587 455.5h1M588 454.5h2M590 453.5h1M591 452.5h1M592 451.5h1M593 450.5h1M594 449.5h1M595 448.5h1M596 447.5h2M598 446.5h1M599 445.5h1M600 444.5h1M601 443.5h1M602 442.5h2M604 441.5h1M605 440.5h1M606 439.5h2M608 438.5h1M609 437.5h1M610 436.5h2M612 435.5h1M613 434.5h1M614 433.5h2M616 432.5h1M617 431.5h2M619 430.5h2M621 429.5h2M623 428.5h2M625 427.5h8M633 427.5h5M638 428.5h3M641 428.5h5M646 429.5h3M649 429.5h8M657 429.5h5M662 430.5h3M665 430.5h8M673 430.5h5M678 431.5h3M681 431.5h8M689 431.5h8M697 431.5h3M700 430.5h4M704 429.5h1M705 429.5h3M708 428.5h4M712 427.5h1M713 427.5h5M718 426.5h3M721 426.5h3M724 427.5h4M728 428.5h1M729 428.5h2M731 429.5h3M734 430.5h2M736 431.5h1M737 431.5h2M739 432.5h3M742 433.5h2M744 434.5h1M745 434.5h2M747 435.5h2M749 436.5h2M751 437.5h2M753 438.5h3M756 439.5h4M760 440.5h1M761 440.5h5M766 441.5h3M769 441.5h5M774 440.5h3M777 440.5h8M785 440.5h8M793 440.5h3M796 441.5h4M800 442.5h1M801 442.5h5M806 443.5h3M809 443.5h8M817 443.5h5M822 442.5h3M825 442.5h5M830 441.5h3M833 441.5h8M841 441.5h8M849 441.5h8M857 441.5h5M862 440.5h3M865 440.5h5M870 439.5h3M873 439.5h2M875 438.5h3M878 437.5h2M880 436.5h1M881 436.5h2M883 435.5h2M885 434.5h2M887 433.5h2M889 432.5h2M891 431.5h3M894 430.5h2M896 429.5h1M897 429.5h2M899 428.5h3M902 427.5h2M904 426.5h1M905 426.5h5M910 425.5h3M913 425.5h8M921 425.5h8M929 425.5h5M934 424.5h3M937 424.5h5M942 423.5h4" stroke="#008080"/><path d="M1.5 525v1M2.5 524v1M3.5 523v1M4.5 522v1M5.5 520v2M6.5 519v1M7.5 518v1M8.5 517v1M9 516.5h1M10 515.5h1M11 514.5h1M12 513.5h1M13 512.5h1M14 511.5h1M15 510.5h1M16 509.5h1M17 508.5h1M18 507.5h1M19 506.5h1M20 505.5h1M21 504.5h1M22 503.5h1M23 502.5h1M24 501.5h1M25 500.5h1M26 499.5h2M28 498.5h1M29 497.5h1M30 496.5h2M32 495.5h1M33 494.5h1M34 493.5h2M36 492.5h1M37 491.5h1M38 490.5h2M40 489.5h1M41 488.5h1M42 487.5h2M44 486.5h1M45 485.5h1M46 484.5h2M48 483.5h1M49 482.5h1M50 481.5h1M51 480.5h1M52 479.5h1M53 478.5h1M54 477.5h1M55 476.5h1M56 475.5h1M57 474.5h1M58 473.5h1M59 472.5h1M60 471.5h2M62 470.5h1M63 469.5h1M64 468.5h1M65 467.5h2M67 466.5h2M69 465.5h2M71 464.5h2M73 463.5h3M76 462.5h4M80 461.5h1M81 461.5h5M86 462.5h3M89 462.5h3M92 463.5h4M96 464.5h1M97 464.5h2M99 465.5h2M101 466.5h2M103 467.5h2M105 468.5h2M107 469.5h2M109 470.5h2M111 471.5h2M113 472.5h2M115 473.5h2M117 474.5h2M119 475.5h2M121 476.5h2M123 477.5h2M125 478.5h2M127 479.5h2M129 480.5h3M132 481.5h4M136 482.5h1M137 482.5h5M142 483.5h3M145 483.5h2M147 484.5h3M150 485.5h2M152 486.5h1M153.5 486v1M154.5 487v1M155.5 488v2M156.5 490v1M157.5 491v1M158.5 492v1M159.5 493v2M160.5 495v1M161.5 496v1M162.5 497v2M163.5 499v2M164.5 501v2M165.5 503v1M166.5 504v2M167.5 506v2M168.5 508v2M169.5 510v1M170.5 511v2M171.5 513v2M172.5 515v2M173.5 517v1M174.5 518v2M175.5 520v2M176.5 522v2M177.5 524v1M178.5 525v2M179.5 527v2M180.5 529v2M181.5 531v2M182.5 533v2M183.5 535v2M184.5 537v2M185.5 539v2M186.5 541v2M187.5 543v2M188.5 545v2M189.5 547v2M190.5 549v2M191.5 551v2M192.5 553v2M193.5 555v1M194.5 556v2M195.5 558v2M196.5 560v2M197.5 562v1M198.5 563v2M199.5 565v2M200.5 567v2M201.5 569v1M202.5 570v2M203.5 572v2M204.5 574v2M205.5 576v1M206.5 577v2M207.5 579v2M208.5 581v2M209.5 583v1M210.5 584v2M211.5 586v2M212.5 588v1M213.5 589v2M214.5 591v1M215.5 592v2M216.5 594v2M217.5 596v1M218.5 597v2M219.5 599v1M220.5 600v2M221.5 602v1M222.5 603v2M223.5 605v1M224.5 606v2M225.5 608v1M226.5 609v2M227.5 611v1M228.5 612v2M229.5 614v1M230.5 615v2M231.5 617v1M232.5 618v2M233.5 620v1M234.5 621v2M235.5 623v2M236.5 625v1M237.5 626v2M238.5 628v1M239.5 629v2M240.5 631v2M241.5 633v1M242.5 634v2M243.5 636v2M244.5 638v1M245.5 639v2M246.5 641v1M247.5 642v2M248.5 644v2M249.5 646v1M250.5 647v2M251.5 649v2M252.5 651v1M253.5 652v2M254.5 654v1M255.5 655v2M256.5 657v2M257.5 659v1M258.5 660v2M259.5 662v1M260.5 663v2M261.5 665v1M262.5 666v2M263.5 668v1M264.5 669v2M265.5 671v1M266.5 672v2M267.5 674v2M268.5 676v2M269.5 678v1M270.5 679v2M271.5 681v2M272.5 683v2M273.5 685v1M274.5 686v2M275.5 688v1M276.5 689v2M277.5 691v1M278.5 692v2M279.5 694v1M280.5 695v2M281.5 697v1M282.5 698v1M283.5 699v2M284.5 701v1M285.5 702v1M286.5 703v1M287.5 704v2M288.5 706v1M289 707.5h1M290 708.5h2M292 709.5h2M294 710.5h1M295 711.5h2M297 712.5h5M302 713.5h3M305 713.5h3M308 712.5h4M312 711.5h1M313 711.5h3M316 710.5h4M320 709.5h1M321 709.5h2M323 708.5h2M325 707.5h2M327 706.5h2M329 705.5h1M330 704.5h1M331 703.5h1M332 702.5h2M334 701.5h1M335 700.5h1M336 699.5h1M337 698.5h1M338 697.5h1M339 696.5h1M340 695.5h1M341 694.5h1M342 693.5h1M343 692.5h1M344 691.5h1M345.5 690v1M346.5 689v1M347.5 687v2M348.5 686v1M349.5 685v1M350.5 684v1M351.5 682v2M352.5 681v1M353.5 680v1M354.5 678v2M355.5 677v1M356.5 676v1M357.5 674v2M358.5 673v1M359.5 672v1M360.5 670v2M361.5 669v1M362.5 667v2M363.5 666v1M364.5 665v1M365.5 663v2M366.5 662v1M367.5 661v1M368.5 659v2M369.5 658v1M370.5 656v2M371.5 654v2M372.5 652v2M373.5 650v2M374.5 648v2M375.5 646v2M376.5 644v2M377.5 643v1M378.5 641v2M379.5 639v2M380.5 637v2M381.5 636v1M382.5 634v2M383.5 632v2M384.5 630v2M385.5 629v1M386.5 627v2M387.5 625v2M388.5 623v2M389.5 621v2M390.5 619v2M391.5 617v2M392.5 615v2M393.5 613v2M394.5 611v2M395.5 609v2M396.5 607v2M397.5 605v2M398.5 603v2M399.5 601v2M400.5 599v2M401.5 597v2M402.5 595v2M403.5 593v2M404.5 591v2M405.5 588v3M406.5 586v2M407.5 584v2M408.5 582v2M409.5 581v1M409.5 579v2M410.5 577v2M411.5 575v2M412.5 573v2M413.5 571v2M414.5 569v2M415.5 567v2M416.5 565v2M417.5 564v1M417.5 563v1M418.5 561v2M419.5 559v2M420.5 557v2M421.5 555v2M422.5 553v2M423.5 551v2M424.5 549v2M425.5 548v1M426.5 546v2M427.5 545v1M428.5 543v2M429.5 542v1M430.5 540v2M431.5 539v1M432.5 537v2M433.5 536v1M434.5 534v2M435.5 533v1M436.5 532v1M437.5 530v2M438.5 529v1M439.5 528v1M440.5 526v2M441 525.5h1M442 524.5h1M443 523.5h1M444 522.5h1M445 521.5h1M446 520.5h1M447 519.5h1M448 518.5h1M449 517.5h1M450 516.5h2M452 515.5h1M453 514.5h1M454 513.5h2M456 512.5h1M457 511.5h2M459 510.5h2M461 509.5h2M463 508.5h2M465 507.5h3M468 506.5h4M472 505.5h1M473 505.5h3M476 504.5h4M480 503.5h1M481 503.5h2M483 502.5h2M485 501.5h2M487 500.5h2M489 499.5h1M490 498.5h2M492 497.5h1M493 496.5h1M494 495.5h2M496 494.5h1M497 493.5h1M498 492.5h2M500 491.5h2M502 490.5h1M503 489.5h2M505 488.5h2M507 487.5h2M509 486.5h2M511 485.5h2M513 484.5h2M515 483.5h2M517 482.5h2M519 481.5h2M521 480.5h2M523 479.5h2M525 478.5h2M527 477.5h2M529 476.5h2M531 475.5h3M534 474.5h2M536 473.5h1M537 473.5h5M542 472.5h3M545 472.5h5M550 471.5h3M553 471.5h2M555 470.5h3M558 469.5h2M560 468.5h1M561 468.5h1M562 467.5h2M564 466.5h2M566 465.5h1M567 464.5h2M569 463.5h1M570 462.5h2M572 461.5h1M573 460.5h1M574 459.5h2M576 458.5h1M577 457.5h1M578 456.5h2M580 455.5h1M581 454.5h1M582 453.5h2M584 452.5h1M585 451.5h1M586 450.5h1M587 449.5h1M588 448.5h2M590 447.5h1M591 446.5h1M592 445.5h1M593 444.5h1M594 443.5h1M595 442.5h1M596 441.5h2M598 440.5h1M599 439.5h1M600 438.5h1M601 437.5h1M602 436.5h1M603 435.5h1M604 434.5h2M606 433.5h1M607 432.5h1M608 431.5h1M609 430.5h2M611 429.5h2M613 428.5h2M615 427.5h2M617 426.5h5M622 425.5h3M625 425.5h3M628 426.5h4M632 427.5h1M633 427.5h3M636 428.5h4M640 429.5h1M641 429.5h5M646 430.5h3M649 430.5h8M657 430.5h5M662 431.5h3M665 431.5h5M670 432.5h3M673 432.5h8M681 432.5h5M686 431.5h3M689 431.5h3M692 430.5h4M696 429.5h1M697 429.5h5M702 428.5h3M705 428.5h5M710 427.5h3M713 427.5h5M718 426.5h3M721 426.5h3M724 427.5h4M728 428.5h1M729 428.5h2M731 429.5h2M733 430.5h2M735 431.5h2M737 432.5h2M739 433.5h2M741 434.5h2M743 435.5h2M745 436.5h3M748 437.5h4M752 438.5h1M753 438.5h5M758 439.5h3M761 439.5h5M766 440.5h3M769 440.5h8M777 440.5h8M785 440.5h3M788 441.5h4M792 442.5h1M793 442.5h3M796 443.5h4M800 444.5h1M801 444.5h8M809 444.5h8M817 444.5h5M822 443.5h3M825 443.5h8M833 443.5h8M841 443.5h8M849 443.5h5M854 442.5h3M857 442.5h2M859 441.5h3M862 440.5h2M864 439.5h1M865 439.5h2M867 438.5h3M870 437.5h2M872 436.5h1M873 436.5h2M875 435.5h2M877 434.5h2M879 433.5h2M881 432.5h2M883 431.5h3M886 430.5h2M888 429.5h1M889 429.5h2M891 428.5h3M894 427.5h2M896 426.5h1M897 426.5h3M900 425.5h4M904 424.5h1M905 424.5h5M910 423.5h3M913 423.5h8M921 423.5h8M929 423.5h5M934 422.5h3M937 422.5h9" stroke="#008080"/><path d="M1 517.5h1M2 516.5h1M3 515.5h1M4 514.5h1M5 513.5h1M6 512.5h1M7 511.5h1M8 510.5h1M9 509.5h1M10 508.5h1M11 507.5h1M12 506.5h2M14 505.5h1M15 504.5h1M16 503.5h1M17 502.5h1M18 501.5h1M19 500.5h1M20 499.5h2M22 498.5h1M23 497.5h1M24 496.5h1M25 495.5h1M26 494.5h2M28 493.5h2M30 492.5h1M31 491.5h2M33 490.5h1M34 489.5h2M36 488.5h1M37 487.5h1M38 486.5h2M40 485.5h1M41 484.5h1M42 483.5h2M44 482.5h1M45 481.5h1M46 480.5h2M48 479.5h1M49 478.5h1M50 477.5h1M51 476.5h1M52 475.5h1M53 474.5h1M54 473.5h1M55 472.5h1M56 471.5h1M57 470.5h1M58 469.5h1M59 468.5h1M60 467.5h2M62 466.5h1M63 465.5h1M64 464.5h1M65 463.5h2M67 462.5h3M70 461.5h2M72 460.5h1M73 460.5h8M81 460.5h3M84 461.5h4M88 462.5h1M89 462.5h2M91 463.5h2M93 464.5h2M95 465.5h2M97 466.5h2M99 467.5h3M102 468.5h2M104 469.5h1M105 469.5h2M107 470.5h2M109 471.5h2M111 472.5h2M113 473.5h2M115 474.5h2M117 475.5h2M119 476.5h2M121 477.5h2M123 478.5h3M126 479.5h2M128 480.5h1M129 480.5h8M137 480.5h3M140 481.5h4M144 482.5h1M145 482.5h1M146 483.5h2M148 484.5h2M150 485.5h1M151 486.5h2M153.5 487v1M154.5 488v1M155.5 489v2M156.5 491v1M157.5 492v1M158.5 493v1M159.5 494v2M160.5 496v1M161.5 497v2M162.5 499v2M163.5 501v2M164.5 503v2M165.5 505v2M166.5 507v2M167.5 509v2M168.5 511v2M169.5 513v2M170.5 515v2M171.5 517v2M172.5 519v2M173.5 521v2M174.5 523v2M175.5 525v2M176.5 527v2M177.5 529v1M177.5 530v2M178.5 532v2M179.5 534v2M180.5 536v2M181.5 538v2M182.5 540v2M183.5 542v2M184.5 544v2M185.5 546v1M185.5 547v1M186.5 548v2M187.5 550v2M188.5 552v2M189.5 554v2M190.5 556v2M191.5 558v2M192.5 560v2M193.5 562v1M194.5 563v2M195.5 565v2M196.5 567v2M197.5 569v1M198.5 570v2M199.5 572v2M200.5 574v2M201.5 576v1M202.5 577v2M203.5 579v2M204.5 581v1M205.5 582v2M206.5 584v1M207.5 585v2M208.5 587v2M209.5 589v1M210.5 590v2M211.5 592v2M212.5 594v1M213.5 595v2M214.5 597v1M215.5 598v2M216.5 600v2M217.5 602v1M218.5 603v2M219.5 605v2M220.5 607v1M221.5 608v2M222.5 610v1M223.5 611v2M224.5 613v2M225.5 615v1M226.5 616v2M227.5 618v2M228.5 620v1M229.5 621v2M230.5 623v1M231.5 624v2M232.5 626v2M233.5 628v1M234.5 629v2M235.5 631v2M236.5 633v1M237.5 634v2M238.5 636v1M239.5 637v2M240.5 639v2M241.5 641v1M242.5 642v2M243.5 644v2M244.5 646v1M245.5 647v2M246.5 649v1M247.5 650v2M248.5 652v2M249.5 654v1M250.5 655v2M251.5 657v2M252.5 659v1M253.5 660v2M254.5 662v1M255.5 663v2M256.5 665v2M257.5 667v1M258.5 668v2M259.5 670v2M260.5 672v2M261.5 674v1M262.5 675v2M263.5 677v2M264.5 679v2M265.5 681v1M266.5 682v2M267.5 684v2M268.5 686v1M269.5 687v2M270.5 689v1M271.5 690v2M272.5 692v2M273.5 694v1M274.5 695v2M275.5 697v1M276.5 698v1M277.5 699v2M278.5 701v1M279.5 702v1M280.5 703v2M281 705.5h1M282 706.5h2M284 707.5h1M285 708.5h1M286 709.5h2M288 710.5h1M289 711.5h5M294 712.5h3M297 712.5h5M302 713.5h3M305 713.5h8M313 713.5h3M316 712.5h4M320 711.5h1M321 711.5h2M323 710.5h2M325 709.5h2M327 708.5h2M329 707.5h1M330 706.5h1M331 705.5h1M332 704.5h1M333 703.5h1M334 702.5h1M335 701.5h1M336 700.5h1M337.5 699v1M338.5 698v1M339.5 696v2M340.5 695v1M341.5 694v1M342.5 693v1M343.5 691v2M344.5 690v1M345.5 689v1M346.5 687v2M347.5 686v1M348.5 685v1M349.5 683v2M350.5 682v1M351.5 681v1M352.5 679v2M353.5 678v1M354.5 676v2M355.5 675v1M356.5 674v1M357.5 672v2M358.5 671v1M359.5 670v1M360.5 668v2M361.5 667v1M362.5 665v2M363.5 663v2M364.5 662v1M365.5 660v2M366.5 659v1M367.5 657v2M368.5 655v2M369.5 653v2M370.5 651v2M371.5 649v2M372.5 647v2M373.5 645v2M374.5 643v2M375.5 641v2M376.5 639v2M377.5 637v2M378.5 635v2M379.5 633v2M380.5 631v2M381.5 629v2M382.5 627v2M383.5 625v2M384.5 623v2M385.5 621v2M386.5 619v2M387.5 617v2M388.5 615v2M389.5 613v2M390.5 611v2M391.5 609v2M392.5 607v2M393.5 605v2M394.5 603v2M395.5 601v2M396.5 599v2M397.5 597v2M398.5 595v2M399.5 593v2M400.5 591v2M401.5 590v1M401.5 588v2M402.5 586v2M403.5 584v2M404.5 581v3M405.5 579v2M406.5 576v3M407.5 574v2M408.5 572v2M409.5 571v1M409.5 569v2M410.5 567v2M411.5 565v2M412.5 563v2M413.5 560v3M414.5 558v2M415.5 556v2M416.5 554v2M417.5 553v1M417.5 552v1M418.5 550v2M419.5 548v2M420.5 546v2M421.5 544v2M422.5 542v2M423.5 540v2M424.5 538v2M425.5 537v1M426.5 535v2M427.5 534v1M428.5 532v2M429.5 531v1M430.5 529v2M431.5 528v1M432.5 526v2M433.5 525v1M434.5 524v1M435.5 523v1M436.5 522v1M437.5 520v2M438.5 519v1M439.5 518v1M440.5 517v1M441 516.5h1M442 515.5h1M443 514.5h1M444 513.5h2M446 512.5h1M447 511.5h1M448 510.5h1M449 509.5h2M451 508.5h2M453 507.5h2M455 506.5h2M457 505.5h3M460 504.5h4M464 503.5h1M465 503.5h8M473 503.5h3M476 502.5h4M480 501.5h1M481 501.5h2M483 500.5h2M485 499.5h2M487 498.5h2M489 497.5h2M491 496.5h2M493 495.5h2M495 494.5h2M497 493.5h1M498 492.5h2M500 491.5h2M502 490.5h1M503 489.5h2M505 488.5h2M507 487.5h2M509 486.5h2M511 485.5h2M513 484.5h2M515 483.5h2M517 482.5h2M519 481.5h2M521 480.5h2M523 479.5h3M526 478.5h2M528 477.5h1M529 477.5h3M532 476.5h4M536 475.5h1M537 475.5h3M540 474.5h4M544 473.5h1M545 473.5h2M547 472.5h2M549 471.5h2M551 470.5h2M553 469.5h1M554 468.5h2M556 467.5h2M558 466.5h1M559 465.5h2M561 464.5h1M562 463.5h2M564 462.5h2M566 461.5h1M567 460.5h2M569 459.5h1M570 458.5h1M571 457.5h1M572 456.5h2M574 455.5h1M575 454.5h1M576 453.5h1M577 452.5h1M578 451.5h1M579 450.5h1M580 449.5h2M582 448.5h1M583 447.5h1M584 446.5h1M585 445.5h1M586 444.5h1M587 443.5h1M588 442.5h2M590 441.5h1M591 440.5h1M592 439.5h1M593 438.5h1M594 437.5h1M595 436.5h1M596 435.5h2M598 434.5h1M599 433.5h1M600 432.5h1M601 431.5h1M602 430.5h2M604 429.5h2M606 428.5h1M607 427.5h2M609 426.5h3M612 425.5h4M616 424.5h1M617 424.5h5M622 425.5h3M625 425.5h2M627 426.5h3M630 427.5h2M632 428.5h1M633 428.5h3M636 429.5h4M640 430.5h1M641 430.5h5M646 431.5h3M649 431.5h8M657 431.5h5M662 432.5h3M665 432.5h8M673 432.5h5M678 431.5h3M681 431.5h5M686 430.5h3M689 430.5h5M694 429.5h3M697 429.5h3M700 428.5h4M704 427.5h1M705 427.5h8M713 427.5h8M721 427.5h3M724 428.5h4M728 429.5h1M729 429.5h2M731 430.5h2M733 431.5h2M735 432.5h2M737 433.5h2M739 434.5h3M742 435.5h2M744 436.5h1M745 436.5h3M748 437.5h4M752 438.5h1M753 438.5h8M761 438.5h5M766 439.5h3M769 439.5h5M774 440.5h3M777 440.5h3M780 441.5h4M784 442.5h1M785 442.5h5M790 443.5h3M793 443.5h5M798 444.5h3M801 444.5h5M806 445.5h3M809 445.5h8M817 445.5h8M825 445.5h8M833 445.5h5M838 444.5h3M841 444.5h5M846 443.5h3M849 443.5h3M852 442.5h4M856 441.5h1M857 441.5h2M859 440.5h2M861 439.5h2M863 438.5h2M865 437.5h2M867 436.5h2M869 435.5h2M871 434.5h2M873 433.5h2M875 432.5h3M878 431.5h2M880 430.5h1M881 430.5h2M883 429.5h3M886 428.5h2M888 427.5h1M889 427.5h2M891 426.5h3M894 425.5h2M896 424.5h1M897 424.5h5M902 423.5h3M905 423.5h5M910 422.5h3M913 422.5h8M921 422.5h8M929 422.5h8M937 422.5h9" stroke="#008b8b"/><path d="M1 509.5h1M2 508.5h1M3 507.5h1M4 506.5h2M6 505.5h1M7 504.5h1M8 503.5h1M9 502.5h1M10 501.5h2M12 500.5h2M14 499.5h1M15 498.5h2M17 497.5h1M18 496.5h2M20 495.5h1M21 494.5h1M22 493.5h2M24 492.5h1M25 491.5h1M26 490.5h2M28 489.5h2M30 488.5h1M31 487.5h2M33 486.5h1M34 485.5h2M36 484.5h1M37 483.5h1M38 482.5h2M40 481.5h1M41 480.5h1M42 479.5h2M44 478.5h1M45 477.5h1M46 476.5h2M48 475.5h1M49 474.5h1M50 473.5h1M51 472.5h1M52 471.5h1M53 470.5h1M54 469.5h1M55 468.5h1M56 467.5h1M57 466.5h1M58 465.5h2M60 464.5h1M61 463.5h1M62 462.5h2M64 461.5h1M65 460.5h3M68 459.5h4M72 458.5h1M73 458.5h3M76 459.5h4M80 460.5h1M81 460.5h2M83 461.5h2M85 462.5h2M87 463.5h2M89 464.5h2M91 465.5h3M94 466.5h2M96 467.5h1M97 467.5h2M99 468.5h2M101 469.5h2M103 470.5h2M105 471.5h2M107 472.5h3M110 473.5h2M112 474.5h1M113 474.5h3M116 475.5h4M120 476.5h1M121 476.5h3M124 477.5h4M128 478.5h1M129 478.5h5M134 479.5h3M137 479.5h2M139 480.5h2M141 481.5h2M143 482.5h2M145 483.5h1M146 484.5h2M148 485.5h2M150 486.5h1M151 487.5h2M153.5 488v1M154.5 489v2M155.5 491v1M156.5 492v2M157.5 494v1M158.5 495v2M159.5 497v1M160.5 498v2M161.5 500v2M162.5 502v2M163.5 504v2M164.5 506v2M165.5 508v3M166.5 511v2M167.5 513v2M168.5 515v2M169.5 517v1M169.5 518v2M170.5 520v2M171.5 522v3M172.5 525v2M173.5 527v3M174.5 530v2M175.5 532v3M176.5 535v2M177.5 537v1M177.5 538v2M178.5 540v2M179.5 542v2M180.5 544v2M181.5 546v2M182.5 548v2M183.5 550v2M184.5 552v2M185.5 554v1M185.5 555v1M186.5 556v2M187.5 558v2M188.5 560v2M189.5 562v2M190.5 564v2M191.5 566v2M192.5 568v2M193.5 570v1M194.5 571v2M195.5 573v2M196.5 575v1M197.5 576v2M198.5 578v1M199.5 579v2M200.5 581v2M201.5 583v1M202.5 584v2M203.5 586v1M204.5 587v2M205.5 589v1M206.5 590v2M207.5 592v1M208.5 593v2M209.5 595v1M210.5 596v2M211.5 598v2M212.5 600v2M213.5 602v1M214.5 603v2M215.5 605v2M216.5 607v2M217.5 609v1M218.5 610v2M219.5 612v2M220.5 614v1M221.5 615v2M222.5 617v1M223.5 618v2M224.5 620v2M225.5 622v1M226.5 623v2M227.5 625v2M228.5 627v2M229.5 629v1M230.5 630v2M231.5 632v2M232.5 634v2M233.5 636v1M234.5 637v2M235.5 639v2M236.5 641v1M237.5 642v2M238.5 644v1M239.5 645v2M240.5 647v2M241.5 649v1M242.5 650v2M243.5 652v2M244.5 654v2M245.5 656v1M246.5 657v2M247.5 659v2M248.5 661v2M249.5 663v1M250.5 664v2M251.5 666v2M252.5 668v2M253.5 670v2M254.5 672v2M255.5 674v2M256.5 676v2M257.5 678v1M258.5 679v2M259.5 681v2M260.5 683v1M261.5 684v2M262.5 686v1M263.5 687v2M264.5 689v2M265.5 691v1M266.5 692v2M267.5 694v1M268.5 695v2M269.5 697v1M270.5 698v2M271.5 700v1M272.5 701v2M273 703.5h1M274 704.5h2M276 705.5h1M277 706.5h1M278 707.5h2M280 708.5h1M281 709.5h2M283 710.5h3M286 711.5h2M288 712.5h1M289 712.5h5M294 713.5h3M297 713.5h3M300 714.5h4M304 715.5h1M305 715.5h8M313 715.5h3M316 714.5h4M320 713.5h1M321 713.5h1M322 712.5h2M324 711.5h2M326 710.5h1M327 709.5h2M329.5 708v1M330.5 707v1M331.5 706v1M332.5 705v1M333.5 703v2M334.5 702v1M335.5 701v1M336.5 700v1M337.5 699v1M338.5 697v2M339.5 696v1M340.5 695v1M341.5 693v2M342.5 692v1M343.5 691v1M344.5 689v2M345.5 688v1M346.5 686v2M347.5 685v1M348.5 683v2M349.5 682v1M350.5 680v2M351.5 679v1M352.5 677v2M353.5 676v1M354.5 674v2M355.5 672v2M356.5 671v1M357.5 669v2M358.5 668v1M359.5 666v2M360.5 664v2M361.5 663v1M362.5 661v2M363.5 659v2M364.5 657v2M365.5 656v1M366.5 654v2M367.5 652v2M368.5 650v2M369.5 648v2M370.5 646v2M371.5 644v2M372.5 642v2M373.5 640v2M374.5 638v2M375.5 636v2M376.5 634v2M377.5 633v1M377.5 631v2M378.5 629v2M379.5 627v2M380.5 625v2M381.5 623v2M382.5 621v2M383.5 619v2M384.5 617v2M385.5 616v1M385.5 614v2M386.5 612v2M387.5 610v2M388.5 608v2M389.5 606v2M390.5 604v2M391.5 602v2M392.5 600v2M393.5 599v1M393.5 597v2M394.5 595v2M395.5 592v3M396.5 590v2M397.5 587v3M398.5 585v2M399.5 582v3M400.5 580v2M401.5 579v1M401.5 577v2M402.5 575v2M403.5 572v3M404.5 570v2M405.5 567v3M406.5 565v2M407.5 562v3M408.5 560v2M409.5 559v1M409.5 557v2M410.5 555v2M411.5 553v2M412.5 551v2M413.5 548v3M414.5 546v2M415.5 544v2M416.5 542v2M417.5 541v1M417.5 540v1M418.5 538v2M419.5 536v2M420.5 534v2M421.5 532v2M422.5 530v2M423.5 528v2M424.5 526v2M425.5 525v1M426.5 523v2M427.5 522v1M428.5 521v1M429.5 519v2M430.5 518v1M431.5 517v1M432.5 515v2M433 514.5h1M434 513.5h1M435 512.5h1M436 511.5h2M438 510.5h1M439 509.5h1M440 508.5h1M441 507.5h2M443 506.5h2M445 505.5h2M447 504.5h2M449 503.5h3M452 502.5h4M456 501.5h1M457 501.5h5M462 500.5h3M465 500.5h5M470 501.5h3M473 501.5h5M478 500.5h3M481 500.5h2M483 499.5h3M486 498.5h2M488 497.5h1M489 497.5h2M491 496.5h2M493 495.5h2M495 494.5h2M497 493.5h2M499 492.5h2M501 491.5h2M503 490.5h2M505 489.5h1M506 488.5h2M508 487.5h2M510 486.5h1M511 485.5h2M513 484.5h2M515 483.5h3M518 482.5h2M520 481.5h1M521 481.5h3M524 480.5h4M528 479.5h1M529 479.5h2M531 478.5h3M534 477.5h2M536 476.5h1M537 476.5h2M539 475.5h2M541 474.5h2M543 473.5h2M545 472.5h1M546 471.5h2M548 470.5h1M549 469.5h1M550 468.5h2M552 467.5h1M553 466.5h1M554 465.5h2M556 464.5h1M557 463.5h1M558 462.5h2M560 461.5h1M561 460.5h1M562 459.5h2M564 458.5h1M565 457.5h1M566 456.5h2M568 455.5h1M569 454.5h1M570 453.5h1M571 452.5h1M572 451.5h2M574 450.5h1M575 449.5h1M576 448.5h1M577 447.5h1M578 446.5h1M579 445.5h1M580 444.5h2M582 443.5h1M583 442.5h1M584 441.5h1M585 440.5h1M586 439.5h1M587 438.5h1M588 437.5h1M589 436.5h1M590 435.5h1M591 434.5h1M592 433.5h1M593 432.5h1M594 431.5h2M596 430.5h2M598 429.5h1M599 428.5h2M601 427.5h2M603 426.5h3M606 425.5h2M608 424.5h1M609 424.5h8M617 424.5h3M620 425.5h4M624 426.5h1M625 426.5h2M627 427.5h3M630 428.5h2M632 429.5h1M633 429.5h3M636 430.5h4M640 431.5h1M641 431.5h5M646 432.5h3M649 432.5h8M657 432.5h8M665 432.5h8M673 432.5h5M678 431.5h3M681 431.5h3M684 430.5h4M688 429.5h1M689 429.5h5M694 428.5h3M697 428.5h8M705 428.5h5M710 427.5h3M713 427.5h5M718 428.5h3M721 428.5h3M724 429.5h4M728 430.5h1M729 430.5h2M731 431.5h3M734 432.5h2M736 433.5h1M737 433.5h3M740 434.5h4M744 435.5h1M745 435.5h3M748 436.5h4M752 437.5h1M753 437.5h5M758 438.5h3M761 438.5h3M764 439.5h4M768 440.5h1M769 440.5h3M772 441.5h4M776 442.5h1M777 442.5h5M782 443.5h3M785 443.5h5M790 444.5h3M793 444.5h3M796 445.5h4M800 446.5h1M801 446.5h5M806 447.5h3M809 447.5h8M817 447.5h8M825 447.5h8M833 447.5h3M836 446.5h4M840 445.5h1M841 445.5h2M843 444.5h3M846 443.5h2M848 442.5h1M849 442.5h2M851 441.5h2M853 440.5h2M855 439.5h2M857 438.5h2M859 437.5h2M861 436.5h2M863 435.5h2M865 434.5h2M867 433.5h3M870 432.5h2M872 431.5h1M873 431.5h2M875 430.5h3M878 429.5h2M880 428.5h1M881 428.5h2M883 427.5h3M886 426.5h2M888 425.5h1M889 425.5h3M892 424.5h4M896 423.5h1M897 423.5h5M902 422.5h3M905 422.5h5M910 421.5h3M913 421.5h5M918 420.5h3M921 420.5h5M926 421.5h3M929 421.5h5M934 422.5h3M937 422.5h5M942 423.5h4" stroke="#008b8b"/><path d="M1 501.5h1M2 500.5h2M4 499.5h2M6 498.5h1M7 497.5h2M9 496.5h1M10 495.5h2M12 494.5h2M14 493.5h1M15 492.5h2M17 491.5h1M18 490.5h2M20 489.5h2M22 488.5h1M23 487.5h2M25 486.5h1M26 485.5h2M28 484.5h1M29 483.5h1M30 482.5h2M32 481.5h1M33 480.5h1M34 479.5h2M36 478.5h2M38 477.5h1M39 476.5h2M41 475.5h1M42 474.5h2M44 473.5h1M45 472.5h1M46 471.5h2M48 470.5h1M49 469.5h1M50 468.5h2M52 467.5h1M53 466.5h1M54 465.5h2M56 464.5h1M57 463.5h2M59 462.5h2M61 461.5h2M63 460.5h2M65 459.5h5M70 458.5h3M73 458.5h2M75 459.5h3M78 460.5h2M80 461.5h1M81 461.5h2M83 462.5h2M85 463.5h2M87 464.5h2M89 465.5h2M91 466.5h2M93 467.5h2M95 468.5h2M97 469.5h2M99 470.5h3M102 471.5h2M104 472.5h1M105 472.5h5M110 473.5h3M113 473.5h5M118 474.5h3M121 474.5h2M123 475.5h3M126 476.5h2M128 477.5h1M129 477.5h2M131 478.5h3M134 479.5h2M136 480.5h1M137 480.5h2M139 481.5h2M141 482.5h2M143 483.5h2M145 484.5h1M146 485.5h1M147 486.5h1M148 487.5h2M150 488.5h1M151 489.5h1M152 490.5h1M153.5 491v1M154.5 492v2M155.5 494v2M156.5 496v2M157.5 498v2M158.5 500v2M159.5 502v2M160.5 504v2M161.5 506v2M162.5 508v2M163.5 510v3M164.5 513v2M165.5 515v3M166.5 518v2M167.5 520v3M168.5 523v2M169.5 525v1M169.5 526v2M170.5 528v2M171.5 530v3M172.5 533v3M173.5 536v2M174.5 538v3M175.5 541v3M176.5 544v2M177.5 546v1M177.5 547v2M178.5 549v2M179.5 551v2M180.5 553v2M181.5 555v2M182.5 557v2M183.5 559v2M184.5 561v2M185.5 563v1M186.5 564v2M187.5 566v2M188.5 568v2M189.5 570v1M190.5 571v2M191.5 573v2M192.5 575v2M193.5 577v1M194.5 578v2M195.5 580v2M196.5 582v1M197.5 583v2M198.5 585v1M199.5 586v2M200.5 588v2M201.5 590v1M202.5 591v2M203.5 593v2M204.5 595v2M205.5 597v1M206.5 598v2M207.5 600v2M208.5 602v2M209.5 604v1M210.5 605v2M211.5 607v2M212.5 609v2M213.5 611v1M214.5 612v2M215.5 614v2M216.5 616v2M217.5 618v1M218.5 619v2M219.5 621v2M220.5 623v2M221.5 625v1M222.5 626v2M223.5 628v2M224.5 630v2M225.5 632v1M226.5 633v2M227.5 635v2M228.5 637v2M229.5 639v1M230.5 640v2M231.5 642v2M232.5 644v2M233.5 646v1M234.5 647v2M235.5 649v2M236.5 651v2M237.5 653v1M238.5 654v2M239.5 656v2M240.5 658v2M241.5 660v2M242.5 662v2M243.5 664v2M244.5 666v2M245.5 668v2M246.5 670v2M247.5 672v2M248.5 674v2M249.5 676v1M250.5 677v2M251.5 679v2M252.5 681v2M253.5 683v1M254.5 684v2M255.5 686v2M256.5 688v2M257.5 690v1M258.5 691v2M259.5 693v1M260.5 694v1M261.5 695v2M262.5 697v1M263.5 698v1M264.5 699v2M265 701.5h1M266 702.5h2M268 703.5h1M269 704.5h1M270 705.5h2M272 706.5h1M273 707.5h3M276 708.5h4M280 709.5h1M281 709.5h2M283 710.5h3M286 711.5h2M288 712.5h1M289 712.5h2M291 713.5h3M294 714.5h2M296 715.5h1M297 715.5h2M299 716.5h3M302 717.5h2M304 718.5h1M305 718.5h8M313 718.5h2M315 717.5h3M318 716.5h2M320 715.5h1M321 715.5h1M322 714.5h2M324 713.5h1M325 712.5h1M326 711.5h2M328 710.5h1M329.5 709v1M330.5 708v1M331.5 706v2M332.5 705v1M333.5 704v1M334.5 703v1M335.5 701v2M336.5 700v1M337.5 699v1M338.5 697v2M339.5 695v2M340.5 694v1M341.5 692v2M342.5 691v1M343.5 689v2M344.5 687v2M345.5 686v1M346.5 684v2M347.5 682v2M348.5 680v2M349.5 679v1M350.5 677v2M351.5 675v2M352.5 673v2M353.5 672v1M354.5 670v2M355.5 668v2M356.5 666v2M357.5 665v1M358.5 663v2M359.5 661v2M360.5 659v2M361.5 657v2M362.5 655v2M363.5 653v2M364.5 651v2M365.5 649v2M366.5 647v2M367.5 645v2M368.5 643v2M369.5 642v1M369.5 640v2M370.5 638v2M371.5 636v2M372.5 633v3M373.5 631v2M374.5 628v3M375.5 626v2M376.5 624v2M377.5 623v1M377.5 621v2M378.5 619v2M379.5 617v2M380.5 615v2M381.5 612v3M382.5 610v2M383.5 608v2M384.5 606v2M385.5 605v1M385.5 603v2M386.5 601v2M387.5 599v2M388.5 596v3M389.5 594v2M390.5 591v3M391.5 589v2M392.5 587v2M393.5 586v1M393.5 584v2M394.5 582v2M395.5 579v3M396.5 577v2M397.5 574v3M398.5 572v2M399.5 569v3M400.5 567v2M401.5 566v1M401.5 564v2M402.5 562v2M403.5 559v3M404.5 556v3M405.5 554v2M406.5 551v3M407.5 548v3M408.5 546v2M409.5 545v1M409.5 543v2M410.5 541v2M411.5 539v2M412.5 537v2M413.5 534v3M414.5 532v2M415.5 530v2M416.5 528v2M417.5 527v1M417.5 526v1M418.5 524v2M419.5 522v2M420.5 520v2M421.5 519v1M422.5 517v2M423.5 515v2M424.5 513v2M425 512.5h1M426 511.5h1M427 510.5h1M428 509.5h1M429 508.5h1M430 507.5h1M431 506.5h1M432 505.5h1M433 504.5h1M434 503.5h2M436 502.5h2M438 501.5h1M439 500.5h2M441 499.5h5M446 498.5h3M449 498.5h8M457 498.5h8M465 498.5h5M470 499.5h3M473 499.5h8M481 499.5h5M486 498.5h3M489 498.5h2M491 497.5h2M493 496.5h2M495 495.5h2M497 494.5h2M499 493.5h2M501 492.5h2M503 491.5h2M505 490.5h2M507 489.5h3M510 488.5h2M512 487.5h1M513 487.5h3M516 486.5h4M520 485.5h1M521 485.5h2M523 484.5h2M525 483.5h2M527 482.5h2M529 481.5h1M530 480.5h2M532 479.5h1M533 478.5h1M534 477.5h2M536 476.5h1M537 475.5h1M538 474.5h1M539 473.5h1M540 472.5h1M541 471.5h1M542 470.5h1M543 469.5h1M544 468.5h1M545 467.5h1M546 466.5h1M547 465.5h1M548 464.5h2M550 463.5h1M551 462.5h1M552 461.5h1M553 460.5h1M554 459.5h1M555 458.5h1M556 457.5h2M558 456.5h1M559 455.5h1M560 454.5h1M561 453.5h1M562 452.5h1M563 451.5h1M564 450.5h2M566 449.5h1M567 448.5h1M568 447.5h1M569 446.5h1M570 445.5h1M571 444.5h1M572 443.5h2M574 442.5h1M575 441.5h1M576 440.5h1M577 439.5h1M578 438.5h1M579 437.5h1M580 436.5h2M582 435.5h1M583 434.5h1M584 433.5h1M585 432.5h1M586 431.5h2M588 430.5h2M590 429.5h1M591 428.5h2M593 427.5h2M595 426.5h3M598 425.5h2M600 424.5h1M601 424.5h8M609 424.5h8M617 424.5h2M619 425.5h3M622 426.5h2M624 427.5h1M625 427.5h2M627 428.5h3M630 429.5h2M632 430.5h1M633 430.5h3M636 431.5h4M640 432.5h1M641 432.5h5M646 433.5h3M649 433.5h8M657 433.5h5M662 432.5h3M665 432.5h3M668 431.5h4M672 430.5h1M673 430.5h5M678 429.5h3M681 429.5h8M689 429.5h8M697 429.5h5M702 428.5h3M705 428.5h8M713 428.5h8M721 428.5h3M724 429.5h4M728 430.5h1M729 430.5h3M732 431.5h4M736 432.5h1M737 432.5h3M740 433.5h4M744 434.5h1M745 434.5h3M748 435.5h4M752 436.5h1M753 436.5h2M755 437.5h3M758 438.5h2M760 439.5h1M761 439.5h2M763 440.5h3M766 441.5h2M768 442.5h1M769 442.5h5M774 443.5h3M777 443.5h5M782 444.5h3M785 444.5h5M790 445.5h3M793 445.5h2M795 446.5h3M798 447.5h2M800 448.5h1M801 448.5h5M806 449.5h3M809 449.5h5M814 450.5h3M817 450.5h5M822 449.5h3M825 449.5h5M830 448.5h3M833 448.5h2M835 447.5h2M837 446.5h2M839 445.5h2M841 444.5h1M842 443.5h2M844 442.5h2M846 441.5h1M847 440.5h2M849 439.5h2M851 438.5h2M853 437.5h2M855 436.5h2M857 435.5h2M859 434.5h2M861 433.5h2M863 432.5h2M865 431.5h2M867 430.5h3M870 429.5h2M872 428.5h1M873 428.5h2M875 427.5h3M878 426.5h2M880 425.5h1M881 425.5h5M886 424.5h3M889 424.5h3M892 423.5h4M896 422.5h1M897 422.5h3M900 421.5h4M904 420.5h1M905 420.5h3M908 419.5h4M912 418.5h1M913 418.5h5M918 419.5h3M921 419.5h3M924 420.5h4M928 421.5h1M929 421.5h3M932 422.5h4M936 423.5h1M937 423.5h5M942 424.5h4" stroke="#009090"/><path d="M1 495.5h2M3 494.5h2M5 493.5h2M7 492.5h2M9 491.5h2M11 490.5h2M13 489.5h2M15 488.5h2M17 487.5h1M18 486.5h2M20 485.5h1M21 484.5h1M22 483.5h2M24 482.5h1M25 481.5h1M26 480.5h2M28 479.5h2M30 478.5h1M31 477.5h2M33 476.5h1M34 475.5h2M36 474.5h2M38 473.5h1M39 472.5h2M41 471.5h1M42 470.5h2M44 469.5h2M46 468.5h1M47 467.5h2M49 466.5h1M50 465.5h2M52 464.5h2M54 463.5h1M55 462.5h2M57 461.5h3M60 460.5h4M64 459.5h1M65 459.5h5M70 460.5h3M73 460.5h2M75 461.5h3M78 462.5h2M80 463.5h1M81 463.5h2M83 464.5h3M86 465.5h2M88 466.5h1M89 466.5h2M91 467.5h3M94 468.5h2M96 469.5h1M97 469.5h5M102 470.5h3M105 470.5h5M110 471.5h3M113 471.5h3M116 472.5h4M120 473.5h1M121 473.5h2M123 474.5h2M125 475.5h2M127 476.5h2M129 477.5h2M131 478.5h2M133 479.5h2M135 480.5h2M137 481.5h1M138 482.5h2M140 483.5h2M142 484.5h1M143 485.5h2M145.5 486v1M146.5 487v1M147.5 488v2M148.5 490v1M149.5 491v1M150.5 492v1M151.5 493v2M152.5 495v1M153.5 496v2M154.5 498v2M155.5 500v2M156.5 502v2M157.5 504v2M158.5 506v2M159.5 508v2M160.5 510v2M161.5 512v2M162.5 514v3M163.5 517v2M164.5 519v3M165.5 522v3M166.5 525v3M167.5 528v2M168.5 530v3M169.5 533v1M169.5 534v2M170.5 536v2M171.5 538v2M172.5 540v3M173.5 543v2M174.5 545v3M175.5 548v2M176.5 550v2M177.5 552v1M177.5 553v2M178.5 555v2M179.5 557v2M180.5 559v2M181.5 561v2M182.5 563v2M183.5 565v2M184.5 567v2M185.5 569v1M186.5 570v2M187.5 572v2M188.5 574v2M189.5 576v1M190.5 577v2M191.5 579v2M192.5 581v2M193.5 583v1M194.5 584v2M195.5 586v2M196.5 588v2M197.5 590v1M198.5 591v2M199.5 593v2M200.5 595v2M201.5 597v1M202.5 598v2M203.5 600v2M204.5 602v2M205.5 604v2M206.5 606v2M207.5 608v2M208.5 610v2M209.5 612v1M210.5 613v2M211.5 615v2M212.5 617v2M213.5 619v2M214.5 621v2M215.5 623v2M216.5 625v2M217.5 627v1M218.5 628v2M219.5 630v2M220.5 632v2M221.5 634v1M222.5 635v2M223.5 637v2M224.5 639v2M225.5 641v1M226.5 642v2M227.5 644v2M228.5 646v2M229.5 648v2M230.5 650v2M231.5 652v2M232.5 654v2M233.5 656v2M234.5 658v2M235.5 660v2M236.5 662v2M237.5 664v2M238.5 666v2M239.5 668v2M240.5 670v2M241.5 672v1M242.5 673v2M243.5 675v2M244.5 677v2M245.5 679v2M246.5 681v2M247.5 683v2M248.5 685v2M249.5 687v1M250.5 688v2M251.5 690v1M252.5 691v2M253.5 693v1M254.5 694v2M255.5 696v1M256.5 697v2M257 699.5h1M258 700.5h2M260 701.5h1M261 702.5h1M262 703.5h2M264 704.5h1M265 705.5h3M268 706.5h4M272 707.5h1M273 707.5h2M275 708.5h3M278 709.5h2M280 710.5h1M281 710.5h1M282 711.5h2M284 712.5h2M286 713.5h1M287 714.5h2M289 715.5h2M291 716.5h2M293 717.5h2M295 718.5h2M297 719.5h3M300 720.5h4M304 721.5h1M305 721.5h8M313 721.5h1M314 720.5h2M316 719.5h2M318 718.5h1M319 717.5h2M321 716.5h1M322 715.5h1M323 714.5h1M324 713.5h2M326 712.5h1M327 711.5h1M328 710.5h1M329.5 709v1M330.5 707v2M331.5 706v1M332.5 705v1M333.5 703v2M334.5 702v1M335.5 701v1M336.5 699v2M337.5 698v1M338.5 696v2M339.5 694v2M340.5 692v2M341.5 691v1M342.5 689v2M343.5 687v2M344.5 685v2M345.5 683v2M346.5 681v2M347.5 679v2M348.5 677v2M349.5 675v2M350.5 673v2M351.5 671v2M352.5 669v2M353.5 667v2M354.5 665v2M355.5 663v2M356.5 661v2M357.5 659v2M358.5 657v2M359.5 655v2M360.5 653v2M361.5 651v2M362.5 649v2M363.5 647v2M364.5 645v2M365.5 642v3M366.5 640v2M367.5 638v2M368.5 636v2M369.5 635v1M369.5 633v2M370.5 631v2M371.5 628v3M372.5 625v3M373.5 623v2M374.5 620v3M375.5 617v3M376.5 615v2M377.5 614v1M377.5 612v2M378.5 610v2M379.5 607v3M380.5 605v2M381.5 602v3M382.5 600v2M383.5 597v3M384.5 595v2M385.5 594v1M385.5 592v2M386.5 590v2M387.5 587v3M388.5 585v2M389.5 582v3M390.5 580v2M391.5 577v3M392.5 575v2M393.5 574v1M393.5 572v2M394.5 570v2M395.5 567v3M396.5 564v3M397.5 562v2M398.5 559v3M399.5 556v3M400.5 554v2M401.5 553v1M401.5 551v2M402.5 549v2M403.5 546v3M404.5 544v2M405.5 541v3M406.5 539v2M407.5 536v3M408.5 534v2M409.5 533v1M409.5 531v2M410.5 529v2M411.5 527v2M412.5 525v2M413.5 523v2M414.5 521v2M415.5 519v2M416.5 517v2M417.5 516v1M417.5 515v1M418.5 513v2M419.5 512v1M420.5 510v2M421.5 509v1M422.5 507v2M423.5 506v1M424.5 504v2M425 503.5h1M426 502.5h2M428 501.5h1M429 500.5h1M430 499.5h2M432 498.5h1M433 497.5h3M436 496.5h4M440 495.5h1M441 495.5h8M449 495.5h8M457 495.5h5M462 496.5h3M465 496.5h2M467 497.5h3M470 498.5h2M472 499.5h1M473 499.5h3M476 500.5h4M480 501.5h1M481 501.5h3M484 500.5h4M488 499.5h1M489 499.5h2M491 498.5h3M494 497.5h2M496 496.5h1M497 496.5h2M499 495.5h3M502 494.5h2M504 493.5h1M505 493.5h2M507 492.5h3M510 491.5h2M512 490.5h1M513 490.5h2M515 489.5h2M517 488.5h2M519 487.5h2M521 486.5h1M522 485.5h1M523 484.5h1M524 483.5h2M526 482.5h1M527 481.5h1M528 480.5h1M529 479.5h1M530 478.5h1M531 477.5h1M532 476.5h1M533 475.5h1M534 474.5h1M535 473.5h1M536 472.5h1M537.5 471v1M538.5 470v1M539.5 468v2M540.5 467v1M541.5 466v1M542.5 465v1M543.5 463v2M544.5 462v1M545 461.5h1M546 460.5h1M547 459.5h1M548 458.5h1M549 457.5h1M550 456.5h1M551 455.5h1M552 454.5h1M553 453.5h1M554 452.5h1M555 451.5h1M556 450.5h2M558 449.5h1M559 448.5h1M560 447.5h1M561 446.5h1M562 445.5h2M564 444.5h1M565 443.5h1M566 442.5h2M568 441.5h1M569 440.5h1M570 439.5h1M571 438.5h1M572 437.5h1M573 436.5h1M574 435.5h1M575 434.5h1M576 433.5h1M577 432.5h1M578 431.5h2M580 430.5h2M582 429.5h1M583 428.5h2M585 427.5h3M588 426.5h4M592 425.5h1M593 425.5h5M598 424.5h3M601 424.5h5M606 425.5h3M609 425.5h8M617 425.5h2M619 426.5h3M622 427.5h2M624 428.5h1M625 428.5h2M627 429.5h3M630 430.5h2M632 431.5h1M633 431.5h2M635 432.5h3M638 433.5h2M640 434.5h1M641 434.5h8M649 434.5h3M652 433.5h4M656 432.5h1M657 432.5h5M662 431.5h3M665 431.5h5M670 430.5h3M673 430.5h5M678 429.5h3M681 429.5h8M689 429.5h5M694 430.5h3M697 430.5h5M702 429.5h3M705 429.5h8M713 429.5h5M718 428.5h3M721 428.5h8M729 428.5h3M732 429.5h4M736 430.5h1M737 430.5h2M739 431.5h3M742 432.5h2M744 433.5h1M745 433.5h2M747 434.5h2M749 435.5h2M751 436.5h2M753 437.5h2M755 438.5h2M757 439.5h2M759 440.5h2M761 441.5h3M764 442.5h4M768 443.5h1M769 443.5h5M774 444.5h3M777 444.5h5M782 445.5h3M785 445.5h3M788 446.5h4M792 447.5h1M793 447.5h2M795 448.5h3M798 449.5h2M800 450.5h1M801 450.5h3M804 451.5h4M808 452.5h1M809 452.5h8M817 452.5h3M820 451.5h4M824 450.5h1M825 450.5h2M827 449.5h3M830 448.5h2M832 447.5h1M833 447.5h1M834 446.5h2M836 445.5h2M838 444.5h1M839 443.5h2M841 442.5h1M842 441.5h2M844 440.5h1M845 439.5h1M846 438.5h2M848 437.5h1M849 436.5h2M851 435.5h2M853 434.5h2M855 433.5h2M857 432.5h2M859 431.5h2M861 430.5h2M863 429.5h2M865 428.5h3M868 427.5h4M872 426.5h1M873 426.5h3M876 425.5h4M880 424.5h1M881 424.5h3M884 423.5h4M888 422.5h1M889 422.5h3M892 421.5h4M896 420.5h1M897 420.5h2M899 419.5h3M902 418.5h2M904 417.5h1M905 417.5h8M913 417.5h3M916 418.5h4M920 419.5h1M921 419.5h2M923 420.5h3M926 421.5h2M928 422.5h1M929 422.5h5M934 423.5h3M937 423.5h3M940 424.5h4M944 425.5h2" stroke="#009090"/><path d="M1 489.5h2M3 488.5h2M5 487.5h2M7 486.5h2M9 485.5h2M11 484.5h2M13 483.5h2M15 482.5h2M17 481.5h1M18 480.5h2M20 479.5h1M21 478.5h1M22 477.5h2M24 476.5h1M25 475.5h2M27 474.5h2M29 473.5h2M31 472.5h2M33 471.5h2M35 470.5h3M38 469.5h2M40 468.5h1M41 468.5h2M43 467.5h3M46 466.5h2M48 465.5h1M49 465.5h2M51 464.5h3M54 463.5h2M56 462.5h1M57 462.5h5M62 461.5h3M65 461.5h8M73 461.5h2M75 462.5h3M78 463.5h2M80 464.5h1M81 464.5h3M84 465.5h4M88 466.5h1M89 466.5h5M94 467.5h3M97 467.5h8M105 467.5h2M107 468.5h3M110 469.5h2M112 470.5h1M113 470.5h2M115 471.5h3M118 472.5h2M120 473.5h1M121 473.5h1M122 474.5h2M124 475.5h2M126 476.5h1M127 477.5h2M129 478.5h1M130 479.5h2M132 480.5h1M133 481.5h1M134 482.5h2M136 483.5h1M137 484.5h1M138 485.5h1M139 486.5h1M140 487.5h1M141 488.5h1M142 489.5h1M143 490.5h1M144 491.5h1M145.5 492v1M146.5 493v2M147.5 495v1M148.5 496v1M149.5 497v2M150.5 499v1M151.5 500v1M152.5 501v2M153.5 503v2M154.5 505v2M155.5 507v2M156.5 509v2M157.5 511v2M158.5 513v2M159.5 515v2M160.5 517v2M161.5 519v1M161.5 520v2M162.5 522v2M163.5 524v3M164.5 527v3M165.5 530v2M166.5 532v3M167.5 535v3M168.5 538v2M169.5 540v1M169.5 541v2M170.5 543v2M171.5 545v2M172.5 547v3M173.5 550v2M174.5 552v3M175.5 555v2M176.5 557v2M177.5 559v1M177.5 560v2M178.5 562v2M179.5 564v2M180.5 566v2M181.5 568v2M182.5 570v2M183.5 572v2M184.5 574v2M185.5 576v1M185.5 577v1M186.5 578v2M187.5 580v2M188.5 582v2M189.5 584v2M190.5 586v2M191.5 588v2M192.5 590v2M193.5 592v1M194.5 593v2M195.5 595v2M196.5 597v2M197.5 599v2M198.5 601v2M199.5 603v2M200.5 605v2M201.5 607v1M202.5 608v2M203.5 610v2M204.5 612v2M205.5 614v2M206.5 616v2M207.5 618v2M208.5 620v2M209.5 622v2M210.5 624v2M211.5 626v2M212.5 628v2M213.5 630v2M214.5 632v2M215.5 634v2M216.5 636v2M217.5 638v2M218.5 640v2M219.5 642v2M220.5 644v2M221.5 646v2M222.5 648v2M223.5 650v2M224.5 652v2M225.5 654v2M226.5 656v2M227.5 658v2M228.5 660v2M229.5 662v2M230.5 664v2M231.5 666v2M232.5 668v2M233.5 670v2M234.5 672v2M235.5 674v2M236.5 676v2M237.5 678v2M238.5 680v2M239.5 682v2M240.5 684v2M241.5 686v1M242.5 687v2M243.5 689v1M244.5 690v1M245.5 691v2M246.5 693v1M247.5 694v1M248.5 695v2M249 697.5h1M250 698.5h2M252 699.5h2M254 700.5h1M255 701.5h2M257 702.5h3M260 703.5h4M264 704.5h1M265 704.5h2M267 705.5h2M269 706.5h2M271 707.5h2M273 708.5h1M274 709.5h2M276 710.5h2M278 711.5h1M279 712.5h2M281 713.5h1M282 714.5h2M284 715.5h1M285 716.5h1M286 717.5h2M288 718.5h1M289 719.5h2M291 720.5h3M294 721.5h2M296 722.5h1M297 722.5h3M300 723.5h4M304 724.5h1M305 724.5h5M310 723.5h3M313 723.5h1M314 722.5h2M316 721.5h2M318 720.5h1M319 719.5h2M321.5 718v1M322.5 717v1M323.5 716v1M324.5 715v1M325.5 713v2M326.5 712v1M327.5 711v1M328.5 710v1M329.5 709v1M330.5 707v2M331.5 705v2M332.5 703v2M333.5 702v1M334.5 700v2M335.5 698v2M336.5 696v2M337.5 694v2M338.5 692v2M339.5 690v2M340.5 688v2M341.5 686v2M342.5 684v2M343.5 682v2M344.5 680v2M345.5 678v2M346.5 676v2M347.5 674v2M348.5 672v2M349.5 669v3M350.5 667v2M351.5 665v2M352.5 663v2M353.5 662v1M353.5 660v2M354.5 658v2M355.5 656v2M356.5 654v2M357.5 651v3M358.5 649v2M359.5 647v2M360.5 645v2M361.5 644v1M361.5 642v2M362.5 640v2M363.5 637v3M364.5 635v2M365.5 632v3M366.5 630v2M367.5 627v3M368.5 625v2M369.5 624v1M369.5 622v2M370.5 619v3M371.5 616v3M372.5 613v3M373.5 611v2M374.5 608v3M375.5 605v3M376.5 602v3M377.5 601v1M377.5 599v2M378.5 597v2M379.5 594v3M380.5 591v3M381.5 589v2M382.5 586v3M383.5 583v3M384.5 581v2M385.5 580v1M385.5 578v2M386.5 576v2M387.5 573v3M388.5 570v3M389.5 568v2M390.5 565v3M391.5 562v3M392.5 560v2M393.5 559v1M393.5 557v2M394.5 555v2M395.5 552v3M396.5 549v3M397.5 547v2M398.5 544v3M399.5 541v3M400.5 539v2M401.5 538v1M401.5 536v2M402.5 534v2M403.5 531v3M404.5 529v2M405.5 526v3M406.5 524v2M407.5 521v3M408.5 519v2M409.5 518v1M409.5 517v1M410.5 515v2M411.5 513v2M412.5 511v2M413.5 510v1M414.5 508v2M415.5 506v2M416.5 504v2M417.5 503v1M418.5 502v1M419.5 500v2M420.5 499v1M421.5 498v1M422.5 497v1M423.5 495v2M424.5 494v1M425 493.5h2M427 492.5h3M430 491.5h2M432 490.5h1M433 490.5h8M441 490.5h5M446 491.5h3M449 491.5h3M452 492.5h4M456 493.5h1M457 493.5h2M459 494.5h3M462 495.5h2M464 496.5h1M465 496.5h2M467 497.5h2M469 498.5h2M471 499.5h2M473 500.5h2M475 501.5h3M478 502.5h2M480 503.5h1M481 503.5h5M486 502.5h3M489 502.5h5M494 501.5h3M497 501.5h2M499 500.5h3M502 499.5h2M504 498.5h1M505 498.5h1M506 497.5h2M508 496.5h2M510 495.5h1M511 494.5h2M513 493.5h1M514 492.5h1M515 491.5h1M516 490.5h1M517 489.5h1M518 488.5h1M519 487.5h1M520 486.5h1M521.5 485v1M522.5 484v1M523.5 482v2M524.5 481v1M525.5 480v1M526.5 479v1M527.5 477v2M528.5 476v1M529.5 475v1M530.5 473v2M531.5 472v1M532.5 471v1M533.5 469v2M534.5 468v1M535.5 467v1M536.5 465v2M537.5 464v1M538.5 462v2M539.5 461v1M540.5 460v1M541.5 458v2M542.5 457v1M543.5 456v1M544.5 454v2M545 453.5h1M546 452.5h1M547 451.5h1M548 450.5h1M549 449.5h1M550 448.5h1M551 447.5h1M552 446.5h1M553 445.5h1M554 444.5h1M555 443.5h1M556 442.5h1M557 441.5h1M558 440.5h1M559 439.5h1M560 438.5h1M561 437.5h1M562 436.5h2M564 435.5h1M565 434.5h1M566 433.5h2M568 432.5h1M569 431.5h2M571 430.5h2M573 429.5h2M575 428.5h2M577 427.5h3M580 426.5h4M584 425.5h1M585 425.5h8M593 425.5h8M601 425.5h5M606 426.5h3M609 426.5h5M614 427.5h3M617 427.5h3M620 428.5h4M624 429.5h1M625 429.5h2M627 430.5h2M629 431.5h2M631 432.5h2M633 433.5h5M638 434.5h3M641 434.5h5M646 433.5h3M649 433.5h3M652 432.5h4M656 431.5h1M657 431.5h3M660 430.5h4M664 429.5h1M665 429.5h8M673 429.5h5M678 430.5h3M681 430.5h8M689 430.5h5M694 431.5h3M697 431.5h5M702 430.5h3M705 430.5h3M708 429.5h4M712 428.5h1M713 428.5h3M716 427.5h4M720 426.5h1M721 426.5h8M729 426.5h2M731 427.5h3M734 428.5h2M736 429.5h1M737 429.5h1M738 430.5h2M740 431.5h2M742 432.5h1M743 433.5h2M745 434.5h1M746 435.5h2M748 436.5h2M750 437.5h1M751 438.5h2M753 439.5h2M755 440.5h3M758 441.5h2M760 442.5h1M761 442.5h2M763 443.5h3M766 444.5h2M768 445.5h1M769 445.5h5M774 446.5h3M777 446.5h3M780 447.5h4M784 448.5h1M785 448.5h3M788 449.5h4M792 450.5h1M793 450.5h2M795 451.5h2M797 452.5h2M799 453.5h2M801 454.5h5M806 455.5h3M809 455.5h5M814 454.5h3M817 454.5h1M818 453.5h2M820 452.5h2M822 451.5h1M823 450.5h2M825 449.5h1M826 448.5h2M828 447.5h1M829 446.5h1M830 445.5h2M832 444.5h1M833 443.5h1M834 442.5h2M836 441.5h2M838 440.5h1M839 439.5h2M841 438.5h1M842 437.5h2M844 436.5h2M846 435.5h1M847 434.5h2M849 433.5h2M851 432.5h2M853 431.5h2M855 430.5h2M857 429.5h2M859 428.5h3M862 427.5h2M864 426.5h1M865 426.5h3M868 425.5h4M872 424.5h1M873 424.5h3M876 423.5h4M880 422.5h1M881 422.5h2M883 421.5h3M886 420.5h2M888 419.5h1M889 419.5h3M892 418.5h4M896 417.5h1M897 417.5h5M902 416.5h3M905 416.5h5M910 417.5h3M913 417.5h2M915 418.5h3M918 419.5h2M920 420.5h1M921 420.5h2M923 421.5h3M926 422.5h2M928 423.5h1M929 423.5h5M934 424.5h3M937 424.5h3M940 425.5h4M944 426.5h2" stroke="#009898"/><path d="M1 482.5h2M3 481.5h3M6 480.5h2M8 479.5h1M9 479.5h2M11 478.5h2M13 477.5h2M15 476.5h2M17 475.5h1M18 474.5h2M20 473.5h2M22 472.5h1M23 471.5h2M25 470.5h3M28 469.5h4M32 468.5h1M33 468.5h8M41 468.5h5M46 467.5h3M49 467.5h2M51 466.5h3M54 465.5h2M56 464.5h1M57 464.5h3M60 463.5h4M64 462.5h1M65 462.5h8M73 462.5h5M78 463.5h3M81 463.5h5M86 464.5h3M89 464.5h8M97 464.5h3M100 465.5h4M104 466.5h1M105 466.5h2M107 467.5h3M110 468.5h2M112 469.5h1M113 469.5h1M114 470.5h2M116 471.5h2M118 472.5h1M119 473.5h2M121 474.5h1M122 475.5h1M123 476.5h1M124 477.5h2M126 478.5h1M127 479.5h1M128 480.5h1M129 481.5h1M130 482.5h1M131 483.5h1M132 484.5h1M133 485.5h1M134 486.5h1M135 487.5h1M136 488.5h1M137.5 489v1M138.5 490v1M139.5 491v2M140.5 493v1M141.5 494v1M142.5 495v1M143.5 496v2M144.5 498v1M145.5 499v1M146.5 500v2M147.5 502v1M148.5 503v1M149.5 504v2M150.5 506v1M151.5 507v1M152.5 508v2M153.5 510v1M154.5 511v2M155.5 513v2M156.5 515v2M157.5 517v2M158.5 519v2M159.5 521v2M160.5 523v2M161.5 525v2M162.5 527v2M163.5 529v3M164.5 532v3M165.5 535v2M166.5 537v3M167.5 540v3M168.5 543v2M169.5 545v1M169.5 546v2M170.5 548v2M171.5 550v3M172.5 553v2M173.5 555v3M174.5 558v2M175.5 560v3M176.5 563v2M177.5 565v1M177.5 566v2M178.5 568v2M179.5 570v2M180.5 572v2M181.5 574v3M182.5 577v2M183.5 579v2M184.5 581v2M185.5 583v1M185.5 584v2M186.5 586v2M187.5 588v2M188.5 590v2M189.5 592v2M190.5 594v2M191.5 596v2M192.5 598v2M193.5 600v2M194.5 602v2M195.5 604v2M196.5 606v2M197.5 608v2M198.5 610v2M199.5 612v2M200.5 614v2M201.5 616v2M202.5 618v2M203.5 620v2M204.5 622v2M205.5 624v2M206.5 626v2M207.5 628v2M208.5 630v2M209.5 632v2M210.5 634v2M211.5 636v2M212.5 638v2M213.5 640v3M214.5 643v2M215.5 645v2M216.5 647v2M217.5 649v1M217.5 650v2M218.5 652v2M219.5 654v2M220.5 656v2M221.5 658v3M222.5 661v2M223.5 663v2M224.5 665v2M225.5 667v1M225.5 668v2M226.5 670v2M227.5 672v2M228.5 674v2M229.5 676v2M230.5 678v2M231.5 680v2M232.5 682v2M233.5 684v1M234.5 685v1M235.5 686v2M236.5 688v1M237.5 689v1M238.5 690v1M239.5 691v2M240.5 693v1M241 694.5h1M242 695.5h2M244 696.5h2M246 697.5h1M247 698.5h2M249 699.5h3M252 700.5h4M256 701.5h1M257 701.5h2M259 702.5h2M261 703.5h2M263 704.5h2M265 705.5h1M266 706.5h2M268 707.5h1M269 708.5h1M270 709.5h2M272 710.5h1M273 711.5h1M274 712.5h2M276 713.5h1M277 714.5h1M278 715.5h2M280 716.5h1M281 717.5h1M282 718.5h2M284 719.5h2M286 720.5h1M287 721.5h2M289 722.5h2M291 723.5h3M294 724.5h2M296 725.5h1M297 725.5h3M300 726.5h4M304 727.5h1M305 727.5h2M307 726.5h3M310 725.5h2M312 724.5h1M313 724.5h1M314 723.5h2M316 722.5h1M317 721.5h1M318 720.5h2M320 719.5h1M321.5 718v1M322.5 716v2M323.5 715v1M324.5 714v1M325.5 712v2M326.5 711v1M327.5 710v1M328.5 708v2M329.5 707v1M330.5 705v2M331.5 703v2M332.5 701v2M333.5 699v2M334.5 697v2M335.5 695v2M336.5 693v2M337.5 691v2M338.5 689v2M339.5 687v2M340.5 684v3M341.5 682v2M342.5 679v3M343.5 677v2M344.5 675v2M345.5 674v1M345.5 672v2M346.5 670v2M347.5 667v3M348.5 665v2M349.5 662v3M350.5 660v2M351.5 657v3M352.5 655v2M353.5 654v1M353.5 652v2M354.5 650v2M355.5 647v3M356.5 645v2M357.5 642v3M358.5 640v2M359.5 637v3M360.5 635v2M361.5 634v1M361.5 632v2M362.5 629v3M363.5 627v2M364.5 624v3M365.5 621v3M366.5 618v3M367.5 616v2M368.5 613v3M369.5 612v1M369.5 610v2M370.5 607v3M371.5 604v3M372.5 601v3M373.5 598v3M374.5 595v3M375.5 592v3M376.5 589v3M377.5 588v1M377.5 586v2M378.5 583v3M379.5 580v3M380.5 577v3M381.5 575v2M382.5 572v3M383.5 569v3M384.5 566v3M385.5 565v1M385.5 563v2M386.5 561v2M387.5 558v3M388.5 556v2M389.5 553v3M390.5 551v2M391.5 548v3M392.5 546v2M393.5 545v1M393.5 543v2M394.5 541v2M395.5 538v3M396.5 536v2M397.5 533v3M398.5 531v2M399.5 528v3M400.5 526v2M401.5 525v1M401.5 523v2M402.5 521v2M403.5 519v2M404.5 517v2M405.5 515v2M406.5 513v2M407.5 511v2M408.5 509v2M409.5 508v1M409.5 507v1M410.5 505v2M411.5 503v2M412.5 502v1M413.5 500v2M414.5 499v1M415.5 497v2M416.5 495v2M417 494.5h1M418 493.5h1M419 492.5h1M420 491.5h2M422 490.5h1M423 489.5h1M424 488.5h1M425 487.5h5M430 486.5h3M433 486.5h8M441 486.5h3M444 487.5h4M448 488.5h1M449 488.5h1M450 489.5h2M452 490.5h2M454 491.5h1M455 492.5h2M457 493.5h2M459 494.5h2M461 495.5h2M463 496.5h2M465 497.5h1M466 498.5h2M468 499.5h2M470 500.5h1M471 501.5h2M473 502.5h2M475 503.5h2M477 504.5h2M479 505.5h2M481 506.5h3M484 507.5h4M488 508.5h1M489 508.5h3M492 507.5h4M496 506.5h1M497 506.5h1M498 505.5h2M500 504.5h1M501 503.5h1M502 502.5h2M504 501.5h1M505.5 500v1M506.5 499v1M507.5 498v1M508.5 497v1M509.5 495v2M510.5 494v1M511.5 493v1M512.5 492v1M513.5 491v1M514.5 489v2M515.5 488v1M516.5 487v1M517.5 485v2M518.5 484v1M519.5 483v1M520.5 481v2M521.5 480v1M522.5 478v2M523.5 477v1M524.5 475v2M525.5 474v1M526.5 472v2M527.5 471v1M528.5 469v2M529.5 468v1M530.5 466v2M531.5 465v1M532.5 463v2M533.5 462v1M534.5 460v2M535.5 459v1M536.5 457v2M537.5 456v1M538.5 454v2M539.5 453v1M540.5 452v1M541.5 450v2M542.5 449v1M543.5 448v1M544.5 446v2M545.5 445v1M546.5 444v1M547.5 443v1M548.5 442v1M549.5 440v2M550.5 439v1M551.5 438v1M552.5 437v1M553 436.5h1M554 435.5h1M555 434.5h1M556 433.5h2M558 432.5h1M559 431.5h1M560 430.5h1M561 429.5h2M563 428.5h3M566 427.5h2M568 426.5h1M569 426.5h5M574 425.5h3M577 425.5h5M582 426.5h3M585 426.5h8M593 426.5h5M598 427.5h3M601 427.5h8M609 427.5h5M614 428.5h3M617 428.5h2M619 429.5h3M622 430.5h2M624 431.5h1M625 431.5h3M628 432.5h4M632 433.5h1M633 433.5h5M638 434.5h3M641 434.5h3M644 433.5h4M648 432.5h1M649 432.5h3M652 431.5h4M656 430.5h1M657 430.5h8M665 430.5h8M673 430.5h5M678 431.5h3M681 431.5h5M686 432.5h3M689 432.5h8M697 432.5h3M700 431.5h4M704 430.5h1M705 430.5h2M707 429.5h2M709 428.5h2M711 427.5h2M713 426.5h2M715 425.5h3M718 424.5h2M720 423.5h1M721 423.5h3M724 424.5h4M728 425.5h1M729 425.5h1M730 426.5h2M732 427.5h2M734 428.5h1M735 429.5h2M737 430.5h1M738 431.5h2M740 432.5h1M741 433.5h1M742 434.5h2M744 435.5h1M745 436.5h2M747 437.5h2M749 438.5h2M751 439.5h2M753 440.5h2M755 441.5h2M757 442.5h2M759 443.5h2M761 444.5h2M763 445.5h3M766 446.5h2M768 447.5h1M769 447.5h3M772 448.5h4M776 449.5h1M777 449.5h3M780 450.5h4M784 451.5h1M785 451.5h2M787 452.5h3M790 453.5h2M792 454.5h1M793 454.5h2M795 455.5h3M798 456.5h2M800 457.5h1M801 457.5h8M809 457.5h1M810 456.5h2M812 455.5h2M814 454.5h1M815 453.5h2M817 452.5h1M818 451.5h2M820 450.5h1M821 449.5h1M822 448.5h2M824 447.5h1M825 446.5h1M826 445.5h2M828 444.5h1M829 443.5h1M830 442.5h2M832 441.5h1M833 440.5h1M834 439.5h2M836 438.5h2M838 437.5h1M839 436.5h2M841 435.5h1M842 434.5h2M844 433.5h2M846 432.5h1M847 431.5h2M849 430.5h2M851 429.5h3M854 428.5h2M856 427.5h1M857 427.5h2M859 426.5h3M862 425.5h2M864 424.5h1M865 424.5h3M868 423.5h4M872 422.5h1M873 422.5h2M875 421.5h3M878 420.5h2M880 419.5h1M881 419.5h3M884 418.5h4M888 417.5h1M889 417.5h5M894 416.5h3M897 416.5h8M905 416.5h3M908 417.5h4M912 418.5h1M913 418.5h3M916 419.5h4M920 420.5h1M921 420.5h2M923 421.5h3M926 422.5h2M928 423.5h1M929 423.5h2M931 424.5h3M934 425.5h2M936 426.5h1M937 426.5h5M942 427.5h4" stroke="#009898"/><path d="M1 476.5h2M3 475.5h2M5 474.5h2M7 473.5h2M9 472.5h3M12 471.5h4M16 470.5h1M17 470.5h2M19 469.5h3M22 468.5h2M24 467.5h1M25 467.5h8M33 467.5h2M35 468.5h3M38 469.5h2M40 470.5h1M41 470.5h8M49 470.5h2M51 469.5h2M53 468.5h2M55 467.5h2M57 466.5h3M60 465.5h4M64 464.5h1M65 464.5h2M67 463.5h3M70 462.5h2M72 461.5h1M73 461.5h5M78 460.5h3M81 460.5h8M89 460.5h3M92 461.5h4M96 462.5h1M97 462.5h2M99 463.5h3M102 464.5h2M104 465.5h1M105 465.5h2M107 466.5h2M109 467.5h2M111 468.5h2M113 469.5h1M114 470.5h1M115 471.5h1M116 472.5h2M118 473.5h1M119 474.5h1M120 475.5h1M121.5 476v1M122.5 477v2M123.5 479v1M124.5 480v1M125.5 481v2M126.5 483v1M127.5 484v1M128.5 485v2M129.5 487v1M130.5 488v1M131.5 489v2M132.5 491v1M133.5 492v1M134.5 493v1M135.5 494v2M136.5 496v1M137 497.5h1M138 498.5h1M139 499.5h1M140 500.5h1M141 501.5h1M142 502.5h1M143 503.5h1M144 504.5h1M145.5 505v1M146.5 506v1M147.5 507v1M148.5 508v1M149.5 509v2M150.5 511v1M151.5 512v1M152.5 513v1M153.5 514v1M154.5 515v2M155.5 517v2M156.5 519v2M157.5 521v2M158.5 523v2M159.5 525v2M160.5 527v2M161.5 529v2M162.5 531v3M163.5 534v2M164.5 536v3M165.5 539v3M166.5 542v3M167.5 545v2M168.5 547v3M169.5 550v1M169.5 551v2M170.5 553v3M171.5 556v3M172.5 559v3M173.5 562v2M174.5 564v3M175.5 567v3M176.5 570v3M177.5 573v1M177.5 574v2M178.5 576v2M179.5 578v2M180.5 580v3M181.5 583v2M182.5 585v3M183.5 588v2M184.5 590v2M185.5 592v1M185.5 593v2M186.5 595v2M187.5 597v2M188.5 599v2M189.5 601v2M190.5 603v2M191.5 605v2M192.5 607v2M193.5 609v1M193.5 610v2M194.5 612v2M195.5 614v2M196.5 616v2M197.5 618v2M198.5 620v2M199.5 622v2M200.5 624v2M201.5 626v1M201.5 627v2M202.5 629v2M203.5 631v2M204.5 633v2M205.5 635v3M206.5 638v2M207.5 640v2M208.5 642v2M209.5 644v1M209.5 645v2M210.5 647v2M211.5 649v3M212.5 652v2M213.5 654v3M214.5 657v2M215.5 659v3M216.5 662v2M217.5 664v1M217.5 665v2M218.5 667v2M219.5 669v2M220.5 671v2M221.5 673v2M222.5 675v2M223.5 677v2M224.5 679v2M225.5 681v1M225.5 682v1M226.5 683v1M227.5 684v2M228.5 686v1M229.5 687v1M230.5 688v1M231.5 689v2M232.5 691v1M233 692.5h2M235 693.5h2M237 694.5h2M239 695.5h2M241 696.5h3M244 697.5h4M248 698.5h1M249 698.5h2M251 699.5h2M253 700.5h2M255 701.5h2M257 702.5h1M258 703.5h2M260 704.5h1M261 705.5h1M262 706.5h2M264 707.5h1M265 708.5h1M266 709.5h1M267 710.5h1M268 711.5h2M270 712.5h1M271 713.5h1M272 714.5h1M273 715.5h1M274 716.5h2M276 717.5h1M277 718.5h1M278 719.5h2M280 720.5h1M281 721.5h2M283 722.5h2M285 723.5h2M287 724.5h2M289 725.5h2M291 726.5h3M294 727.5h2M296 728.5h1M297 728.5h5M302 729.5h3M305 729.5h2M307 728.5h3M310 727.5h2M312 726.5h1M313 726.5h1M314 725.5h1M315 724.5h1M316 723.5h1M317 722.5h1M318 721.5h1M319 720.5h1M320 719.5h1M321.5 718v1M322.5 716v2M323.5 714v2M324.5 713v1M325.5 711v2M326.5 710v1M327.5 708v2M328.5 706v2M329.5 704v2M330.5 702v2M331.5 700v2M332.5 698v2M333.5 695v3M334.5 693v2M335.5 691v2M336.5 689v2M337.5 688v1M337.5 686v2M338.5 684v2M339.5 681v3M340.5 678v3M341.5 676v2M342.5 673v3M343.5 670v3M344.5 668v2M345.5 667v1M345.5 665v2M346.5 662v3M347.5 660v2M348.5 657v3M349.5 654v3M350.5 651v3M351.5 649v2M352.5 646v3M353.5 645v1M353.5 643v2M354.5 640v3M355.5 637v3M356.5 634v3M357.5 632v2M358.5 629v3M359.5 626v3M360.5 623v3M361.5 622v1M361.5 620v2M362.5 617v3M363.5 614v3M364.5 611v3M365.5 608v3M366.5 605v3M367.5 602v3M368.5 599v3M369.5 598v1M369.5 596v2M370.5 593v3M371.5 590v3M372.5 587v3M373.5 583v4M374.5 580v3M375.5 577v3M376.5 574v3M377.5 573v1M377.5 571v2M378.5 568v3M379.5 566v2M380.5 563v3M381.5 560v3M382.5 557v3M383.5 555v2M384.5 552v3M385.5 551v1M385.5 549v2M386.5 547v2M387.5 545v2M388.5 542v3M389.5 540v2M390.5 537v3M391.5 535v2M392.5 533v2M393.5 532v1M393.5 530v2M394.5 528v2M395.5 526v2M396.5 524v2M397.5 521v3M398.5 519v2M399.5 517v2M400.5 515v2M401.5 514v1M401.5 513v1M402.5 511v2M403.5 509v2M404.5 507v2M405.5 505v2M406.5 503v2M407.5 501v2M408.5 499v2M409.5 498v1M410.5 497v1M411.5 495v2M412.5 494v1M413.5 493v1M414.5 492v1M415.5 490v2M416.5 489v1M417 488.5h1M418 487.5h2M420 486.5h1M421 485.5h1M422 484.5h2M424 483.5h1M425 482.5h5M430 481.5h3M433 481.5h3M436 482.5h4M440 483.5h1M441 483.5h1M442 484.5h2M444 485.5h2M446 486.5h1M447 487.5h2M449 488.5h1M450 489.5h2M452 490.5h1M453 491.5h1M454 492.5h2M456 493.5h1M457 494.5h1M458 495.5h2M460 496.5h2M462 497.5h1M463 498.5h2M465 499.5h1M466 500.5h1M467 501.5h1M468 502.5h2M470 503.5h1M471 504.5h1M472 505.5h1M473 506.5h1M474 507.5h1M475 508.5h1M476 509.5h2M478 510.5h1M479 511.5h1M480 512.5h1M481 513.5h5M486 514.5h3M489 514.5h2M491 513.5h2M493 512.5h2M495 511.5h2M497.5 510v1M498.5 509v1M499.5 507v2M500.5 506v1M501.5 505v1M502.5 504v1M503.5 502v2M504.5 501v1M505.5 500v1M506.5 498v2M507.5 496v2M508.5 495v1M509.5 493v2M510.5 492v1M511.5 490v2M512.5 488v2M513.5 487v1M514.5 485v2M515.5 483v2M516.5 482v1M517.5 480v2M518.5 479v1M519.5 477v2M520.5 475v2M521.5 474v1M522.5 472v2M523.5 470v2M524.5 468v2M525.5 467v1M526.5 465v2M527.5 463v2M528.5 461v2M529.5 460v1M530.5 458v2M531.5 456v2M532.5 455v1M533.5 453v2M534.5 452v1M535.5 450v2M536.5 448v2M537.5 447v1M538.5 445v2M539.5 444v1M540.5 442v2M541.5 441v1M542.5 439v2M543.5 438v1M544.5 436v2M545 435.5h1M546 434.5h1M547 433.5h1M548 432.5h1M549 431.5h1M550 430.5h1M551 429.5h1M552 428.5h1M553 427.5h2M555 426.5h2M557 425.5h2M559 424.5h2M561 423.5h5M566 424.5h3M569 424.5h3M572 425.5h4M576 426.5h1M577 426.5h5M582 427.5h3M585 427.5h5M590 428.5h3M593 428.5h8M601 428.5h5M606 429.5h3M609 429.5h8M617 429.5h3M620 430.5h4M624 431.5h1M625 431.5h5M630 432.5h3M633 432.5h8M641 432.5h5M646 431.5h3M649 431.5h5M654 430.5h3M657 430.5h8M665 430.5h3M668 431.5h4M672 432.5h1M673 432.5h5M678 433.5h3M681 433.5h8M689 433.5h3M692 432.5h4M696 431.5h1M697 431.5h2M699 430.5h2M701 429.5h2M703 428.5h2M705 427.5h2M707 426.5h2M709 425.5h2M711 424.5h2M713 423.5h5M718 422.5h3M721 422.5h2M723 423.5h3M726 424.5h2M728 425.5h1M729 425.5h1M730 426.5h2M732 427.5h1M733 428.5h1M734 429.5h2M736 430.5h1M737 431.5h1M738 432.5h2M740 433.5h2M742 434.5h1M743 435.5h2M745 436.5h1M746 437.5h2M748 438.5h2M750 439.5h1M751 440.5h2M753 441.5h1M754 442.5h2M756 443.5h2M758 444.5h1M759 445.5h2M761 446.5h2M763 447.5h2M765 448.5h2M767 449.5h2M769 450.5h3M772 451.5h4M776 452.5h1M777 452.5h2M779 453.5h3M782 454.5h2M784 455.5h1M785 455.5h2M787 456.5h3M790 457.5h2M792 458.5h1M793 458.5h5M798 459.5h3M801 459.5h2M803 458.5h3M806 457.5h2M808 456.5h1M809 456.5h1M810 455.5h2M812 454.5h1M813 453.5h1M814 452.5h2M816 451.5h1M817 450.5h1M818 449.5h1M819 448.5h1M820 447.5h2M822 446.5h1M823 445.5h1M824 444.5h1M825 443.5h1M826 442.5h2M828 441.5h1M829 440.5h1M830 439.5h2M832 438.5h1M833 437.5h1M834 436.5h2M836 435.5h2M838 434.5h1M839 433.5h2M841 432.5h2M843 431.5h2M845 430.5h2M847 429.5h2M849 428.5h2M851 427.5h3M854 426.5h2M856 425.5h1M857 425.5h2M859 424.5h3M862 423.5h2M864 422.5h1M865 422.5h2M867 421.5h3M870 420.5h2M872 419.5h1M873 419.5h3M876 418.5h4M880 417.5h1M881 417.5h5M886 416.5h3M889 416.5h8M897 416.5h8M905 416.5h3M908 417.5h4M912 418.5h1M913 418.5h2M915 419.5h3M918 420.5h2M920 421.5h1M921 421.5h2M923 422.5h2M925 423.5h2M927 424.5h2M929 425.5h3M932 426.5h4M936 427.5h1M937 427.5h5M942 428.5h4" stroke="#20b2aa"/><path d="M1 464.5h8M9 464.5h3M12 465.5h4M16 466.5h1M17 466.5h3M20 467.5h4M24 468.5h1M25 468.5h2M27 469.5h2M29 470.5h2M31 471.5h2M33 472.5h2M35 473.5h3M38 474.5h2M40 475.5h1M41 475.5h5M46 474.5h3M49 474.5h1M50 473.5h2M52 472.5h1M53 471.5h1M54 470.5h2M56 469.5h1M57 468.5h1M58 467.5h1M59 466.5h1M60 465.5h2M62 464.5h1M63 463.5h1M64 462.5h1M65 461.5h1M66 460.5h1M67 459.5h1M68 458.5h2M70 457.5h1M71 456.5h1M72 455.5h1M73 454.5h5M78 453.5h3M81 453.5h2M83 454.5h3M86 455.5h2M88 456.5h1M89 456.5h2M91 457.5h2M93 458.5h2M95 459.5h2M97 460.5h1M98 461.5h2M100 462.5h2M102 463.5h1M103 464.5h2M105.5 465v1M106.5 466v1M107.5 467v1M108.5 468v1M109.5 469v2M110.5 471v1M111.5 472v1M112.5 473v1M113.5 474v1M114.5 475v2M115.5 477v1M116.5 478v2M117.5 480v1M118.5 481v2M119.5 483v1M120.5 484v2M121.5 486v1M122.5 487v2M123.5 489v2M124.5 491v1M125.5 492v2M126.5 494v1M127.5 495v2M128.5 497v2M129 499.5h1M130 500.5h1M131 501.5h1M132 502.5h2M134 503.5h1M135 504.5h1M136 505.5h1M137 506.5h1M138 507.5h2M140 508.5h2M142 509.5h1M143 510.5h2M145 511.5h1M146 512.5h1M147 513.5h1M148 514.5h2M150 515.5h1M151 516.5h1M152 517.5h1M153.5 518v2M154.5 520v2M155.5 522v2M156.5 524v2M157.5 526v2M158.5 528v2M159.5 530v2M160.5 532v2M161.5 534v1M161.5 535v2M162.5 537v3M163.5 540v3M164.5 543v3M165.5 546v4M166.5 550v3M167.5 553v3M168.5 556v3M169.5 559v1M169.5 560v2M170.5 562v3M171.5 565v4M172.5 569v3M173.5 572v3M174.5 575v3M175.5 578v4M176.5 582v3M177.5 585v1M177.5 586v2M178.5 588v3M179.5 591v2M180.5 593v3M181.5 596v3M182.5 599v3M183.5 602v2M184.5 604v3M185.5 607v1M185.5 608v2M186.5 610v2M187.5 612v2M188.5 614v3M189.5 617v2M190.5 619v3M191.5 622v2M192.5 624v2M193.5 626v1M193.5 627v2M194.5 629v2M195.5 631v3M196.5 634v3M197.5 637v2M198.5 639v3M199.5 642v3M200.5 645v2M201.5 647v1M201.5 648v2M202.5 650v2M203.5 652v3M204.5 655v3M205.5 658v2M206.5 660v3M207.5 663v3M208.5 666v2M209.5 668v1M209.5 669v2M210.5 671v2M211.5 673v2M212.5 675v2M213.5 677v2M214.5 679v2M215.5 681v2M216.5 683v2M217 685.5h1M218 686.5h1M219 687.5h1M220 688.5h2M222 689.5h1M223 690.5h1M224 691.5h1M225 692.5h5M230 693.5h3M233 693.5h5M238 694.5h3M241 694.5h1M242 695.5h2M244 696.5h2M246 697.5h1M247 698.5h2M249 699.5h1M250 700.5h1M251 701.5h1M252 702.5h1M253 703.5h1M254 704.5h1M255 705.5h1M256 706.5h1M257 707.5h1M258 708.5h1M259 709.5h1M260 710.5h2M262 711.5h1M263 712.5h1M264 713.5h1M265 714.5h1M266 715.5h2M268 716.5h1M269 717.5h1M270 718.5h2M272 719.5h1M273 720.5h1M274 721.5h2M276 722.5h2M278 723.5h1M279 724.5h2M281 725.5h1M282 726.5h2M284 727.5h2M286 728.5h1M287 729.5h2M289 730.5h3M292 731.5h4M296 732.5h1M297 732.5h8M305 732.5h1M306 731.5h2M308 730.5h1M309 729.5h1M310 728.5h2M312 727.5h1M313.5 726v1M314.5 724v2M315.5 723v1M316.5 722v1M317.5 720v2M318.5 719v1M319.5 718v1M320.5 716v2M321.5 714v2M322.5 712v2M323.5 710v2M324.5 708v2M325.5 706v2M326.5 704v2M327.5 702v2M328.5 700v2M329.5 698v2M330.5 695v3M331.5 693v2M332.5 690v3M333.5 687v3M334.5 684v3M335.5 682v2M336.5 679v3M337.5 678v1M337.5 676v2M338.5 673v3M339.5 670v3M340.5 667v3M341.5 663v4M342.5 660v3M343.5 657v3M344.5 654v3M345.5 653v1M345.5 651v2M346.5 648v3M347.5 644v4M348.5 641v3M349.5 638v3M350.5 635v3M351.5 631v4M352.5 628v3M353.5 627v1M353.5 625v2M354.5 622v3M355.5 619v3M356.5 616v3M357.5 612v4M358.5 609v3M359.5 606v3M360.5 603v3M361.5 602v1M361.5 600v2M362.5 597v3M363.5 593v4M364.5 590v3M365.5 587v3M366.5 584v3M367.5 580v4M368.5 577v3M369.5 576v1M369.5 574v2M370.5 571v3M371.5 568v3M372.5 565v3M373.5 561v4M374.5 558v3M375.5 555v3M376.5 552v3M377.5 551v1M377.5 549v2M378.5 547v2M379.5 544v3M380.5 542v2M381.5 539v3M382.5 537v2M383.5 534v3M384.5 532v2M385.5 531v1M385.5 530v1M386.5 528v2M387.5 526v2M388.5 524v2M389.5 522v2M390.5 520v2M391.5 518v2M392.5 516v2M393.5 515v1M394.5 513v2M395.5 511v2M396.5 510v1M397.5 508v2M398.5 507v1M399.5 505v2M400.5 503v2M401.5 502v1M402.5 500v2M403.5 498v2M404.5 496v2M405.5 495v1M406.5 493v2M407.5 491v2M408.5 489v2M409.5 488v1M410.5 487v1M411.5 486v1M412.5 485v1M413.5 483v2M414.5 482v1M415.5 481v1M416.5 480v1M417 479.5h1M418 478.5h2M420 477.5h1M421 476.5h1M422 475.5h2M424 474.5h1M425 473.5h3M428 474.5h4M432 475.5h1M433 475.5h1M434 476.5h1M435 477.5h1M436 478.5h2M438 479.5h1M439 480.5h1M440 481.5h1M441 482.5h1M442 483.5h1M443 484.5h1M444 485.5h2M446 486.5h1M447 487.5h1M448 488.5h1M449 489.5h1M450 490.5h1M451 491.5h1M452 492.5h1M453 493.5h1M454 494.5h1M455 495.5h1M456 496.5h1M457.5 497v1M458.5 498v1M459.5 499v1M460.5 500v1M461.5 501v2M462.5 503v1M463.5 504v1M464.5 505v1M465.5 506v1M466.5 507v2M467.5 509v1M468.5 510v2M469.5 512v1M470.5 513v2M471.5 515v1M472.5 516v2M473 518.5h1M474 519.5h2M476 520.5h1M477 521.5h1M478 522.5h2M480 523.5h1M481 524.5h2M483 523.5h3M486 522.5h2M488 521.5h1M489.5 521v1M490.5 519v2M491.5 518v1M492.5 516v2M493.5 515v1M494.5 513v2M495.5 512v1M496.5 510v2M497.5 508v2M498.5 506v2M499.5 504v2M500.5 502v2M501.5 500v2M502.5 498v2M503.5 496v2M504.5 494v2M505.5 493v1M506.5 491v2M507.5 489v2M508.5 487v2M509.5 485v2M510.5 483v2M511.5 481v2M512.5 479v2M513.5 477v2M514.5 475v2M515.5 473v2M516.5 471v2M517.5 469v2M518.5 467v2M519.5 465v2M520.5 463v2M521.5 462v1M522.5 460v2M523.5 458v2M524.5 456v2M525.5 454v2M526.5 452v2M527.5 450v2M528.5 448v2M529.5 447v1M530.5 445v2M531.5 443v2M532.5 441v2M533.5 439v2M534.5 437v2M535.5 435v2M536.5 433v2M537.5 432v1M538.5 431v1M539.5 429v2M540.5 428v1M541.5 427v1M542.5 426v1M543.5 424v2M544.5 423v1M545 422.5h2M547 421.5h3M550 420.5h2M552 419.5h1M553 419.5h3M556 420.5h4M560 421.5h1M561 421.5h1M562 422.5h2M564 423.5h2M566 424.5h1M567 425.5h2M569 426.5h3M572 427.5h4M576 428.5h1M577 428.5h3M580 429.5h4M584 430.5h1M585 430.5h5M590 431.5h3M593 431.5h8M601 431.5h5M606 430.5h3M609 430.5h3M612 429.5h4M616 428.5h1M617 428.5h8M625 428.5h5M630 429.5h3M633 429.5h3M636 430.5h4M640 431.5h1M641 431.5h5M646 432.5h3M649 432.5h8M657 432.5h5M662 433.5h3M665 433.5h5M670 434.5h3M673 434.5h8M681 434.5h2M683 433.5h3M686 432.5h2M688 431.5h1M689 431.5h2M691 430.5h2M693 429.5h2M695 428.5h2M697 427.5h2M699 426.5h2M701 425.5h2M703 424.5h2M705 423.5h5M710 422.5h3M713 422.5h8M721 422.5h2M723 423.5h3M726 424.5h2M728 425.5h1M729 425.5h1M730 426.5h2M732 427.5h1M733 428.5h1M734 429.5h2M736 430.5h1M737 431.5h1M738 432.5h1M739 433.5h1M740 434.5h2M742 435.5h1M743 436.5h1M744 437.5h1M745 438.5h1M746 439.5h1M747 440.5h1M748 441.5h2M750 442.5h1M751 443.5h1M752 444.5h1M753 445.5h1M754 446.5h2M756 447.5h2M758 448.5h1M759 449.5h2M761 450.5h1M762 451.5h2M764 452.5h1M765 453.5h1M766 454.5h2M768 455.5h1M769 456.5h2M771 457.5h2M773 458.5h2M775 459.5h2M777 460.5h5M782 461.5h3M785 461.5h3M788 460.5h4M792 459.5h1M793 459.5h3M796 458.5h4M800 457.5h1M801 457.5h1M802 456.5h2M804 455.5h1M805 454.5h1M806 453.5h2M808 452.5h1M809 451.5h1M810 450.5h2M812 449.5h1M813 448.5h1M814 447.5h2M816 446.5h1M817 445.5h1M818 444.5h1M819 443.5h1M820 442.5h2M822 441.5h1M823 440.5h1M824 439.5h1M825 438.5h1M826 437.5h2M828 436.5h2M830 435.5h1M831 434.5h2M833 433.5h2M835 432.5h2M837 431.5h2M839 430.5h2M841 429.5h2M843 428.5h3M846 427.5h2M848 426.5h1M849 426.5h1M850 425.5h2M852 424.5h2M854 423.5h1M855 422.5h2M857 421.5h2M859 420.5h2M861 419.5h2M863 418.5h2M865 417.5h3M868 416.5h4M872 415.5h1M873 415.5h8M881 415.5h5M886 416.5h3M889 416.5h8M897 416.5h5M902 417.5h3M905 417.5h3M908 418.5h4M912 419.5h1M913 419.5h2M915 420.5h2M917 421.5h2M919 422.5h2M921 423.5h2M923 424.5h3M926 425.5h2M928 426.5h1M929 426.5h3M932 427.5h4M936 428.5h1M937 428.5h5M942 429.5h4" stroke="#cc00cc"/><path d="M1 458.5h2M3 459.5h3M6 460.5h2M8 461.5h1M9 461.5h1M10 462.5h2M12 463.5h1M13 464.5h1M14 465.5h2M16 466.5h1M17 467.5h1M18 468.5h2M20 469.5h2M22 470.5h1M23 471.5h2M25 472.5h2M27 473.5h2M29 474.5h2M31 475.5h2M33 476.5h2M35 477.5h3M38 478.5h2M40 479.5h1M41 479.5h2M43 478.5h3M46 477.5h2M48 476.5h1M49.5 476v1M50.5 475v1M51.5 473v2M52.5 472v1M53.5 471v1M54.5 470v1M55.5 468v2M56.5 467v1M57.5 466v1M58.5 464v2M59.5 463v1M60.5 461v2M61.5 460v1M62.5 458v2M63.5 457v1M64.5 455v2M65 454.5h1M66 453.5h2M68 452.5h2M70 451.5h1M71 450.5h2M73 449.5h5M78 450.5h3M81 450.5h2M83 451.5h2M85 452.5h2M87 453.5h2M89 454.5h1M90 455.5h2M92 456.5h1M93 457.5h1M94 458.5h2M96 459.5h1M97.5 460v1M98.5 461v1M99.5 462v2M100.5 464v1M101.5 465v1M102.5 466v1M103.5 467v2M104.5 469v1M105.5 470v1M106.5 471v2M107.5 473v2M108.5 475v1M109.5 476v2M110.5 478v1M111.5 479v2M112.5 481v2M113.5 483v1M114.5 484v2M115.5 486v1M116.5 487v2M117.5 489v1M118.5 490v2M119.5 492v1M120.5 493v2M121.5 495v1M122.5 496v2M123.5 498v1M124.5 499v1M125.5 500v2M126.5 502v1M127.5 503v1M128.5 504v2M129 506.5h2M131 507.5h3M134 508.5h2M136 509.5h1M137 509.5h2M139 510.5h2M141 511.5h2M143 512.5h2M145 513.5h1M146 514.5h1M147 515.5h1M148 516.5h1M149 517.5h1M150 518.5h1M151 519.5h1M152 520.5h1M153.5 521v2M154.5 523v2M155.5 525v2M156.5 527v3M157.5 530v2M158.5 532v3M159.5 535v2M160.5 537v2M161.5 539v1M161.5 540v2M162.5 542v4M163.5 546v4M164.5 550v3M165.5 553v4M166.5 557v3M167.5 560v4M168.5 564v4M169.5 568v1M169.5 569v2M170.5 571v4M171.5 575v4M172.5 579v3M173.5 582v4M174.5 586v3M175.5 589v4M176.5 593v4M177.5 597v1M177.5 598v2M178.5 600v3M179.5 603v3M180.5 606v3M181.5 609v3M182.5 612v3M183.5 615v3M184.5 618v3M185.5 621v1M185.5 622v2M186.5 624v3M187.5 627v3M188.5 630v3M189.5 633v3M190.5 636v3M191.5 639v3M192.5 642v3M193.5 645v1M193.5 646v2M194.5 648v3M195.5 651v2M196.5 653v3M197.5 656v3M198.5 659v3M199.5 662v2M200.5 664v3M201.5 667v1M201.5 668v2M202.5 670v2M203.5 672v2M204.5 674v2M205.5 676v2M206.5 678v2M207.5 680v2M208.5 682v2M209 684.5h1M210 685.5h1M211 686.5h1M212 687.5h2M214 688.5h1M215 689.5h1M216 690.5h1M217 691.5h5M222 690.5h3M225 690.5h5M230 691.5h3M233 691.5h1M234 692.5h2M236 693.5h2M238 694.5h1M239 695.5h2M241 696.5h1M242 697.5h1M243 698.5h1M244 699.5h2M246 700.5h1M247 701.5h1M248 702.5h1M249 703.5h1M250 704.5h1M251 705.5h1M252 706.5h1M253 707.5h1M254 708.5h1M255 709.5h1M256 710.5h1M257 711.5h1M258 712.5h1M259 713.5h1M260 714.5h2M262 715.5h1M263 716.5h1M264 717.5h1M265 718.5h1M266 719.5h2M268 720.5h2M270 721.5h1M271 722.5h2M273 723.5h1M274 724.5h2M276 725.5h1M277 726.5h1M278 727.5h2M280 728.5h1M281 729.5h2M283 730.5h2M285 731.5h2M287 732.5h2M289 733.5h5M294 734.5h3M297 734.5h3M300 733.5h4M304 732.5h1M305 732.5h1M306 731.5h1M307 730.5h1M308 729.5h2M310 728.5h1M311 727.5h1M312 726.5h1M313.5 725v1M314.5 723v2M315.5 721v2M316.5 719v2M317.5 718v1M318.5 716v2M319.5 714v2M320.5 712v2M321.5 710v2M322.5 708v2M323.5 706v2M324.5 703v3M325.5 701v2M326.5 698v3M327.5 696v2M328.5 694v2M329.5 693v1M329.5 691v2M330.5 688v3M331.5 685v3M332.5 682v3M333.5 678v4M334.5 675v3M335.5 672v3M336.5 669v3M337.5 668v1M337.5 666v2M338.5 662v4M339.5 658v4M340.5 655v3M341.5 651v4M342.5 648v3M343.5 644v4M344.5 640v4M345.5 639v1M345.5 637v2M346.5 633v4M347.5 630v3M348.5 626v4M349.5 623v3M350.5 619v4M351.5 616v3M352.5 612v4M353.5 611v1M353.5 609v2M354.5 605v4M355.5 602v3M356.5 599v3M357.5 595v4M358.5 592v3M359.5 589v3M360.5 585v4M361.5 584v1M361.5 582v2M362.5 579v3M363.5 576v3M364.5 573v3M365.5 570v3M366.5 567v3M367.5 564v3M368.5 561v3M369.5 560v1M369.5 558v2M370.5 555v3M371.5 552v3M372.5 549v3M373.5 547v2M374.5 544v3M375.5 541v3M376.5 538v3M377.5 537v1M377.5 535v2M378.5 533v2M379.5 531v2M380.5 529v2M381.5 527v2M382.5 525v2M383.5 523v2M384.5 521v2M385.5 520v1M385.5 519v1M386.5 517v2M387.5 516v1M388.5 514v2M389.5 513v1M390.5 511v2M391.5 510v1M392.5 508v2M393.5 507v1M394.5 505v2M395.5 504v1M396.5 502v2M397.5 501v1M398.5 499v2M399.5 498v1M400.5 496v2M401.5 495v1M402.5 493v2M403.5 491v2M404.5 490v1M405.5 488v2M406.5 487v1M407.5 485v2M408.5 483v2M409.5 482v1M410.5 481v1M411.5 479v2M412.5 478v1M413.5 477v1M414.5 476v1M415.5 474v2M416.5 473v1M417 472.5h2M419 471.5h3M422 470.5h2M424 469.5h1M425 469.5h1M426 470.5h2M428 471.5h2M430 472.5h1M431 473.5h2M433 474.5h1M434 475.5h1M435 476.5h1M436 477.5h1M437 478.5h1M438 479.5h1M439 480.5h1M440 481.5h1M441.5 482v1M442.5 483v1M443.5 484v1M444.5 485v1M445.5 486v2M446.5 488v1M447.5 489v1M448.5 490v1M449.5 491v1M450.5 492v2M451.5 494v2M452.5 496v1M453.5 497v2M454.5 499v1M455.5 500v2M456.5 502v2M457.5 504v1M458.5 505v2M459.5 507v1M460.5 508v2M461.5 510v1M462.5 511v2M463.5 513v1M464.5 514v2M465.5 516v1M466.5 517v2M467.5 519v1M468.5 520v1M469.5 521v2M470.5 523v1M471.5 524v1M472.5 525v2M473 527.5h3M476 528.5h4M480 529.5h1M481.5 529v1M482.5 528v1M483.5 527v1M484.5 526v1M485.5 524v2M486.5 523v1M487.5 522v1M488.5 521v1M489.5 520v1M490.5 518v2M491.5 516v2M492.5 514v2M493.5 512v2M494.5 510v2M495.5 508v2M496.5 506v2M497.5 504v2M498.5 502v2M499.5 500v2M500.5 497v3M501.5 495v2M502.5 492v3M503.5 490v2M504.5 488v2M505.5 487v1M505.5 485v2M506.5 483v2M507.5 481v2M508.5 479v2M509.5 476v3M510.5 474v2M511.5 472v2M512.5 470v2M513.5 469v1M513.5 467v2M514.5 465v2M515.5 463v2M516.5 461v2M517.5 458v3M518.5 456v2M519.5 454v2M520.5 452v2M521.5 451v1M521.5 449v2M522.5 447v2M523.5 445v2M524.5 443v2M525.5 441v2M526.5 439v2M527.5 437v2M528.5 435v2M529.5 434v1M529.5 433v1M530.5 431v2M531.5 430v1M532.5 428v2M533.5 427v1M534.5 425v2M535.5 424v1M536.5 422v2M537 421.5h1M538 420.5h2M540 419.5h2M542 418.5h1M543 417.5h2M545 416.5h3M548 417.5h4M552 418.5h1M553 418.5h2M555 419.5h2M557 420.5h2M559 421.5h2M561 422.5h1M562 423.5h2M564 424.5h1M565 425.5h1M566 426.5h2M568 427.5h1M569 428.5h2M571 429.5h3M574 430.5h2M576 431.5h1M577 431.5h3M580 432.5h4M584 433.5h1M585 433.5h8M593 433.5h5M598 432.5h3M601 432.5h2M603 431.5h3M606 430.5h2M608 429.5h1M609 429.5h2M611 428.5h2M613 427.5h2M615 426.5h2M617 425.5h8M625 425.5h2M627 426.5h2M629 427.5h2M631 428.5h2M633 429.5h2M635 430.5h2M637 431.5h2M639 432.5h2M641 433.5h5M646 434.5h3M649 434.5h8M657 434.5h5M662 435.5h3M665 435.5h8M673 435.5h2M675 434.5h3M678 433.5h2M680 432.5h1M681 432.5h2M683 431.5h2M685 430.5h2M687 429.5h2M689 428.5h2M691 427.5h3M694 426.5h2M696 425.5h1M697 425.5h3M700 424.5h4M704 423.5h1M705 423.5h5M710 422.5h3M713 422.5h5M718 421.5h3M721 421.5h2M723 422.5h2M725 423.5h2M727 424.5h2M729 425.5h1M730 426.5h1M731 427.5h1M732 428.5h2M734 429.5h1M735 430.5h1M736 431.5h1M737.5 432v1M738.5 433v1M739.5 434v1M740.5 435v1M741.5 436v2M742.5 438v1M743.5 439v1M744.5 440v1M745 441.5h1M746 442.5h1M747 443.5h1M748 444.5h1M749 445.5h1M750 446.5h1M751 447.5h1M752 448.5h1M753 449.5h1M754 450.5h1M755 451.5h1M756 452.5h2M758 453.5h1M759 454.5h1M760 455.5h1M761 456.5h1M762 457.5h1M763 458.5h1M764 459.5h2M766 460.5h1M767 461.5h1M768 462.5h1M769 463.5h5M774 464.5h3M777 464.5h3M780 463.5h4M784 462.5h1M785 462.5h1M786 461.5h2M788 460.5h2M790 459.5h1M791 458.5h2M793 457.5h2M795 456.5h2M797 455.5h2M799 454.5h2M801 453.5h1M802 452.5h2M804 451.5h2M806 450.5h1M807 449.5h2M809 448.5h1M810 447.5h2M812 446.5h1M813 445.5h1M814 444.5h2M816 443.5h1M817 442.5h1M818 441.5h2M820 440.5h1M821 439.5h1M822 438.5h2M824 437.5h1M825 436.5h2M827 435.5h2M829 434.5h2M831 433.5h2M833 432.5h1M834 431.5h2M836 430.5h2M838 429.5h1M839 428.5h2M841 427.5h1M842 426.5h2M844 425.5h2M846 424.5h1M847 423.5h2M849 422.5h1M850 421.5h2M852 420.5h2M854 419.5h1M855 418.5h2M857 417.5h2M859 416.5h3M862 415.5h2M864 414.5h1M865 414.5h5M870 415.5h3M873 415.5h5M878 416.5h3M881 416.5h5M886 417.5h3M889 417.5h8M897 417.5h5M902 418.5h3M905 418.5h3M908 419.5h4M912 420.5h1M913 420.5h2M915 421.5h2M917 422.5h2M919 423.5h2M921 424.5h2M923 425.5h3M926 426.5h2M928 427.5h1M929 427.5h3M932 428.5h4M936 429.5h1M937 429.5h3M940 430.5h4M944 431.5h2" stroke="#ff00ff"/><path d="M1.5 454v1M2.5 455v1M3.5 456v1M4.5 457v1M5.5 458v2M6.5 460v1M7.5 461v1M8.5 462v1M9.5 463v1M10.5 464v1M11.5 465v2M12.5 467v1M13.5 468v1M14.5 469v1M15.5 470v2M16.5 472v1M17 473.5h1M18 474.5h2M20 475.5h2M22 476.5h1M23 477.5h2M25 478.5h2M27 479.5h2M29 480.5h2M31 481.5h2M33 482.5h8M41.5 482v1M42.5 481v1M43.5 480v1M44.5 479v1M45.5 477v2M46.5 476v1M47.5 475v1M48.5 474v1M49.5 473v1M50.5 471v2M51.5 469v2M52.5 467v2M53.5 465v2M54.5 463v2M55.5 461v2M56.5 459v2M57.5 458v1M58.5 456v2M59.5 455v1M60.5 454v1M61.5 452v2M62.5 451v1M63.5 450v1M64.5 448v2M65 447.5h2M67 446.5h2M69 445.5h2M71 444.5h2M73 443.5h3M76 444.5h4M80 445.5h1M81 445.5h1M82 446.5h1M83 447.5h1M84 448.5h1M85 449.5h1M86 450.5h1M87 451.5h1M88 452.5h1M89.5 453v1M90.5 454v2M91.5 456v2M92.5 458v1M93.5 459v2M94.5 461v1M95.5 462v2M96.5 464v2M97.5 466v1M98.5 467v2M99.5 469v2M100.5 471v2M101.5 473v2M102.5 475v2M103.5 477v2M104.5 479v2M105.5 481v1M106.5 482v2M107.5 484v2M108.5 486v1M109.5 487v2M110.5 489v1M111.5 490v2M112.5 492v2M113 494.5h1M114 495.5h1M115 496.5h1M116 497.5h1M117 498.5h1M118 499.5h1M119 500.5h1M120 501.5h1M121 502.5h1M122 503.5h1M123 504.5h1M124 505.5h2M126 506.5h1M127 507.5h1M128 508.5h1M129 509.5h2M131 510.5h3M134 511.5h2M136 512.5h1M137 512.5h2M139 513.5h2M141 514.5h2M143 515.5h2M145 516.5h1M146 517.5h1M147 518.5h1M148 519.5h1M149 520.5h1M150 521.5h1M151 522.5h1M152 523.5h1M153.5 524v2M154.5 526v3M155.5 529v2M156.5 531v3M157.5 534v3M158.5 537v3M159.5 540v2M160.5 542v3M161.5 545v1M161.5 546v3M162.5 549v4M163.5 553v4M164.5 557v4M165.5 561v4M166.5 565v4M167.5 569v4M168.5 573v4M169.5 577v2M169.5 579v3M170.5 582v4M171.5 586v4M172.5 590v5M173.5 595v4M174.5 599v5M175.5 604v4M176.5 608v4M177.5 612v2M177.5 614v2M178.5 616v4M179.5 620v4M180.5 624v4M181.5 628v4M182.5 632v4M183.5 636v4M184.5 640v4M185.5 644v1M185.5 645v2M186.5 647v3M187.5 650v3M188.5 653v3M189.5 656v4M190.5 660v3M191.5 663v3M192.5 666v3M193.5 669v1M193.5 670v1M194.5 671v2M195.5 673v2M196.5 675v2M197.5 677v2M198.5 679v2M199.5 681v2M200.5 683v2M201 685.5h2M203 686.5h2M205 687.5h2M207 688.5h2M209 689.5h3M212 688.5h4M216 687.5h1M217 687.5h5M222 688.5h3M225 688.5h1M226 689.5h2M228 690.5h2M230 691.5h1M231 692.5h2M233 693.5h1M234 694.5h1M235 695.5h1M236 696.5h2M238 697.5h1M239 698.5h1M240 699.5h1M241 700.5h1M242 701.5h1M243 702.5h1M244 703.5h1M245 704.5h1M246 705.5h1M247 706.5h1M248 707.5h1M249 708.5h1M250 709.5h1M251 710.5h1M252 711.5h2M254 712.5h1M255 713.5h1M256 714.5h1M257 715.5h1M258 716.5h2M260 717.5h1M261 718.5h1M262 719.5h2M264 720.5h1M265 721.5h1M266 722.5h2M268 723.5h1M269 724.5h1M270 725.5h2M272 726.5h1M273 727.5h1M274 728.5h2M276 729.5h1M277 730.5h1M278 731.5h2M280 732.5h1M281 733.5h2M283 734.5h3M286 735.5h2M288 736.5h1M289 736.5h5M294 735.5h3M297 735.5h2M299 734.5h3M302 733.5h2M304 732.5h1M305.5 732v1M306.5 731v1M307.5 729v2M308.5 728v1M309.5 727v1M310.5 726v1M311.5 724v2M312.5 723v1M313.5 721v2M314.5 719v2M315.5 717v2M316.5 715v2M317.5 713v2M318.5 711v2M319.5 709v2M320.5 707v2M321.5 706v1M321.5 704v2M322.5 701v3M323.5 698v3M324.5 695v3M325.5 693v2M326.5 690v3M327.5 687v3M328.5 684v3M329.5 683v1M329.5 681v2M330.5 677v4M331.5 673v4M332.5 669v4M333.5 666v3M334.5 662v4M335.5 658v4M336.5 654v4M337.5 653v1M337.5 650v3M338.5 646v4M339.5 642v4M340.5 638v4M341.5 634v4M342.5 630v4M343.5 626v4M344.5 622v4M345.5 621v1M345.5 619v2M346.5 615v4M347.5 611v4M348.5 607v4M349.5 604v3M350.5 600v4M351.5 596v4M352.5 592v4M353.5 591v1M353.5 589v2M354.5 586v3M355.5 583v3M356.5 580v3M357.5 576v4M358.5 573v3M359.5 570v3M360.5 567v3M361.5 566v1M361.5 564v2M362.5 561v3M363.5 559v2M364.5 556v3M365.5 553v3M366.5 550v3M367.5 548v2M368.5 545v3M369.5 544v1M369.5 542v2M370.5 540v2M371.5 537v3M372.5 535v2M373.5 532v3M374.5 530v2M375.5 527v3M376.5 525v2M377.5 524v1M377.5 523v1M378.5 521v2M379.5 520v1M380.5 518v2M381.5 517v1M382.5 515v2M383.5 514v1M384.5 512v2M385.5 511v1M386.5 509v2M387.5 508v1M388.5 507v1M389.5 505v2M390.5 504v1M391.5 503v1M392.5 501v2M393.5 500v1M394.5 498v2M395.5 497v1M396.5 495v2M397.5 494v1M398.5 492v2M399.5 491v1M400.5 489v2M401.5 488v1M402.5 486v2M403.5 484v2M404.5 482v2M405.5 480v2M406.5 478v2M407.5 476v2M408.5 474v2M409 473.5h1M410 472.5h1M411 471.5h1M412 470.5h2M414 469.5h1M415 468.5h1M416 467.5h1M417 466.5h8M425 466.5h1M426 467.5h2M428 468.5h1M429 469.5h1M430 470.5h2M432 471.5h1M433.5 472v1M434.5 473v2M435.5 475v1M436.5 476v2M437.5 478v1M438.5 479v2M439.5 481v1M440.5 482v2M441.5 484v2M442.5 486v2M443.5 488v2M444.5 490v2M445.5 492v2M446.5 494v2M447.5 496v2M448.5 498v2M449.5 500v2M450.5 502v2M451.5 504v2M452.5 506v2M453.5 508v2M454.5 510v2M455.5 512v2M456.5 514v2M457.5 516v1M458.5 517v2M459.5 519v1M460.5 520v1M461.5 521v2M462.5 523v1M463.5 524v1M464.5 525v2M465 527.5h1M466 528.5h2M468 529.5h1M469 530.5h1M470 531.5h2M472 532.5h1M473 533.5h2M475 532.5h3M478 531.5h2M480 530.5h1M481.5 530v1M482.5 528v2M483.5 526v2M484.5 525v1M485.5 523v2M486.5 522v1M487.5 520v2M488.5 518v2M489.5 516v2M490.5 514v2M491.5 511v3M492.5 509v2M493.5 506v3M494.5 504v2M495.5 501v3M496.5 499v2M497.5 498v1M497.5 496v2M498.5 494v2M499.5 491v3M500.5 488v3M501.5 486v2M502.5 483v3M503.5 480v3M504.5 478v2M505.5 477v1M505.5 475v2M506.5 472v3M507.5 470v2M508.5 467v3M509.5 464v3M510.5 461v3M511.5 459v2M512.5 456v3M513.5 455v1M513.5 453v2M514.5 451v2M515.5 448v3M516.5 446v2M517.5 443v3M518.5 441v2M519.5 438v3M520.5 436v2M521.5 435v1M521.5 434v1M522.5 432v2M523.5 430v2M524.5 429v1M525.5 427v2M526.5 426v1M527.5 424v2M528.5 422v2M529 421.5h1M530 420.5h2M532 419.5h1M533 418.5h1M534 417.5h2M536 416.5h1M537 415.5h5M542 414.5h3M545 414.5h1M546 415.5h2M548 416.5h2M550 417.5h1M551 418.5h2M553 419.5h1M554 420.5h2M556 421.5h2M558 422.5h1M559 423.5h2M561 424.5h1M562 425.5h1M563 426.5h1M564 427.5h2M566 428.5h1M567 429.5h1M568 430.5h1M569 431.5h2M571 432.5h2M573 433.5h2M575 434.5h2M577 435.5h5M582 436.5h3M585 436.5h3M588 435.5h4M592 434.5h1M593 434.5h2M595 433.5h2M597 432.5h2M599 431.5h2M601 430.5h1M602 429.5h2M604 428.5h2M606 427.5h1M607 426.5h2M609 425.5h2M611 424.5h3M614 423.5h2M616 422.5h1M617 422.5h3M620 423.5h4M624 424.5h1M625 424.5h1M626 425.5h2M628 426.5h1M629 427.5h1M630 428.5h2M632 429.5h1M633 430.5h1M634 431.5h2M636 432.5h1M637 433.5h1M638 434.5h2M640 435.5h1M641 436.5h3M644 437.5h4M648 438.5h1M649 438.5h5M654 437.5h3M657 437.5h5M662 436.5h3M665 436.5h2M667 435.5h2M669 434.5h2M671 433.5h2M673 432.5h2M675 431.5h2M677 430.5h2M679 429.5h2M681 428.5h2M683 427.5h3M686 426.5h2M688 425.5h1M689 425.5h8M697 425.5h3M700 424.5h4M704 423.5h1M705 423.5h3M708 422.5h4M712 421.5h1M713 421.5h5M718 420.5h3M721 420.5h1M722 421.5h2M724 422.5h2M726 423.5h1M727 424.5h2M729.5 425v1M730.5 426v1M731.5 427v1M732.5 428v1M733.5 429v2M734.5 431v1M735.5 432v1M736.5 433v1M737.5 434v1M738.5 435v2M739.5 437v1M740.5 438v2M741.5 440v1M742.5 441v2M743.5 443v1M744.5 444v2M745.5 446v1M746.5 447v1M747.5 448v2M748.5 450v1M749.5 451v1M750.5 452v1M751.5 453v2M752.5 455v1M753.5 456v1M754.5 457v1M755.5 458v1M756.5 459v1M757.5 460v2M758.5 462v1M759.5 463v1M760.5 464v1M761 465.5h2M763 466.5h2M765 467.5h2M767 468.5h2M769 469.5h2M771 468.5h2M773 467.5h2M775 466.5h2M777 465.5h1M778 464.5h1M779 463.5h1M780 462.5h2M782 461.5h1M783 460.5h1M784 459.5h1M785 458.5h1M786 457.5h2M788 456.5h1M789 455.5h1M790 454.5h2M792 453.5h1M793 452.5h2M795 451.5h3M798 450.5h2M800 449.5h1M801 449.5h2M803 448.5h2M805 447.5h2M807 446.5h2M809 445.5h1M810 444.5h2M812 443.5h2M814 442.5h1M815 441.5h2M817 440.5h1M818 439.5h2M820 438.5h2M822 437.5h1M823 436.5h2M825 435.5h1M826 434.5h2M828 433.5h1M829 432.5h1M830 431.5h2M832 430.5h1M833 429.5h1M834 428.5h2M836 427.5h1M837 426.5h1M838 425.5h2M840 424.5h1M841 423.5h1M842 422.5h2M844 421.5h1M845 420.5h1M846 419.5h2M848 418.5h1M849 417.5h2M851 416.5h3M854 415.5h2M856 414.5h1M857 414.5h5M862 413.5h3M865 413.5h3M868 414.5h4M872 415.5h1M873 415.5h5M878 416.5h3M881 416.5h5M886 417.5h3M889 417.5h5M894 418.5h3M897 418.5h5M902 419.5h3M905 419.5h3M908 420.5h4M912 421.5h1M913 421.5h2M915 422.5h3M918 423.5h2M920 424.5h1M921 424.5h1M922 425.5h2M924 426.5h2M926 427.5h1M927 428.5h2M929 429.5h2M931 430.5h3M934 431.5h2M936 432.5h1M937 432.5h2M939 433.5h3M942 434.5h2M944 435.5h2" stroke="#ff00ff"/><path d="M1.5 454v1M2.5 455v2M3.5 457v2M4.5 459v2M5.5 461v1M6.5 462v2M7.5 464v2M8.5 466v2M9.5 468v1M10.5 469v2M11.5 471v1M12.5 472v2M13.5 474v1M14.5 475v2M15.5 477v1M16.5 478v2M17 480.5h1M18 481.5h2M20 482.5h2M22 483.5h1M23 484.5h2M25 485.5h5M30 486.5h3M33 486.5h1M34 485.5h2M36 484.5h1M37 483.5h1M38 482.5h2M40 481.5h1M41.5 480v1M42.5 478v2M43.5 476v2M44.5 475v1M45.5 473v2M46.5 472v1M47.5 470v2M48.5 468v2M49.5 467v1M50.5 465v2M51.5 463v2M52.5 461v2M53.5 459v2M54.5 457v2M55.5 455v2M56.5 453v2M57.5 452v1M58.5 450v2M59.5 449v1M60.5 448v1M61.5 446v2M62.5 445v1M63.5 444v1M64.5 442v2M65 441.5h2M67 440.5h2M69 439.5h2M71 438.5h2M73 437.5h1M74 438.5h2M76 439.5h1M77 440.5h1M78 441.5h2M80 442.5h1M81.5 443v2M82.5 445v2M83.5 447v2M84.5 449v2M85.5 451v2M86.5 453v2M87.5 455v2M88.5 457v2M89.5 459v2M90.5 461v2M91.5 463v2M92.5 465v2M93.5 467v3M94.5 470v2M95.5 472v2M96.5 474v2M97.5 476v1M97.5 477v1M98.5 478v2M99.5 480v2M100.5 482v2M101.5 484v1M102.5 485v2M103.5 487v2M104.5 489v2M105.5 491v1M106.5 492v1M107.5 493v2M108.5 495v1M109.5 496v1M110.5 497v1M111.5 498v2M112.5 500v1M113 501.5h1M114 502.5h2M116 503.5h2M118 504.5h1M119 505.5h2M121 506.5h1M122 507.5h2M124 508.5h1M125 509.5h1M126 510.5h2M128 511.5h1M129 512.5h3M132 513.5h4M136 514.5h1M137 514.5h2M139 515.5h2M141 516.5h2M143 517.5h2M145.5 518v1M146.5 519v1M147.5 520v1M148.5 521v1M149.5 522v2M150.5 524v1M151.5 525v1M152.5 526v1M153.5 527v2M154.5 529v3M155.5 532v3M156.5 535v3M157.5 538v4M158.5 542v3M159.5 545v3M160.5 548v3M161.5 551v1M161.5 552v3M162.5 555v6M163.5 561v5M164.5 566v5M165.5 571v6M166.5 577v5M167.5 582v5M168.5 587v6M169.5 593v2M169.5 595v3M170.5 598v6M171.5 604v5M172.5 609v5M173.5 614v6M174.5 620v5M175.5 625v5M176.5 630v6M177.5 636v2M177.5 638v3M178.5 641v4M179.5 645v4M180.5 649v4M181.5 653v5M182.5 658v4M183.5 662v4M184.5 666v4M185.5 670v2M185.5 672v2M186.5 674v2M187.5 676v2M188.5 678v2M189.5 680v2M190.5 682v2M191.5 684v2M192.5 686v2M193 688.5h5M198 689.5h3M201 689.5h1M202 688.5h2M204 687.5h2M206 686.5h1M207 685.5h2M209 684.5h5M214 685.5h3M217 685.5h1M218 686.5h2M220 687.5h2M222 688.5h1M223 689.5h2M225 690.5h1M226 691.5h1M227 692.5h1M228 693.5h2M230 694.5h1M231 695.5h1M232 696.5h1M233 697.5h1M234 698.5h1M235 699.5h1M236 700.5h2M238 701.5h1M239 702.5h1M240 703.5h1M241 704.5h1M242 705.5h1M243 706.5h1M244 707.5h1M245 708.5h1M246 709.5h1M247 710.5h1M248 711.5h1M249 712.5h1M250 713.5h1M251 714.5h1M252 715.5h2M254 716.5h1M255 717.5h1M256 718.5h1M257 719.5h1M258 720.5h2M260 721.5h1M261 722.5h1M262 723.5h2M264 724.5h1M265 725.5h1M266 726.5h2M268 727.5h1M269 728.5h1M270 729.5h2M272 730.5h1M273 731.5h1M274 732.5h2M276 733.5h2M278 734.5h1M279 735.5h2M281 736.5h3M284 737.5h4M288 738.5h1M289 738.5h3M292 737.5h4M296 736.5h1M297 736.5h1M298 735.5h2M300 734.5h2M302 733.5h1M303 732.5h2M305.5 731v1M306.5 729v2M307.5 727v2M308.5 726v1M309.5 724v2M310.5 723v1M311.5 721v2M312.5 719v2M313.5 717v2M314.5 715v2M315.5 712v3M316.5 709v3M317.5 707v2M318.5 704v3M319.5 701v3M320.5 699v2M321.5 698v1M321.5 696v2M322.5 692v4M323.5 689v3M324.5 686v3M325.5 682v4M326.5 679v3M327.5 676v3M328.5 672v4M329.5 671v1M329.5 668v3M330.5 664v4M331.5 660v4M332.5 655v5M333.5 651v4M334.5 646v5M335.5 642v4M336.5 638v4M337.5 636v2M337.5 633v3M338.5 629v4M339.5 625v4M340.5 621v4M341.5 616v5M342.5 612v4M343.5 608v4M344.5 604v4M345.5 602v2M345.5 600v2M346.5 596v4M347.5 592v4M348.5 588v4M349.5 585v3M350.5 581v4M351.5 577v4M352.5 573v4M353.5 572v1M353.5 570v2M354.5 567v3M355.5 565v2M356.5 562v3M357.5 559v3M358.5 556v3M359.5 554v2M360.5 551v3M361.5 550v1M361.5 548v2M362.5 546v2M363.5 544v2M364.5 542v2M365.5 540v2M366.5 538v2M367.5 536v2M368.5 534v2M369.5 533v1M369.5 531v2M370.5 529v2M371.5 527v2M372.5 525v2M373.5 523v2M374.5 521v2M375.5 519v2M376.5 517v2M377.5 516v1M377.5 515v1M378.5 513v2M379.5 512v1M380.5 511v1M381.5 509v2M382.5 508v1M383.5 507v1M384.5 505v2M385.5 504v1M386.5 502v2M387.5 501v1M388.5 500v1M389.5 498v2M390.5 497v1M391.5 496v1M392.5 494v2M393.5 493v1M394.5 491v2M395.5 489v2M396.5 488v1M397.5 486v2M398.5 485v1M399.5 483v2M400.5 481v2M401.5 480v1M402.5 478v2M403.5 477v1M404.5 475v2M405.5 474v1M406.5 472v2M407.5 471v1M408.5 469v2M409 468.5h1M410 467.5h1M411 466.5h1M412 465.5h2M414 464.5h1M415 463.5h1M416 462.5h1M417 461.5h8M425.5 461v1M426.5 462v2M427.5 464v1M428.5 465v1M429.5 466v2M430.5 468v1M431.5 469v1M432.5 470v2M433.5 472v2M434.5 474v2M435.5 476v3M436.5 479v2M437.5 481v3M438.5 484v2M439.5 486v3M440.5 489v2M441.5 491v1M441.5 492v2M442.5 494v2M443.5 496v3M444.5 499v2M445.5 501v3M446.5 504v2M447.5 506v3M448.5 509v2M449.5 511v1M449.5 512v2M450.5 514v2M451.5 516v2M452.5 518v2M453.5 520v2M454.5 522v2M455.5 524v2M456.5 526v2M457 528.5h1M458 529.5h2M460 530.5h1M461 531.5h1M462 532.5h2M464 533.5h1M465 534.5h5M470 535.5h3M473 535.5h1M474 534.5h1M475 533.5h1M476 532.5h2M478 531.5h1M479 530.5h1M480 529.5h1M481.5 527v2M482.5 525v2M483.5 523v2M484.5 521v2M485.5 519v2M486.5 517v2M487.5 515v2M488.5 513v2M489.5 511v2M490.5 508v3M491.5 505v3M492.5 502v3M493.5 499v3M494.5 496v3M495.5 493v3M496.5 490v3M497.5 489v1M497.5 487v2M498.5 483v4M499.5 480v3M500.5 477v3M501.5 473v4M502.5 470v3M503.5 467v3M504.5 463v4M505.5 462v1M505.5 460v2M506.5 457v3M507.5 454v3M508.5 451v3M509.5 449v2M510.5 446v3M511.5 443v3M512.5 440v3M513.5 439v1M513.5 437v2M514.5 435v2M515.5 433v2M516.5 431v2M517.5 429v2M518.5 427v2M519.5 425v2M520.5 423v2M521 422.5h1M522 421.5h1M523 420.5h1M524 419.5h2M526 418.5h1M527 417.5h1M528 416.5h1M529 415.5h3M532 414.5h4M536 413.5h1M537 413.5h3M540 414.5h4M544 415.5h1M545 415.5h1M546 416.5h2M548 417.5h2M550 418.5h1M551 419.5h2M553 420.5h1M554 421.5h1M555 422.5h1M556 423.5h2M558 424.5h1M559 425.5h1M560 426.5h1M561 427.5h1M562 428.5h1M563 429.5h1M564 430.5h1M565 431.5h1M566 432.5h1M567 433.5h1M568 434.5h1M569 435.5h2M571 436.5h2M573 437.5h2M575 438.5h2M577 439.5h5M582 438.5h3M585 438.5h1M586 437.5h2M588 436.5h2M590 435.5h1M591 434.5h2M593 433.5h1M594 432.5h1M595 431.5h1M596 430.5h2M598 429.5h1M599 428.5h1M600 427.5h1M601 426.5h1M602 425.5h2M604 424.5h2M606 423.5h1M607 422.5h2M609 421.5h5M614 420.5h3M617 420.5h1M618 421.5h2M620 422.5h2M622 423.5h1M623 424.5h2M625 425.5h1M626 426.5h1M627 427.5h1M628 428.5h1M629 429.5h1M630 430.5h1M631 431.5h1M632 432.5h1M633 433.5h1M634 434.5h1M635 435.5h1M636 436.5h2M638 437.5h1M639 438.5h1M640 439.5h1M641 440.5h3M644 441.5h4M648 442.5h1M649 442.5h2M651 441.5h2M653 440.5h2M655 439.5h2M657 438.5h1M658 437.5h2M660 436.5h1M661 435.5h1M662 434.5h2M664 433.5h1M665 432.5h1M666 431.5h2M668 430.5h2M670 429.5h1M671 428.5h2M673 427.5h3M676 426.5h4M680 425.5h1M681 425.5h5M686 426.5h3M689 426.5h5M694 425.5h3M697 425.5h2M699 424.5h3M702 423.5h2M704 422.5h1M705 422.5h2M707 421.5h3M710 420.5h2M712 419.5h1M713 419.5h8M721 419.5h1M722 420.5h2M724 421.5h1M725 422.5h1M726 423.5h2M728 424.5h1M729.5 425v1M730.5 426v2M731.5 428v2M732.5 430v2M733.5 432v1M734.5 433v2M735.5 435v2M736.5 437v2M737.5 439v1M738.5 440v2M739.5 442v2M740.5 444v2M741.5 446v2M742.5 448v2M743.5 450v2M744.5 452v2M745.5 454v1M746.5 455v2M747.5 457v1M748.5 458v2M749.5 460v1M750.5 461v2M751.5 463v1M752.5 464v2M753 466.5h1M754 467.5h2M756 468.5h2M758 469.5h1M759 470.5h2M761 471.5h5M766 470.5h3M769.5 470v1M770.5 469v1M771.5 468v1M772.5 467v1M773.5 465v2M774.5 464v1M775.5 463v1M776.5 462v1M777 461.5h1M778 460.5h1M779 459.5h1M780 458.5h2M782 457.5h1M783 456.5h1M784 455.5h1M785 454.5h1M786 453.5h2M788 452.5h1M789 451.5h1M790 450.5h2M792 449.5h1M793 448.5h3M796 447.5h4M800 446.5h1M801 446.5h3M804 445.5h4M808 444.5h1M809 444.5h1M810 443.5h2M812 442.5h2M814 441.5h1M815 440.5h2M817 439.5h1M818 438.5h2M820 437.5h1M821 436.5h1M822 435.5h2M824 434.5h1M825.5 433v1M826.5 432v1M827.5 431v1M828.5 430v1M829.5 428v2M830.5 427v1M831.5 426v1M832.5 425v1M833 424.5h1M834 423.5h1M835 422.5h1M836 421.5h2M838 420.5h1M839 419.5h1M840 418.5h1M841 417.5h2M843 416.5h3M846 415.5h2M848 414.5h1M849 414.5h5M854 413.5h3M857 413.5h8M865 413.5h3M868 414.5h4M872 415.5h1M873 415.5h3M876 416.5h4M880 417.5h1M881 417.5h5M886 418.5h3M889 418.5h5M894 419.5h3M897 419.5h5M902 418.5h3M905 418.5h3M908 419.5h4M912 420.5h1M913 420.5h1M914 421.5h2M916 422.5h2M918 423.5h1M919 424.5h2M921 425.5h1M922 426.5h1M923 427.5h1M924 428.5h2M926 429.5h1M927 430.5h1M928 431.5h1M929 432.5h2M931 433.5h2M933 434.5h2M935 435.5h2M937 436.5h5M942 437.5h4" stroke="#ff00ff"/><path d="M1.5 459v2M2.5 461v2M3.5 463v2M4.5 465v2M5.5 467v2M6.5 469v2M7.5 471v2M8.5 473v2M9.5 475v1M9.5 476v1M10.5 477v2M11.5 479v2M12.5 481v2M13.5 483v1M14.5 484v2M15.5 486v2M16.5 488v2M17 490.5h5M22 491.5h3M25.5 491v1M26.5 490v1M27.5 489v1M28.5 488v1M29.5 486v2M30.5 485v1M31.5 484v1M32.5 483v1M33.5 482v1M34.5 481v1M35.5 480v1M36.5 479v1M37.5 477v2M38.5 476v1M39.5 475v1M40.5 474v1M41.5 473v1M42.5 471v2M43.5 470v1M44.5 468v2M45.5 467v1M46.5 465v2M47.5 464v1M48.5 462v2M49.5 460v2M50.5 458v2M51.5 456v2M52.5 454v2M53.5 452v2M54.5 450v2M55.5 448v2M56.5 446v2M57.5 445v1M57.5 444v1M58.5 442v2M59.5 440v2M60.5 439v1M61.5 437v2M62.5 436v1M63.5 434v2M64.5 432v2M65 431.5h5M70 432.5h3M73.5 432v2M74.5 434v2M75.5 436v2M76.5 438v2M77.5 440v3M78.5 443v2M79.5 445v2M80.5 447v2M81.5 449v1M81.5 450v2M82.5 452v3M83.5 455v3M84.5 458v3M85.5 461v2M86.5 463v3M87.5 466v3M88.5 469v3M89.5 472v1M89.5 473v2M90.5 475v2M91.5 477v2M92.5 479v2M93.5 481v2M94.5 483v2M95.5 485v2M96.5 487v2M97.5 489v1M97.5 490v1M98.5 491v1M99.5 492v1M100.5 493v1M101.5 494v2M102.5 496v1M103.5 497v1M104.5 498v1M105 499.5h1M106 500.5h2M108 501.5h2M110 502.5h1M111 503.5h2M113 504.5h2M115 505.5h2M117 506.5h2M119 507.5h2M121 508.5h1M122 509.5h1M123 510.5h1M124 511.5h1M125 512.5h1M126 513.5h1M127 514.5h1M128 515.5h1M129 516.5h5M134 517.5h3M137 517.5h2M139 518.5h3M142 519.5h2M144 520.5h1M145.5 520v1M146.5 521v1M147.5 522v1M148.5 523v1M149.5 524v2M150.5 526v1M151.5 527v1M152.5 528v1M153.5 529v3M154.5 532v4M155.5 536v5M156.5 541v5M157.5 546v4M158.5 550v5M159.5 555v5M160.5 560v4M161.5 564v2M161.5 566v4M162.5 570v7M163.5 577v7M164.5 584v7M165.5 591v8M166.5 599v7M167.5 606v7M168.5 613v7M169.5 620v3M169.5 623v4M170.5 627v6M171.5 633v6M172.5 639v7M173.5 646v6M174.5 652v7M175.5 659v6M176.5 665v6M177.5 671v3M177.5 674v2M178.5 676v3M179.5 679v2M180.5 681v3M181.5 684v3M182.5 687v3M183.5 690v2M184.5 692v3M185.5 695v1M185 696.5h2M187 695.5h2M189 694.5h2M191 693.5h2M193.5 692v1M194.5 691v1M195.5 689v2M196.5 688v1M197.5 687v1M198.5 686v1M199.5 684v2M200.5 683v1M201 682.5h3M204 681.5h4M208 680.5h1M209 680.5h1M210 681.5h1M211 682.5h1M212 683.5h2M214 684.5h1M215 685.5h1M216 686.5h1M217 687.5h1M218 688.5h1M219 689.5h1M220 690.5h1M221 691.5h1M222 692.5h1M223 693.5h1M224 694.5h1M225 695.5h1M226 696.5h1M227 697.5h1M228 698.5h2M230 699.5h1M231 700.5h1M232 701.5h1M233 702.5h1M234 703.5h2M236 704.5h1M237 705.5h1M238 706.5h2M240 707.5h1M241 708.5h1M242 709.5h1M243 710.5h1M244 711.5h2M246 712.5h1M247 713.5h1M248 714.5h1M249.5 715v1M250.5 716v1M251.5 717v1M252.5 718v1M253.5 719v2M254.5 721v1M255.5 722v1M256.5 723v1M257 724.5h1M258 725.5h2M260 726.5h1M261 727.5h1M262 728.5h2M264 729.5h1M265 730.5h1M266 731.5h2M268 732.5h2M270 733.5h1M271 734.5h2M273 735.5h3M276 736.5h4M280 737.5h1M281 737.5h3M284 738.5h4M288 739.5h1M289 739.5h2M291 738.5h2M293 737.5h2M295 736.5h2M297 735.5h1M298 734.5h1M299 733.5h1M300 732.5h1M301 731.5h1M302 730.5h1M303 729.5h1M304 728.5h1M305.5 726v2M306.5 724v2M307.5 722v2M308.5 720v2M309.5 718v2M310.5 716v2M311.5 714v2M312.5 712v2M313.5 711v1M313.5 709v2M314.5 706v3M315.5 702v4M316.5 699v3M317.5 696v3M318.5 693v3M319.5 689v4M320.5 686v3M321.5 685v1M321.5 682v3M322.5 678v4M323.5 674v4M324.5 670v4M325.5 666v4M326.5 662v4M327.5 658v4M328.5 654v4M329.5 652v2M329.5 649v3M330.5 644v5M331.5 640v4M332.5 635v5M333.5 630v5M334.5 625v5M335.5 621v4M336.5 616v5M337.5 614v2M337.5 611v3M338.5 607v4M339.5 603v4M340.5 599v4M341.5 594v5M342.5 590v4M343.5 586v4M344.5 582v4M345.5 580v2M345.5 578v2M346.5 574v4M347.5 571v3M348.5 568v3M349.5 564v4M350.5 561v3M351.5 558v3M352.5 554v4M353.5 553v1M353.5 552v1M354.5 550v2M355.5 548v2M356.5 546v2M357.5 544v2M358.5 542v2M359.5 540v2M360.5 538v2M361.5 537v1M362.5 535v2M363.5 533v2M364.5 532v1M365.5 530v2M366.5 529v1M367.5 527v2M368.5 525v2M369.5 523v2M370.5 521v2M371.5 519v2M372.5 517v2M373.5 515v2M374.5 513v2M375.5 511v2M376.5 509v2M377.5 508v1M377.5 507v1M378.5 505v2M379.5 504v1M380.5 502v2M381.5 501v1M382.5 499v2M383.5 498v1M384.5 496v2M385.5 495v1M386.5 494v1M387.5 492v2M388.5 491v1M389.5 490v1M390.5 489v1M391.5 487v2M392.5 486v1M393.5 485v1M394.5 484v1M395.5 483v1M396.5 482v1M397.5 480v2M398.5 479v1M399.5 478v1M400.5 477v1M401.5 476v1M402.5 474v2M403.5 472v2M404.5 470v2M405.5 469v1M406.5 467v2M407.5 465v2M408.5 463v2M409.5 462v1M410.5 461v1M411.5 460v1M412.5 459v1M413.5 457v2M414.5 456v1M415.5 455v1M416.5 454v1M417 453.5h1M418 454.5h2M420 455.5h1M421 456.5h1M422 457.5h2M424 458.5h1M425.5 459v2M426.5 461v3M427.5 464v3M428.5 467v3M429.5 470v2M430.5 472v3M431.5 475v3M432.5 478v3M433.5 481v1M433.5 482v2M434.5 484v3M435.5 487v4M436.5 491v3M437.5 494v3M438.5 497v3M439.5 500v4M440.5 504v3M441.5 507v1M441.5 508v2M442.5 510v2M443.5 512v2M444.5 514v3M445.5 517v2M446.5 519v3M447.5 522v2M448.5 524v2M449.5 526v1M449.5 527v1M450.5 528v1M451.5 529v1M452.5 530v1M453.5 531v2M454.5 533v1M455.5 534v1M456.5 535v1M457 536.5h5M462 535.5h3M465 535.5h5M470 534.5h3M473.5 534v1M474.5 533v1M475.5 532v1M476.5 531v1M477.5 529v2M478.5 528v1M479.5 527v1M480.5 526v1M481.5 524v2M482.5 522v2M483.5 519v3M484.5 516v3M485.5 514v2M486.5 511v3M487.5 508v3M488.5 506v2M489.5 505v1M489.5 502v3M490.5 498v4M491.5 494v4M492.5 490v4M493.5 486v4M494.5 482v4M495.5 478v4M496.5 474v4M497.5 472v2M497.5 470v2M498.5 466v4M499.5 462v4M500.5 458v4M501.5 455v3M502.5 451v4M503.5 447v4M504.5 443v4M505.5 442v1M505.5 440v2M506.5 438v2M507.5 436v2M508.5 433v3M509.5 431v2M510.5 428v3M511.5 426v2M512.5 424v2M513.5 423v1M513 422.5h1M514 421.5h1M515 420.5h1M516 419.5h2M518 418.5h1M519 417.5h1M520 416.5h1M521 415.5h3M524 414.5h4M528 413.5h1M529 413.5h8M537 413.5h3M540 414.5h4M544 415.5h1M545 415.5h1M546 416.5h1M547 417.5h1M548 418.5h1M549 419.5h1M550 420.5h1M551 421.5h1M552 422.5h1M553.5 423v1M554.5 424v1M555.5 425v2M556.5 427v1M557.5 428v1M558.5 429v1M559.5 430v2M560.5 432v1M561.5 433v1M562.5 434v1M563.5 435v1M564.5 436v1M565.5 437v2M566.5 439v1M567.5 440v1M568.5 441v1M569 442.5h8M577 442.5h1M578 441.5h2M580 440.5h1M581 439.5h1M582 438.5h2M584 437.5h1M585.5 436v1M586.5 435v1M587.5 434v1M588.5 433v1M589.5 431v2M590.5 430v1M591.5 429v1M592.5 428v1M593 427.5h1M594 426.5h2M596 425.5h2M598 424.5h1M599 423.5h2M601 422.5h2M603 421.5h2M605 420.5h2M607 419.5h2M609 418.5h5M614 419.5h3M617 419.5h1M618 420.5h1M619 421.5h1M620 422.5h1M621 423.5h1M622 424.5h1M623 425.5h1M624 426.5h1M625.5 427v1M626.5 428v2M627.5 430v2M628.5 432v1M629.5 433v2M630.5 435v1M631.5 436v2M632.5 438v2M633 440.5h1M634 441.5h1M635 442.5h1M636 443.5h1M637 444.5h1M638 445.5h1M639 446.5h1M640 447.5h1M641 448.5h2M643 447.5h2M645 446.5h2M647 445.5h2M649.5 444v1M650.5 442v2M651.5 441v1M652.5 439v2M653.5 438v1M654.5 436v2M655.5 435v1M656.5 433v2M657 432.5h1M658 431.5h1M659 430.5h1M660 429.5h2M662 428.5h1M663 427.5h1M664 426.5h1M665 425.5h5M670 424.5h3M673 424.5h2M675 425.5h3M678 426.5h2M680 427.5h1M681 427.5h8M689 427.5h2M691 426.5h3M694 425.5h2M696 424.5h1M697 424.5h2M699 423.5h2M701 422.5h2M703 421.5h2M705 420.5h2M707 419.5h3M710 418.5h2M712 417.5h1M713 417.5h8M721.5 417v1M722.5 418v2M723.5 420v1M724.5 421v2M725.5 423v1M726.5 424v2M727.5 426v1M728.5 427v2M729.5 429v2M730.5 431v2M731.5 433v2M732.5 435v3M733.5 438v2M734.5 440v3M735.5 443v2M736.5 445v2M737.5 447v1M737.5 448v2M738.5 450v2M739.5 452v2M740.5 454v2M741.5 456v3M742.5 459v2M743.5 461v2M744.5 463v2M745.5 465v1M745 466.5h1M746 467.5h1M747 468.5h1M748 469.5h1M749 470.5h1M750 471.5h1M751 472.5h1M752 473.5h1M753 474.5h5M758 473.5h3M761 473.5h1M762 472.5h1M763 471.5h1M764 470.5h2M766 469.5h1M767 468.5h1M768 467.5h1M769.5 466v1M770.5 465v1M771.5 463v2M772.5 462v1M773.5 461v1M774.5 460v1M775.5 458v2M776.5 457v1M777 456.5h1M778 455.5h1M779 454.5h1M780 453.5h1M781 452.5h1M782 451.5h1M783 450.5h1M784 449.5h1M785 448.5h1M786 447.5h2M788 446.5h2M790 445.5h1M791 444.5h2M793 443.5h2M795 444.5h3M798 445.5h2M800 446.5h1M801 446.5h5M806 445.5h3M809 445.5h1M810 444.5h1M811 443.5h1M812 442.5h2M814 441.5h1M815 440.5h1M816 439.5h1M817.5 438v1M818.5 436v2M819.5 435v1M820.5 433v2M821.5 432v1M822.5 430v2M823.5 429v1M824.5 427v2M825.5 426v1M826.5 425v1M827.5 424v1M828.5 423v1M829.5 421v2M830.5 420v1M831.5 419v1M832.5 418v1M833 417.5h2M835 416.5h2M837 415.5h2M839 414.5h2M841 413.5h8M849 413.5h8M857 413.5h5M862 414.5h3M865 414.5h3M868 415.5h4M872 416.5h1M873 416.5h2M875 417.5h3M878 418.5h2M880 419.5h1M881 419.5h5M886 420.5h3M889 420.5h3M892 419.5h4M896 418.5h1M897 418.5h5M902 417.5h3M905 417.5h2M907 418.5h2M909 419.5h2M911 420.5h2M913 421.5h1M914 422.5h1M915 423.5h1M916 424.5h1M917 425.5h1M918 426.5h1M919 427.5h1M920 428.5h1M921 429.5h1M922 430.5h1M923 431.5h1M924 432.5h1M925 433.5h1M926 434.5h1M927 435.5h1M928 436.5h1M929 437.5h2M931 438.5h3M934 439.5h2M936 440.5h1M937 440.5h2M939 439.5h3M942 438.5h2M944 437.5h2" stroke="#ff00ff"/><path d="M1.5 462v2M2.5 464v3M3.5 467v3M4.5 470v3M5.5 473v2M6.5 475v3M7.5 478v3M8.5 481v3M9.5 484v1M9.5 485v1M10.5 486v2M11.5 488v1M12.5 489v2M13.5 491v1M14.5 492v2M15.5 494v1M16.5 495v2M17.5 497v1M18.5 496v1M19.5 495v1M20.5 494v1M21.5 492v2M22.5 491v1M23.5 490v1M24.5 489v1M25.5 488v1M26.5 486v2M27.5 485v1M28.5 483v2M29.5 482v1M30.5 480v2M31.5 479v1M32.5 477v2M33 476.5h1M34 475.5h2M36 474.5h1M37 473.5h1M38 472.5h2M40 471.5h1M41.5 470v1M42.5 468v2M43.5 466v2M44.5 465v1M45.5 463v2M46.5 462v1M47.5 460v2M48.5 458v2M49.5 456v2M50.5 453v3M51.5 451v2M52.5 448v3M53.5 445v3M54.5 442v3M55.5 440v2M56.5 437v3M57.5 436v1M57.5 435v1M58.5 434v1M59.5 432v2M60.5 431v1M61.5 430v1M62.5 429v1M63.5 427v2M64.5 426v1M65.5 425v1M66.5 426v1M67.5 427v2M68.5 429v1M69.5 430v1M70.5 431v1M71.5 432v2M72.5 434v1M73.5 435v2M74.5 437v3M75.5 440v3M76.5 443v3M77.5 446v3M78.5 449v3M79.5 452v3M80.5 455v3M81.5 458v1M81.5 459v2M82.5 461v3M83.5 464v3M84.5 467v3M85.5 470v3M86.5 473v3M87.5 476v3M88.5 479v3M89.5 482v1M89.5 483v1M90.5 484v2M91.5 486v2M92.5 488v2M93.5 490v1M94.5 491v2M95.5 493v2M96.5 495v2M97 497.5h2M99 498.5h3M102 499.5h2M104 500.5h1M105 500.5h1M106 501.5h2M108 502.5h2M110 503.5h1M111 504.5h2M113 505.5h1M114 506.5h2M116 507.5h2M118 508.5h1M119 509.5h2M121.5 510v1M122.5 511v1M123.5 512v1M124.5 513v1M125.5 514v2M126.5 516v1M127.5 517v1M128.5 518v1M129 519.5h8M137 519.5h8M145.5 519v1M146.5 520v2M147.5 522v2M148.5 524v2M149.5 526v2M150.5 528v2M151.5 530v2M152.5 532v2M153.5 534v4M154.5 538v6M155.5 544v6M156.5 550v6M157.5 556v6M158.5 562v6M159.5 568v6M160.5 574v6M161.5 580v2M161.5 582v5M162.5 587v8M163.5 595v9M164.5 604v8M165.5 612v9M166.5 621v8M167.5 629v9M168.5 638v8M169.5 646v4M169.5 650v3M170.5 653v6M171.5 659v6M172.5 665v6M173.5 671v5M174.5 676v6M175.5 682v6M176.5 688v6M177.5 694v2M177 696.5h2M179 697.5h2M181 698.5h2M183 699.5h2M185.5 700v1M186.5 698v2M187.5 696v2M188.5 694v2M189.5 692v2M190.5 690v2M191.5 688v2M192.5 686v2M193 685.5h1M194 684.5h1M195 683.5h1M196 682.5h1M197 681.5h1M198 680.5h1M199 679.5h1M200 678.5h1M201 677.5h2M203 678.5h2M205 679.5h2M207 680.5h2M209.5 681v1M210.5 682v1M211.5 683v2M212.5 685v1M213.5 686v1M214.5 687v1M215.5 688v2M216.5 690v1M217 691.5h1M218 692.5h1M219 693.5h1M220 694.5h1M221 695.5h1M222 696.5h1M223 697.5h1M224 698.5h1M225 699.5h1M226 700.5h2M228 701.5h2M230 702.5h1M231 703.5h2M233 704.5h1M234 705.5h2M236 706.5h1M237 707.5h1M238 708.5h2M240 709.5h1M241.5 710v1M242.5 711v1M243.5 712v1M244.5 713v1M245.5 714v2M246.5 716v1M247.5 717v1M248.5 718v1M249 719.5h1M250 720.5h1M251 721.5h1M252 722.5h1M253 723.5h1M254 724.5h1M255 725.5h1M256 726.5h1M257 727.5h1M258 728.5h2M260 729.5h2M262 730.5h1M263 731.5h2M265 732.5h2M267 733.5h2M269 734.5h2M271 735.5h2M273 736.5h2M275 737.5h3M278 738.5h2M280 739.5h1M281 739.5h5M286 740.5h3M289 740.5h1M290 739.5h1M291 738.5h1M292 737.5h2M294 736.5h1M295 735.5h1M296 734.5h1M297.5 733v1M298.5 732v1M299.5 730v2M300.5 729v1M301.5 728v1M302.5 727v1M303.5 725v2M304.5 724v1M305.5 722v2M306.5 720v2M307.5 717v3M308.5 715v2M309.5 712v3M310.5 710v2M311.5 707v3M312.5 705v2M313.5 704v1M313.5 702v2M314.5 698v4M315.5 694v4M316.5 690v4M317.5 687v3M318.5 683v4M319.5 679v4M320.5 675v4M321.5 674v1M321.5 671v3M322.5 667v4M323.5 662v5M324.5 658v4M325.5 653v5M326.5 649v4M327.5 644v5M328.5 640v4M329.5 638v2M329.5 635v3M330.5 630v5M331.5 625v5M332.5 620v5M333.5 616v4M334.5 611v5M335.5 606v5M336.5 601v5M337.5 599v2M337.5 596v3M338.5 592v4M339.5 588v4M340.5 584v4M341.5 580v4M342.5 576v4M343.5 572v4M344.5 568v4M345.5 566v2M345.5 564v2M346.5 561v3M347.5 558v3M348.5 555v3M349.5 553v2M350.5 550v3M351.5 547v3M352.5 544v3M353.5 543v1M353.5 542v1M354.5 541v1M355.5 539v2M356.5 538v1M357.5 537v1M358.5 536v1M359.5 534v2M360.5 533v1M361.5 532v1M362.5 530v2M363.5 529v1M364.5 528v1M365.5 526v2M366.5 525v1M367.5 524v1M368.5 522v2M369.5 520v2M370.5 518v2M371.5 515v3M372.5 512v3M373.5 510v2M374.5 507v3M375.5 504v3M376.5 502v2M377.5 501v1M377.5 500v1M378.5 498v2M379.5 497v1M380.5 495v2M381.5 494v1M382.5 492v2M383.5 491v1M384.5 489v2M385 488.5h2M387 487.5h2M389 486.5h2M391 485.5h2M393.5 484v1M394.5 482v2M395.5 481v1M396.5 480v1M397.5 478v2M398.5 477v1M399.5 476v1M400.5 474v2M401.5 472v2M402.5 470v2M403.5 468v2M404.5 465v3M405.5 463v2M406.5 460v3M407.5 458v2M408.5 456v2M409.5 455v1M409 454.5h1M410 453.5h2M412 452.5h2M414 451.5h1M415 450.5h2M417.5 449v1M418.5 450v2M419.5 452v2M420.5 454v2M421.5 456v2M422.5 458v2M423.5 460v2M424.5 462v2M425.5 464v2M426.5 466v4M427.5 470v4M428.5 474v3M429.5 477v4M430.5 481v3M431.5 484v4M432.5 488v4M433.5 492v1M433.5 493v2M434.5 495v4M435.5 499v3M436.5 502v3M437.5 505v4M438.5 509v3M439.5 512v3M440.5 515v4M441.5 519v1M441.5 520v1M442.5 521v2M443.5 523v2M444.5 525v1M445.5 526v2M446.5 528v1M447.5 529v2M448.5 531v2M449 533.5h2M451 534.5h2M453 535.5h2M455 536.5h2M457 537.5h3M460 536.5h4M464 535.5h1M465 535.5h3M468 534.5h4M472 533.5h1M473.5 533v1M474.5 531v2M475.5 530v1M476.5 529v1M477.5 527v2M478.5 526v1M479.5 525v1M480.5 523v2M481.5 521v2M482.5 517v4M483.5 513v4M484.5 510v3M485.5 506v4M486.5 503v3M487.5 499v4M488.5 495v4M489.5 494v1M489.5 491v3M490.5 487v4M491.5 482v5M492.5 477v5M493.5 473v4M494.5 468v5M495.5 463v5M496.5 459v4M497.5 457v2M497.5 455v2M498.5 451v4M499.5 448v3M500.5 445v3M501.5 441v4M502.5 438v3M503.5 435v3M504.5 431v4M505.5 430v1M505.5 429v1M506.5 427v2M507.5 425v2M508.5 424v1M509.5 422v2M510.5 421v1M511.5 419v2M512.5 417v2M513 416.5h2M515 415.5h3M518 414.5h2M520 413.5h1M521 413.5h8M529 413.5h8M537 413.5h2M539 414.5h3M542 415.5h2M544 416.5h1M545.5 416v1M546.5 417v1M547.5 418v2M548.5 420v1M549.5 421v1M550.5 422v1M551.5 423v2M552.5 425v1M553.5 426v1M554.5 427v2M555.5 429v1M556.5 430v2M557.5 432v1M558.5 433v2M559.5 435v1M560.5 436v2M561 438.5h1M562 439.5h1M563 440.5h1M564 441.5h2M566 442.5h1M567 443.5h1M568 444.5h1M569 445.5h2M571 444.5h2M573 443.5h2M575 442.5h2M577 441.5h1M578 440.5h1M579 439.5h1M580 438.5h1M581 437.5h1M582 436.5h1M583 435.5h1M584 434.5h1M585.5 433v1M586.5 432v1M587.5 431v1M588.5 430v1M589.5 428v2M590.5 427v1M591.5 426v1M592.5 425v1M593 424.5h2M595 423.5h2M597 422.5h2M599 421.5h2M601 420.5h2M603 419.5h3M606 418.5h2M608 417.5h1M609 417.5h2M611 418.5h3M614 419.5h2M616 420.5h1M617.5 420v1M618.5 421v2M619.5 423v1M620.5 424v1M621.5 425v2M622.5 427v1M623.5 428v1M624.5 429v2M625.5 431v1M626.5 432v2M627.5 434v2M628.5 436v2M629.5 438v2M630.5 440v2M631.5 442v2M632.5 444v2M633 446.5h1M634 447.5h2M636 448.5h2M638 449.5h1M639 450.5h2M641.5 451v1M642.5 450v1M643.5 448v2M644.5 447v1M645.5 446v1M646.5 445v1M647.5 443v2M648.5 442v1M649.5 441v1M650.5 439v2M651.5 437v2M652.5 435v2M653.5 433v2M654.5 431v2M655.5 429v2M656.5 427v2M657 426.5h2M659 425.5h3M662 424.5h2M664 423.5h1M665 423.5h2M667 424.5h3M670 425.5h2M672 426.5h1M673 426.5h3M676 427.5h4M680 428.5h1M681 428.5h3M684 427.5h4M688 426.5h1M689 426.5h2M691 425.5h3M694 424.5h2M696 423.5h1M697 423.5h2M699 422.5h2M701 421.5h2M703 420.5h2M705 419.5h2M707 418.5h2M709 417.5h2M711 416.5h2M713 415.5h2M715 416.5h3M718 417.5h2M720 418.5h1M721.5 418v2M722.5 420v2M723.5 422v2M724.5 424v2M725.5 426v2M726.5 428v2M727.5 430v2M728.5 432v2M729.5 434v2M730.5 436v3M731.5 439v3M732.5 442v3M733.5 445v3M734.5 448v3M735.5 451v3M736.5 454v3M737.5 457v1M737.5 458v2M738.5 460v2M739.5 462v2M740.5 464v2M741.5 466v2M742.5 468v2M743.5 470v2M744.5 472v2M745 474.5h3M748 475.5h4M752 476.5h1M753 476.5h1M754 475.5h2M756 474.5h2M758 473.5h1M759 472.5h2M761 471.5h1M762 470.5h1M763 469.5h1M764 468.5h2M766 467.5h1M767 466.5h1M768 465.5h1M769.5 464v1M770.5 462v2M771.5 461v1M772.5 460v1M773.5 458v2M774.5 457v1M775.5 456v1M776.5 454v2M777.5 453v1M778.5 452v1M779.5 451v1M780.5 450v1M781.5 448v2M782.5 447v1M783.5 446v1M784.5 445v1M785 444.5h3M788 443.5h4M792 442.5h1M793 442.5h1M794 443.5h2M796 444.5h1M797 445.5h1M798 446.5h2M800 447.5h1M801 448.5h2M803 447.5h3M806 446.5h2M808 445.5h1M809.5 445v1M810.5 443v2M811.5 442v1M812.5 440v2M813.5 439v1M814.5 437v2M815.5 436v1M816.5 434v2M817.5 433v1M818.5 431v2M819.5 430v1M820.5 428v2M821.5 427v1M822.5 425v2M823.5 424v1M824.5 422v2M825 421.5h1M826 420.5h1M827 419.5h1M828 418.5h2M830 417.5h1M831 416.5h1M832 415.5h1M833 414.5h5M838 413.5h3M841 413.5h8M849 413.5h8M857 413.5h5M862 414.5h3M865 414.5h2M867 415.5h2M869 416.5h2M871 417.5h2M873 418.5h2M875 419.5h3M878 420.5h2M880 421.5h1M881 421.5h5M886 420.5h3M889 420.5h2M891 419.5h3M894 418.5h2M896 417.5h1M897 417.5h8M905 417.5h1M906 418.5h2M908 419.5h1M909 420.5h1M910 421.5h2M912 422.5h1M913.5 423v1M914.5 424v1M915.5 425v2M916.5 427v1M917.5 428v1M918.5 429v1M919.5 430v2M920.5 432v1M921 433.5h1M922 434.5h1M923 435.5h1M924 436.5h1M925 437.5h1M926 438.5h1M927 439.5h1M928 440.5h1M929 441.5h5M934 440.5h3M937 440.5h1M938 439.5h2M940 438.5h1M941 437.5h1M942 436.5h2M944 435.5h1M945 434.5h1" stroke="#ee82ee"/><path d="M1.5 477v2M2.5 479v4M3.5 483v3M4.5 486v4M5.5 490v3M6.5 493v4M7.5 497v3M8.5 500v4M9.5 504v1M9 505.5h1M10 504.5h1M11 503.5h1M12 502.5h1M13 501.5h1M14 500.5h1M15 499.5h1M16 498.5h1M17.5 496v2M18.5 493v3M19.5 490v3M20.5 487v3M21.5 485v2M22.5 482v3M23.5 479v3M24.5 476v3M25.5 475v1M25 474.5h2M27 473.5h3M30 472.5h2M32 471.5h1M33 471.5h2M35 470.5h3M38 469.5h2M40 468.5h1M41.5 467v2M42.5 464v3M43.5 460v4M44.5 457v3M45.5 454v3M46.5 451v3M47.5 447v4M48.5 444v3M49.5 443v1M49.5 441v2M50.5 438v3M51.5 435v3M52.5 432v3M53.5 428v4M54.5 425v3M55.5 422v3M56.5 419v3M57.5 418v1M57.5 417v1M58.5 418v1M59.5 419v1M60.5 420v1M61.5 421v2M62.5 423v1M63.5 424v1M64.5 425v1M65.5 426v2M66.5 428v3M67.5 431v3M68.5 434v3M69.5 437v3M70.5 440v3M71.5 443v3M72.5 446v3M73.5 449v1M73.5 450v2M74.5 452v4M75.5 456v4M76.5 460v4M77.5 464v3M78.5 467v4M79.5 471v4M80.5 475v4M81.5 479v1M81.5 480v2M82.5 482v2M83.5 484v2M84.5 486v3M85.5 489v2M86.5 491v3M87.5 494v2M88.5 496v2M89.5 498v1M89 499.5h3M92 500.5h4M96 501.5h1M97 501.5h8M105.5 501v1M106.5 502v1M107.5 503v1M108.5 504v1M109.5 505v2M110.5 507v1M111.5 508v1M112.5 509v1M113 510.5h2M115 511.5h3M118 512.5h2M120 513.5h1M121.5 513v1M122.5 514v2M123.5 516v2M124.5 518v2M125.5 520v2M126.5 522v2M127.5 524v2M128.5 526v2M129.5 527v2M130.5 525v2M131.5 523v2M132.5 521v2M133.5 519v2M134.5 517v2M135.5 515v2M136.5 513v2M137.5 512v1M137.5 511v1M138.5 512v2M139.5 514v1M140.5 515v2M141.5 517v1M142.5 518v2M143.5 520v1M144.5 521v2M145.5 523v2M146.5 525v4M147.5 529v4M148.5 533v4M149.5 537v3M150.5 540v4M151.5 544v4M152.5 548v4M153.5 552v1M153.5 553v6M154.5 559v10M155.5 569v10M156.5 579v10M157.5 589v10M158.5 599v10M159.5 609v10M160.5 619v10M161.5 629v4M161.5 633v5M162.5 638v9M163.5 647v8M164.5 655v9M165.5 664v9M166.5 673v9M167.5 682v8M168.5 690v9M169.5 699v4M169 703.5h1M170 704.5h1M171 705.5h1M172 706.5h1M173 707.5h1M174 708.5h1M175 709.5h1M176 710.5h1M177.5 710v2M178.5 707v3M179.5 704v3M180.5 701v3M181.5 699v2M182.5 696v3M183.5 693v3M184.5 690v3M185.5 689v1M185.5 688v1M186.5 686v2M187.5 684v2M188.5 682v2M189.5 680v2M190.5 678v2M191.5 676v2M192.5 674v2M193 673.5h1M194 674.5h2M196 675.5h2M198 676.5h1M199 677.5h2M201.5 678v1M202.5 679v1M203.5 680v2M204.5 682v1M205.5 683v1M206.5 684v1M207.5 685v2M208.5 687v1M209.5 688v1M210.5 689v2M211.5 691v1M212.5 692v1M213.5 693v2M214.5 695v1M215.5 696v1M216.5 697v2M217 699.5h2M219 700.5h2M221 701.5h2M223 702.5h2M225 703.5h2M227 704.5h2M229 705.5h2M231 706.5h2M233.5 707v1M234.5 708v1M235.5 709v1M236.5 710v1M237.5 711v2M238.5 713v1M239.5 714v1M240.5 715v1M241.5 716v1M242.5 717v1M243.5 718v1M244.5 719v1M245.5 720v2M246.5 722v1M247.5 723v1M248.5 724v1M249.5 725v1M250.5 726v1M251.5 727v1M252.5 728v1M253.5 729v2M254.5 731v1M255.5 732v1M256.5 733v1M257 734.5h8M265 734.5h2M267 735.5h2M269 736.5h2M271 737.5h2M273 738.5h2M275 739.5h3M278 740.5h2M280 741.5h1M281 741.5h3M284 740.5h4M288 739.5h1M289.5 739v1M290.5 737v2M291.5 735v2M292.5 733v2M293.5 732v1M294.5 730v2M295.5 728v2M296.5 726v2M297.5 725v1M298.5 724v1M299.5 722v2M300.5 721v1M301.5 720v1M302.5 719v1M303.5 717v2M304.5 716v1M305.5 713v3M306.5 709v4M307.5 705v4M308.5 701v4M309.5 697v4M310.5 693v4M311.5 689v4M312.5 685v4M313.5 684v1M313.5 681v3M314.5 677v4M315.5 673v4M316.5 668v5M317.5 664v4M318.5 659v5M319.5 655v4M320.5 651v4M321.5 649v2M321.5 646v3M322.5 642v4M323.5 637v5M324.5 632v5M325.5 628v4M326.5 623v5M327.5 618v5M328.5 614v4M329.5 612v2M329.5 609v3M330.5 604v5M331.5 598v6M332.5 593v5M333.5 588v5M334.5 583v5M335.5 577v6M336.5 572v5M337.5 570v2M337.5 568v2M338.5 565v3M339.5 562v3M340.5 559v3M341.5 557v2M342.5 554v3M343.5 551v3M344.5 548v3M345.5 547v1M345.5 545v2M346.5 543v2M347.5 541v2M348.5 539v2M349.5 537v2M350.5 535v2M351.5 533v2M352.5 531v2M353 530.5h3M356 529.5h4M360 528.5h1M361.5 527v2M362.5 525v2M363.5 523v2M364.5 521v2M365.5 518v3M366.5 516v2M367.5 514v2M368.5 512v2M369.5 511v1M369.5 509v2M370.5 505v4M371.5 501v4M372.5 497v4M373.5 494v3M374.5 490v4M375.5 486v4M376.5 482v4M377.5 481v1M377 480.5h1M378 481.5h1M379 482.5h1M380 483.5h1M381 484.5h1M382 485.5h1M383 486.5h1M384 487.5h1M385 488.5h1M386 487.5h2M388 486.5h1M389 485.5h1M390 484.5h2M392 483.5h1M393.5 481v2M394.5 478v3M395.5 475v3M396.5 472v3M397.5 470v2M398.5 467v3M399.5 464v3M400.5 461v3M401.5 460v1M401.5 458v2M402.5 456v2M403.5 454v2M404.5 451v3M405.5 449v2M406.5 446v3M407.5 444v2M408.5 442v2M409.5 441v1M409.5 440v1M410.5 441v2M411.5 443v2M412.5 445v2M413.5 447v2M414.5 449v2M415.5 451v2M416.5 453v2M417.5 455v2M418.5 457v4M419.5 461v3M420.5 464v4M421.5 468v3M422.5 471v4M423.5 475v3M424.5 478v4M425.5 482v1M425.5 483v3M426.5 486v4M427.5 490v4M428.5 494v5M429.5 499v4M430.5 503v5M431.5 508v4M432.5 512v4M433.5 516v2M433.5 518v2M434.5 520v2M435.5 522v2M436.5 524v2M437.5 526v3M438.5 529v2M439.5 531v2M440.5 533v2M441.5 535v1M441 536.5h5M446 537.5h3M449 537.5h3M452 538.5h4M456 539.5h1M457.5 539v1M458.5 538v1M459.5 537v1M460.5 536v1M461.5 534v2M462.5 533v1M463.5 532v1M464.5 531v1M465 530.5h2M467 531.5h2M469 532.5h2M471 533.5h2M473.5 533v2M474.5 529v4M475.5 526v3M476.5 523v3M477.5 519v4M478.5 516v3M479.5 513v3M480.5 509v4M481.5 508v1M481.5 505v3M482.5 500v5M483.5 494v6M484.5 489v5M485.5 484v5M486.5 479v5M487.5 473v6M488.5 468v5M489.5 466v2M489.5 463v3M490.5 459v4M491.5 455v4M492.5 450v5M493.5 446v4M494.5 441v5M495.5 437v4M496.5 433v4M497.5 431v2M497.5 430v1M498.5 428v2M499.5 426v2M500.5 424v2M501.5 422v2M502.5 420v2M503.5 418v2M504.5 416v2M505 415.5h3M508 414.5h4M512 413.5h1M513 413.5h8M521 413.5h8M529 413.5h8M537 413.5h1M538 414.5h1M539 415.5h1M540 416.5h2M542 417.5h1M543 418.5h1M544 419.5h1M545.5 420v2M546.5 422v2M547.5 424v2M548.5 426v2M549.5 428v2M550.5 430v2M551.5 432v2M552.5 434v2M553.5 436v1M553 437.5h1M554 438.5h1M555 439.5h1M556 440.5h1M557 441.5h1M558 442.5h1M559 443.5h1M560 444.5h1M561 445.5h2M563 446.5h3M566 447.5h2M568 448.5h1M569.5 448v1M570.5 446v2M571.5 444v2M572.5 442v2M573.5 441v1M574.5 439v2M575.5 437v2M576.5 435v2M577 434.5h1M578 433.5h1M579 432.5h1M580 431.5h1M581 430.5h1M582 429.5h1M583 428.5h1M584 427.5h1M585 426.5h1M586 425.5h1M587 424.5h1M588 423.5h1M589 422.5h1M590 421.5h1M591 420.5h1M592 419.5h1M593 418.5h5M598 419.5h3M601 419.5h2M603 418.5h3M606 417.5h2M608 416.5h1M609 416.5h1M610 417.5h1M611 418.5h1M612 419.5h1M613 420.5h1M614 421.5h1M615 422.5h1M616 423.5h1M617.5 424v2M618.5 426v2M619.5 428v3M620.5 431v2M621.5 433v3M622.5 436v2M623.5 438v3M624.5 441v2M625.5 443v1M625.5 444v1M626.5 445v2M627.5 447v1M628.5 448v2M629.5 450v1M630.5 451v2M631.5 453v1M632.5 454v2M633 456.5h1M634 455.5h1M635 454.5h1M636 453.5h1M637 452.5h1M638 451.5h1M639 450.5h1M640 449.5h1M641.5 447v2M642.5 445v2M643.5 443v2M644.5 440v3M645.5 438v2M646.5 435v3M647.5 433v2M648.5 431v2M649.5 430v1M649.5 429v1M650.5 427v2M651.5 425v2M652.5 424v1M653.5 422v2M654.5 421v1M655.5 419v2M656.5 417v2M657.5 416v1M658.5 417v2M659.5 419v1M660.5 420v1M661.5 421v2M662.5 423v1M663.5 424v1M664.5 425v2M665 427.5h3M668 428.5h4M672 429.5h1M673 429.5h5M678 428.5h3M681 428.5h1M682 427.5h2M684 426.5h1M685 425.5h1M686 424.5h2M688 423.5h1M689 422.5h8M697 422.5h1M698 421.5h1M699 420.5h1M700 419.5h1M701 418.5h1M702 417.5h1M703 416.5h1M704 415.5h1M705 414.5h5M710 413.5h3M713.5 413v1M714.5 414v2M715.5 416v1M716.5 417v1M717.5 418v2M718.5 420v1M719.5 421v1M720.5 422v2M721.5 424v2M722.5 426v4M723.5 430v3M724.5 433v4M725.5 437v3M726.5 440v4M727.5 444v3M728.5 447v4M729.5 451v1M729.5 452v2M730.5 454v3M731.5 457v3M732.5 460v3M733.5 463v3M734.5 466v3M735.5 469v3M736.5 472v3M737.5 475v1M737 476.5h2M739 477.5h2M741 478.5h2M743 479.5h2M745 480.5h1M746 479.5h1M747 478.5h1M748 477.5h2M750 476.5h1M751 475.5h1M752 474.5h1M753 473.5h1M754 472.5h1M755 471.5h1M756 470.5h2M758 469.5h1M759 468.5h1M760 467.5h1M761 466.5h1M762 465.5h1M763 464.5h1M764 463.5h2M766 462.5h1M767 461.5h1M768 460.5h1M769.5 458v2M770.5 456v2M771.5 454v2M772.5 452v2M773.5 450v2M774.5 448v2M775.5 446v2M776.5 444v2M777.5 443v1M777 442.5h5M782 441.5h3M785 441.5h2M787 442.5h3M790 443.5h2M792 444.5h1M793.5 444v1M794.5 445v1M795.5 446v2M796.5 448v1M797.5 449v1M798.5 450v1M799.5 451v2M800.5 453v1M801.5 453v2M802.5 451v2M803.5 449v2M804.5 447v2M805.5 445v2M806.5 443v2M807.5 441v2M808.5 439v2M809.5 438v1M809.5 437v1M810.5 435v2M811.5 433v2M812.5 431v2M813.5 430v1M814.5 428v2M815.5 426v2M816.5 424v2M817.5 423v1M818.5 422v1M819.5 420v2M820.5 419v1M821.5 418v1M822.5 417v1M823.5 415v2M824.5 414v1M825 413.5h8M833 413.5h8M841 413.5h8M849 413.5h8M857 413.5h3M860 414.5h4M864 415.5h1M865 415.5h1M866 416.5h1M867 417.5h1M868 418.5h2M870 419.5h1M871 420.5h1M872 421.5h1M873 422.5h5M878 421.5h3M881 421.5h2M883 420.5h3M886 419.5h2M888 418.5h1M889 418.5h2M891 417.5h2M893 416.5h2M895 415.5h2M897 414.5h1M898 415.5h2M900 416.5h2M902 417.5h1M903 418.5h2M905.5 419v1M906.5 420v2M907.5 422v1M908.5 423v1M909.5 424v2M910.5 426v1M911.5 427v1M912.5 428v2M913.5 430v1M914.5 431v2M915.5 433v1M916.5 434v1M917.5 435v2M918.5 437v1M919.5 438v1M920.5 439v2M921 441.5h2M923 442.5h2M925 443.5h2M927 444.5h2M929.5 445v1M930.5 444v1M931.5 442v2M932.5 441v1M933.5 440v1M934.5 439v1M935.5 437v2M936.5 436v1M937 435.5h1M938 434.5h2M940 433.5h2M942 432.5h1M943 431.5h2M945 430.5h1" stroke="#ffffff"/></g>
<g shape-rendering="auto" clip-path="url(#cpInd)"><circle cx="9.7" cy="467.5" r="4.2" fill="#ff0000"/><circle cx="25.7" cy="475.5" r="4.2" fill="#00ff00"/><circle cx="73.5" cy="453.7" r="4.2" fill="#ff0000"/><circle cx="289.5" cy="730.5" r="4.2" fill="#00ff00"/><circle cx="425.5" cy="474.5" r="4.2" fill="#ff0000"/><circle cx="481.5" cy="520.5" r="4.2" fill="#00ff00"/><circle cx="545.5" cy="420.5" r="4.2" fill="#ff0000"/><circle cx="633.5" cy="431.7" r="4.2" fill="#00ff00"/><circle cx="657.5" cy="427.1" r="4.2" fill="#ff0000"/><circle cx="681.5" cy="434.5" r="4.2" fill="#00ff00"/><circle cx="713.5" cy="420.5" r="4.2" fill="#ff0000"/><circle cx="785.5" cy="462.7" r="4.2" fill="#00ff00"/><circle cx="897.5" cy="414.7" r="4.2" fill="#ff0000"/></g>
<rect x="0" y="0" width="948" height="1" fill="#fff"/><rect x="0" y="0" width="1" height="383" fill="#fff"/><rect x="0" y="384" width="1" height="360" fill="#fff"/><rect x="0" y="382" width="948" height="1" fill="#fff"/><rect x="0" y="384" width="948" height="1" fill="#fff"/><rect x="947" y="0" width="1" height="383" fill="#fff"/><rect x="947" y="384" width="1" height="360" fill="#fff"/><rect x="0" y="742" width="948" height="2" fill="#fff"/><rect x="1010" y="0" width="2" height="763" fill="#fff"/><rect x="948" y="35" width="2" height="1" fill="#fff"/><rect x="948" y="90" width="2" height="1" fill="#fff"/><rect x="948" y="144" width="2" height="1" fill="#fff"/><rect x="948" y="198" width="2" height="1" fill="#fff"/><rect x="948" y="253" width="2" height="1" fill="#fff"/><rect x="948" y="307" width="2" height="1" fill="#fff"/><rect x="948" y="361" width="2" height="1" fill="#fff"/><rect x="948" y="386" width="1" height="1" fill="#fff"/><rect x="1" y="744" width="1" height="3" fill="#fff"/><rect x="97" y="744" width="1" height="3" fill="#fff"/><rect x="193" y="744" width="1" height="3" fill="#fff"/><rect x="289" y="744" width="1" height="3" fill="#fff"/><rect x="385" y="744" width="1" height="3" fill="#fff"/><rect x="481" y="744" width="1" height="3" fill="#fff"/><rect x="577" y="744" width="1" height="3" fill="#fff"/><rect x="673" y="744" width="1" height="3" fill="#fff"/><rect x="769" y="744" width="1" height="3" fill="#fff"/><rect x="865" y="744" width="1" height="3" fill="#fff"/><polygon points="1,736.5 1,742 7,742" fill="#0000a0"/>
<g font-family="'Liberation Sans', sans-serif" font-size="12.4px" shape-rendering="auto"><text x="19.2" y="15" fill="#fff" textLength="63.5" lengthAdjust="spacingAndGlyphs">EURUSD,M1</text><text x="92.4" y="15" fill="#fff" textLength="45.4" lengthAdjust="spacingAndGlyphs">1.05090</text><text x="142.2" y="15" fill="#fff" textLength="45.4" lengthAdjust="spacingAndGlyphs">1.05109</text><text x="192.1" y="15" fill="#fff" textLength="45.4" lengthAdjust="spacingAndGlyphs">1.05090</text><text x="242.0" y="15" fill="#fff" textLength="45.4" lengthAdjust="spacingAndGlyphs">1.05109</text><text x="954.6" y="39.7" fill="#fff" textLength="45.2" lengthAdjust="spacingAndGlyphs">1.05185</text><text x="954.6" y="94.7" fill="#fff" textLength="45.2" lengthAdjust="spacingAndGlyphs">1.05145</text><text x="954.6" y="148.7" fill="#fff" textLength="45.2" lengthAdjust="spacingAndGlyphs">1.05105</text><text x="954.6" y="202.7" fill="#fff" textLength="45.2" lengthAdjust="spacingAndGlyphs">1.05065</text><text x="954.6" y="257.7" fill="#fff" textLength="45.2" lengthAdjust="spacingAndGlyphs">1.05025</text><text x="954.6" y="311.7" fill="#fff" textLength="45.2" lengthAdjust="spacingAndGlyphs">1.04985</text><text x="954.6" y="365.7" fill="#fff" textLength="45.2" lengthAdjust="spacingAndGlyphs">1.04945</text><text x="951.8" y="398" fill="#fff" textLength="20.2" lengthAdjust="spacingAndGlyphs">108</text><text x="0.3" y="759.3" fill="#fff" textLength="62" lengthAdjust="spacingAndGlyphs">8 Dec 2022</text><text x="96.6" y="759.3" fill="#fff" textLength="67" lengthAdjust="spacingAndGlyphs">8 Dec 07:02</text><text x="192.6" y="759.3" fill="#fff" textLength="67" lengthAdjust="spacingAndGlyphs">8 Dec 07:14</text><text x="288.6" y="759.3" fill="#fff" textLength="67" lengthAdjust="spacingAndGlyphs">8 Dec 07:26</text><text x="384.6" y="759.3" fill="#fff" textLength="67" lengthAdjust="spacingAndGlyphs">8 Dec 07:38</text><text x="480.6" y="759.3" fill="#fff" textLength="67" lengthAdjust="spacingAndGlyphs">8 Dec 07:50</text><text x="576.6" y="759.3" fill="#fff" textLength="67" lengthAdjust="spacingAndGlyphs">8 Dec 08:02</text><text x="672.6" y="759.3" fill="#fff" textLength="67" lengthAdjust="spacingAndGlyphs">8 Dec 08:14</text><text x="768.6" y="759.3" fill="#fff" textLength="67" lengthAdjust="spacingAndGlyphs">8 Dec 08:26</text><text x="864.6" y="759.3" fill="#fff" textLength="67" lengthAdjust="spacingAndGlyphs">8 Dec 08:38</text><g clip-path="url(#cpHdr)"><text x="5.5" y="400" fill="#fff" textLength="69.8" lengthAdjust="spacingAndGlyphs">STOStd_4TF</text><text x="80.5" y="400" fill="#fff" textLength="44.6" lengthAdjust="spacingAndGlyphs">90.2785</text><text x="130.5" y="400" fill="#fff" textLength="44.6" lengthAdjust="spacingAndGlyphs">90.8130</text><text x="180.5" y="400" fill="#fff" textLength="44.6" lengthAdjust="spacingAndGlyphs">91.0151</text><text x="230.5" y="400" fill="#fff" textLength="44.6" lengthAdjust="spacingAndGlyphs">91.2477</text><text x="280.5" y="400" fill="#fff" textLength="44.6" lengthAdjust="spacingAndGlyphs">90.9091</text><text x="330.5" y="400" fill="#fff" textLength="44.6" lengthAdjust="spacingAndGlyphs">91.4773</text><text x="380.5" y="400" fill="#fff" textLength="44.6" lengthAdjust="spacingAndGlyphs">87.5912</text><text x="430.5" y="400" fill="#fff" textLength="44.6" lengthAdjust="spacingAndGlyphs">75.8663</text><text x="484.3" y="400" fill="#fff" textLength="69.8" lengthAdjust="spacingAndGlyphs">STOStd_4TF</text><text x="559.6" y="400" fill="#fff" textLength="44.6" lengthAdjust="spacingAndGlyphs">89.3678</text><text x="609.5" y="400" fill="#fff" textLength="44.6" lengthAdjust="spacingAndGlyphs">90.1791</text><text x="659.3" y="400" fill="#fff" textLength="44.6" lengthAdjust="spacingAndGlyphs">88.2689</text><text x="709.2" y="400" fill="#fff" textLength="44.6" lengthAdjust="spacingAndGlyphs">89.3069</text><text x="759.0" y="400" fill="#fff" textLength="44.6" lengthAdjust="spacingAndGlyphs">86.8794</text><text x="808.9" y="400" fill="#fff" textLength="44.6" lengthAdjust="spacingAndGlyphs">88.1180</text><text x="858.7" y="400" fill="#fff" textLength="44.6" lengthAdjust="spacingAndGlyphs">86.0821</text><text x="908.5" y="400" fill="#fff" textLength="44.6" lengthAdjust="spacingAndGlyphs">86.9982</text></g><text x="950.7" y="740" fill="#fff">0</text></g>
<rect x="949" y="132" width="56" height="14" fill="#fff"/>
<rect x="949" y="405" width="23" height="14" fill="#fff"/>
<rect x="949" y="570" width="16" height="14" fill="#0000ff"/>
<rect x="949" y="735" width="9" height="8" fill="#fff"/>
<g font-family="'Liberation Sans', sans-serif" font-size="12.4px" shape-rendering="auto"><text x="954.7" y="143.9" fill="#000" textLength="44.8" lengthAdjust="spacingAndGlyphs">1.05109</text><text x="951.3" y="416.7" fill="#000" textLength="19.5" lengthAdjust="spacingAndGlyphs">100</text><text x="951" y="581.7" fill="#000" textLength="12.6" lengthAdjust="spacingAndGlyphs">50</text><g clip-path="url(#cpZero)"><text x="950.7" y="747.2" fill="#000">0</text></g></g>
<g shape-rendering="auto"><text transform="translate(1.5,35) scale(1.42,1)" font-family="'Liberation Sans', IPAGothic, 'Noto Sans CJK JP', sans-serif" font-size="14.5px" fill="#fff" stroke="#fff" stroke-width="0.35">残り</text><text transform="translate(71.5,35) scale(1.42,1)" font-family="'Liberation Sans', IPAGothic, 'Noto Sans CJK JP', sans-serif" font-size="14.5px" fill="#fff" stroke="#fff" stroke-width="0.35">分</text><text transform="translate(131.5,35) scale(1.42,1)" font-family="'Liberation Sans', IPAGothic, 'Noto Sans CJK JP', sans-serif" font-size="14.5px" fill="#fff" stroke="#fff" stroke-width="0.35">秒</text><text x="52.5" y="35" font-family="'Liberation Sans', sans-serif" font-size="17px" fill="#fff" stroke="#fff" stroke-width="0.4" textLength="9" lengthAdjust="spacingAndGlyphs">0</text><text x="102" y="35" font-family="'Liberation Sans', sans-serif" font-size="17px" fill="#fff" stroke="#fff" stroke-width="0.4" textLength="20.5" lengthAdjust="spacingAndGlyphs">17</text></g>
<polygon points="4,8 13,8 8.5,13" fill="#fff" shape-rendering="auto"/>
<g shape-rendering="auto" fill="none" stroke="#ff0000" stroke-width="3"><ellipse cx="296.2" cy="363.7" rx="34.7" ry="31.9"/><ellipse cx="283.2" cy="699" rx="59.5" ry="57.5"/></g>
</svg>
</body></html>
